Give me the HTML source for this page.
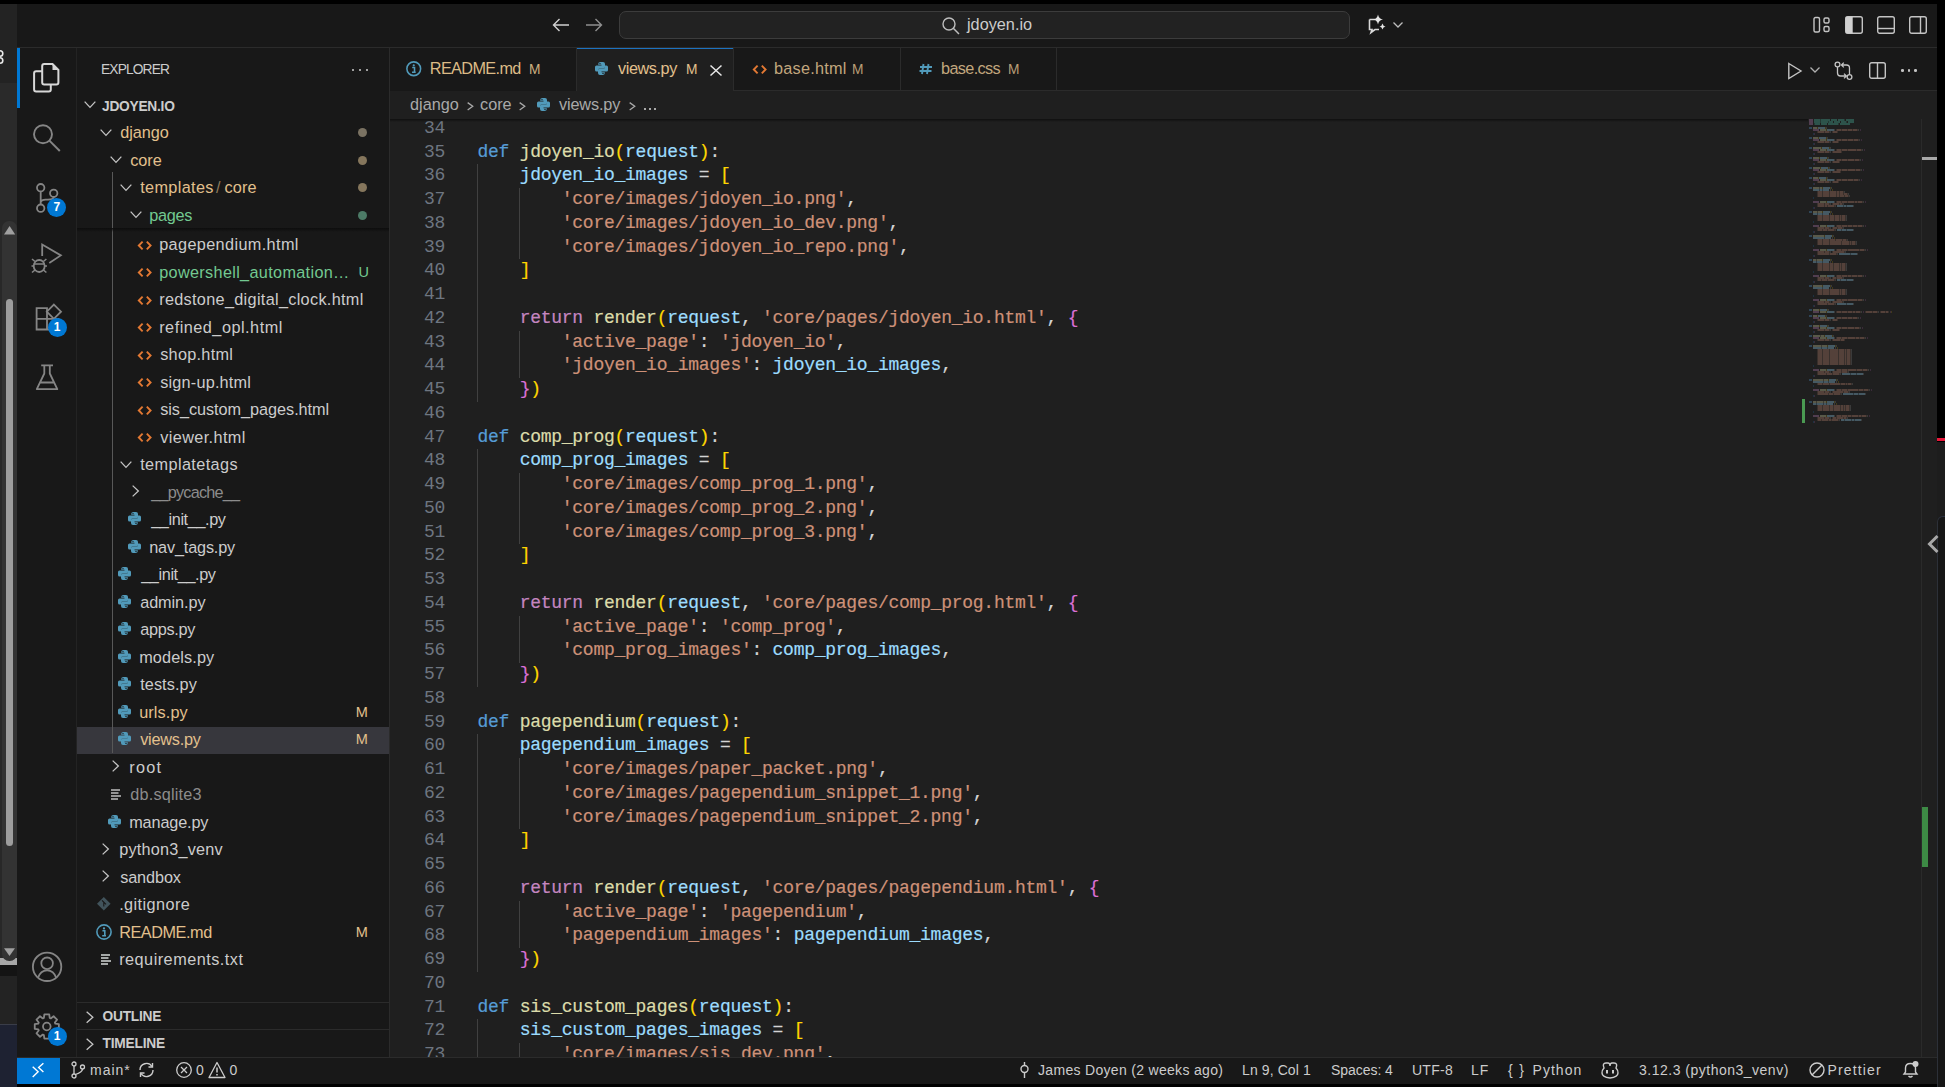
<!DOCTYPE html><html><head><meta charset="utf-8"><style>html,body{margin:0;padding:0;width:1945px;height:1087px;overflow:hidden;background:#000}</style></head><body><div style="position:relative;width:1945px;height:1087px;overflow:hidden"><div style="position:absolute;left:0px;top:0px;width:1945px;height:1087px;background:#000;"></div>
<div style="position:absolute;left:0px;top:4px;width:17px;height:79px;background:#232323;"></div>
<div style="position:absolute;left:0px;top:83px;width:17px;height:137px;background:#2a2a2a;"></div>
<div style="position:absolute;left:0px;top:220px;width:17px;height:745px;background:#282828;"></div>
<div style="position:absolute;left:0px;top:958px;width:17px;height:6.7px;background:#a8a8a8;"></div>
<div style="position:absolute;left:2.2px;top:220.7px;width:14.4px;height:740.7px;background:#333333;border-radius:7.2px"></div>
<div style="position:absolute;left:6px;top:299.4px;width:7.2px;height:547px;background:#9d9d9d;border-radius:3.6px"></div>
<svg style="position:absolute;left:3px;top:225px;" width="13" height="11" viewBox="0 0 13 11"><path d="M6.6 1 L12.2 9.5 L1 9.5 Z" fill="#a0a0a0"/></svg>
<svg style="position:absolute;left:3px;top:947px;" width="13" height="10" viewBox="0 0 13 10"><path d="M1 1.2 L12 1.2 L6.5 9 Z" fill="#a0a0a0"/></svg>
<div style="position:absolute;left:0px;top:964.7px;width:17px;height:11px;background:#141414;"></div>
<div style="position:absolute;left:0px;top:975.8px;width:17px;height:48px;background:#232323;"></div>
<div style="position:absolute;left:0px;top:1023.8px;width:17px;height:1px;background:#3a3d48;"></div>
<div style="position:absolute;left:0px;top:1024.8px;width:17px;height:62.2px;background:#1e2232;"></div>
<svg style="position:absolute;left:-4px;top:47px;" width="10" height="22" viewBox="0 0 10 22"><circle cx="4" cy="6.5" r="2.8" fill="none" stroke="#e8e8e8" stroke-width="1.6"/><circle cx="4" cy="13.5" r="2.8" fill="none" stroke="#e8e8e8" stroke-width="1.6"/></svg>
<div style="position:absolute;left:1937px;top:0px;width:8px;height:1087px;background:#000;"></div>
<div style="position:absolute;left:1937.4px;top:438.4px;width:7.6px;height:3.1px;background:#e8173a;"></div>
<div style="position:absolute;left:1937.4px;top:441.5px;width:7.6px;height:80px;background:#1d1d1d;"></div>
<div style="position:absolute;left:1937.4px;top:516px;width:10px;height:571px;background:#161616;border-left:1px solid #2c3038;border-top:1px solid #2a3040;border-top-left-radius:6px;box-sizing:border-box"></div>
<div style="position:absolute;left:17px;top:4px;width:1920px;height:43px;background:#181818;"></div>
<div style="position:absolute;left:17px;top:47px;width:1920px;height:1px;background:#2b2b2b;"></div>
<div style="position:absolute;left:17px;top:48px;width:60px;height:1009px;background:#181818;"></div>
<div style="position:absolute;left:76px;top:48px;width:1px;height:1009px;background:#232323;"></div>
<div style="position:absolute;left:77px;top:48px;width:312px;height:1009px;background:#181818;"></div>
<div style="position:absolute;left:389px;top:48px;width:1px;height:1009px;background:#2b2b2b;"></div>
<div style="position:absolute;left:390px;top:48px;width:1547px;height:43px;background:#181818;"></div>
<div style="position:absolute;left:390px;top:90px;width:1547px;height:1px;background:#2b2b2b;"></div>
<div style="position:absolute;left:390px;top:91px;width:1547px;height:966px;background:#1f1f1f;"></div>
<div style="position:absolute;left:17px;top:1057px;width:1920px;height:27px;background:#181818;"></div>
<div style="position:absolute;left:17px;top:1057px;width:1920px;height:1px;background:#2b2b2b;"></div>
<!--CONTENT-->
<svg style="position:absolute;left:551px;top:17px;" width="20" height="16" viewBox="0 0 20 16"><path d="M2.5 8 H18 M8.5 2 L2.5 8 L8.5 14" fill="none" stroke="#d0d0d0" stroke-width="1.4"/></svg>
<svg style="position:absolute;left:584px;top:17px;" width="20" height="16" viewBox="0 0 20 16"><path d="M2 8 H17.5 M11.5 2 L17.5 8 L11.5 14" fill="none" stroke="#8f8f8f" stroke-width="1.4"/></svg>
<div style="position:absolute;left:619px;top:11px;width:731px;height:28px;background:#222222;border:1px solid #3c3c3c;border-radius:7px;box-sizing:border-box"></div>
<svg style="position:absolute;left:941px;top:16px;" width="20" height="19" viewBox="0 0 20 19"><circle cx="8" cy="8" r="6" fill="none" stroke="#bdbdbd" stroke-width="1.4"/><path d="M12.3 12.3 L18 18" stroke="#bdbdbd" stroke-width="1.5"/></svg>
<div style="position:absolute;left:967.00px;top:13.8px;white-space:pre;font-family:'Liberation Sans', sans-serif;font-size:16.25px;line-height:20px;color:#cccccc;font-weight:400;letter-spacing:0.000px;">jdoyen.io</div>
<svg style="position:absolute;left:1366px;top:13px;" width="24" height="22" viewBox="0 0 24 22"><path d="M3.5 6.5 H9 M3.5 6.5 V16.5 H6 L5 19.5 L9 16.5 H13" fill="none" stroke="#d8d8d8" stroke-width="1.6"/><path d="M12 1.5 Q12.8 5.8 17 6.5 Q12.8 7.2 12 11.5 Q11.2 7.2 7 6.5 Q11.2 5.8 12 1.5Z" fill="#e6e6e6"/><path d="M16.5 10.5 Q17 13 19.5 13.5 Q17 14 16.5 16.5 Q16 14 13.5 13.5 Q16 13 16.5 10.5Z" fill="#e6e6e6"/></svg>
<svg style="position:absolute;left:1392px;top:21px;" width="12" height="8" viewBox="0 0 12 8"><path d="M1.5 1.5 L6 6 L10.5 1.5" fill="none" stroke="#bdbdbd" stroke-width="1.3"/></svg>
<svg style="position:absolute;left:1812px;top:16px;" width="20" height="18" viewBox="0 0 20 18"><rect x="2" y="1.5" width="5.5" height="14.5" rx="1.5" fill="none" stroke="#c4c4c4" stroke-width="1.4"/><rect x="12" y="2" width="5" height="5" rx="1.5" fill="none" stroke="#c4c4c4" stroke-width="1.4"/><rect x="12" y="10.5" width="5" height="5" rx="1.5" fill="none" stroke="#c4c4c4" stroke-width="1.4"/></svg>
<svg style="position:absolute;left:1844px;top:15px;" width="20" height="20" viewBox="0 0 20 20"><rect x="1.7" y="1.7" width="16.6" height="16.6" rx="2" fill="none" stroke="#c4c4c4" stroke-width="1.4"/><rect x="1.7" y="1.7" width="7" height="16.6" fill="#d0d0d0"/></svg>
<svg style="position:absolute;left:1876px;top:15px;" width="20" height="20" viewBox="0 0 20 20"><rect x="1.7" y="1.7" width="16.6" height="16.6" rx="2" fill="none" stroke="#c4c4c4" stroke-width="1.4"/><path d="M1.7 13.5 H18.3" stroke="#c4c4c4" stroke-width="1.4"/></svg>
<svg style="position:absolute;left:1908px;top:15px;" width="20" height="20" viewBox="0 0 20 20"><rect x="1.7" y="1.7" width="16.6" height="16.6" rx="2" fill="none" stroke="#c4c4c4" stroke-width="1.4"/><path d="M12.5 1.7 V18.3" stroke="#c4c4c4" stroke-width="1.4"/></svg>
<div style="position:absolute;left:17px;top:48px;width:2.5px;height:60px;background:#0078d4;"></div>
<svg style="position:absolute;left:17px;top:48px" width="60" height="1009" viewBox="17 48 60 1009"><path d="M44.2 64.1 H52.5 L58.4 70 V82.4 Q58.4 84.4 56.4 84.4 H44.2 Q42.2 84.4 42.2 82.4 V66.1 Q42.2 64.1 44.2 64.1 Z" fill="none" stroke="#d7d7d7" stroke-width="2"/><path d="M52.5 64.1 V70 H58.4 Z" fill="#d7d7d7"/><path d="M42.2 71.2 H36.1 Q34.1 71.2 34.1 73.2 V89.5 Q34.1 91.5 36.1 91.5 H48.8 Q50.8 91.5 50.8 89.5 V84.4" fill="none" stroke="#d7d7d7" stroke-width="2"/><circle cx="43" cy="134.2" r="9" fill="none" stroke="#858585" stroke-width="1.9"/><path d="M49.4 140.6 L59.8 151" stroke="#858585" stroke-width="2"/><circle cx="40.7" cy="187.7" r="3.7" fill="none" stroke="#858585" stroke-width="1.8"/><circle cx="53.7" cy="193.3" r="3.7" fill="none" stroke="#858585" stroke-width="1.8"/><circle cx="40.7" cy="208.2" r="3.7" fill="none" stroke="#858585" stroke-width="1.8"/><path d="M40.7 191.4 V204.5 M40.7 202 Q41.5 199.6 45.5 199.6 H48 Q53.7 199.6 53.7 197" fill="none" stroke="#858585" stroke-width="1.8"/><path d="M42.2 256 V244.5 L60.8 255.4 L49.3 263" fill="none" stroke="#858585" stroke-width="1.8" stroke-linejoin="miter"/><ellipse cx="39.2" cy="266" rx="5.5" ry="6" fill="none" stroke="#858585" stroke-width="1.8"/><path d="M33.7 264 H44.7 M32 259 L35 261.5 M46.4 259 L43.4 261.5 M31.5 266 H33.7 M44.7 266 H47 M32 272.5 L35 270 M46.4 272.5 L43.4 270" fill="none" stroke="#858585" stroke-width="1.6"/><path d="M36.6 308.1 H47 V318.8 H58.5 V329.5 H36.6 Z M47 318.8 V329.5 M36.6 318.8 H47" fill="none" stroke="#858585" stroke-width="1.8"/><path d="M53.9 304.6 L61 311.7 L53.9 318.8 L46.8 311.7 Z" fill="none" stroke="#858585" stroke-width="1.8"/><path d="M41.2 365.3 H53 M44.3 365.3 V373.5 L36.8 389.2 H57.3 L49.8 373.5 V365.3 M39.5 382.5 H54.6" fill="none" stroke="#858585" stroke-width="1.8" stroke-linejoin="round"/><circle cx="47.1" cy="966.8" r="14.2" fill="none" stroke="#858585" stroke-width="1.8"/><circle cx="47.1" cy="963.3" r="5.8" fill="none" stroke="#858585" stroke-width="1.8"/><path d="M38 977.8 Q40.5 970.3 47.1 970.3 Q53.7 970.3 56.2 977.8" fill="none" stroke="#858585" stroke-width="1.8"/><polygon points="55.31,1023.58 58.85,1024.06 58.85,1028.94 55.31,1029.42 54.88,1030.46 57.05,1033.30 53.60,1036.75 50.76,1034.58 49.72,1035.01 49.24,1038.55 44.36,1038.55 43.88,1035.01 42.84,1034.58 40.00,1036.75 36.55,1033.30 38.72,1030.46 38.29,1029.42 34.75,1028.94 34.75,1024.06 38.29,1023.58 38.72,1022.54 36.55,1019.70 40.00,1016.25 42.84,1018.42 43.88,1017.99 44.36,1014.45 49.24,1014.45 49.72,1017.99 50.76,1018.42 53.60,1016.25 57.05,1019.70 54.88,1022.54" fill="none" stroke="#858585" stroke-width="1.8" stroke-linejoin="round"/><circle cx="46.8" cy="1026.5" r="3.8" fill="none" stroke="#858585" stroke-width="1.8"/></svg>
<div style="position:absolute;left:47.3px;top:198.3px;width:19.2px;height:19.2px;border-radius:9.6px;background:#0078d4;color:#fff;font-family:'Liberation Sans', sans-serif;font-size:12px;font-weight:700;line-height:19.2px;text-align:center">7</div>
<div style="position:absolute;left:47.6px;top:318.29999999999995px;width:19.2px;height:19.2px;border-radius:9.6px;background:#0078d4;color:#fff;font-family:'Liberation Sans', sans-serif;font-size:12px;font-weight:700;line-height:19.2px;text-align:center">1</div>
<div style="position:absolute;left:47.6px;top:1027.0px;width:19.2px;height:19.2px;border-radius:9.6px;background:#0078d4;color:#fff;font-family:'Liberation Sans', sans-serif;font-size:12px;font-weight:700;line-height:19.2px;text-align:center">1</div>
<div style="position:absolute;left:101.00px;top:61px;white-space:pre;font-family:'Liberation Sans', sans-serif;font-size:13.75px;line-height:18px;color:#cccccc;font-weight:400;letter-spacing:-0.857px;">EXPLORER</div>
<div style="position:absolute;left:351.8px;top:68.5px;width:2.6px;height:2.6px;background:#cccccc;border-radius:1.3px"></div>
<div style="position:absolute;left:358.8px;top:68.5px;width:2.6px;height:2.6px;background:#cccccc;border-radius:1.3px"></div>
<div style="position:absolute;left:365.8px;top:68.5px;width:2.6px;height:2.6px;background:#cccccc;border-radius:1.3px"></div>
<svg style="position:absolute;left:82.5px;top:100px;" width="14" height="9" viewBox="0 0 14 9"><path d="M1.65 1.65 L7.0 7.35 L12.35 1.65" fill="none" stroke="#c5c5c5" stroke-width="1.3"/></svg>
<div style="position:absolute;left:102.00px;top:98px;white-space:pre;font-family:'Liberation Sans', sans-serif;font-size:13.75px;line-height:18px;color:#cccccc;font-weight:700;letter-spacing:-0.250px;">JDOYEN.IO</div>
<div style="position:absolute;left:77px;top:727.2px;width:312px;height:26.5px;background:#37373d;"></div>
<div style="position:absolute;left:112.4px;top:172px;width:1px;height:581.0px;background:#585858;"></div>
<svg style="position:absolute;left:137px;top:239.8px;" width="16" height="12" viewBox="0 0 16 12"><path d="M5.6 1.6 L1.8 5.5 L5.6 9.4 M9.8 1.6 L13.6 5.5 L9.8 9.4" fill="none" stroke="#e37933" stroke-width="1.9"/></svg>
<div style="position:absolute;left:159.20px;top:234.0px;white-space:pre;font-family:'Liberation Sans', sans-serif;font-size:16.25px;line-height:20px;color:#cccccc;font-weight:400;letter-spacing:0.367px;">pagependium.html</div>
<svg style="position:absolute;left:137px;top:267.3px;" width="16" height="12" viewBox="0 0 16 12"><path d="M5.6 1.6 L1.8 5.5 L5.6 9.4 M9.8 1.6 L13.6 5.5 L9.8 9.4" fill="none" stroke="#e37933" stroke-width="1.9"/></svg>
<div style="position:absolute;left:159.20px;top:261.5px;white-space:pre;font-family:'Liberation Sans', sans-serif;font-size:16.25px;line-height:20px;color:#73c991;font-weight:400;letter-spacing:0.324px;">powershell_automation…</div>
<div style="position:absolute;left:358.60px;top:261.5px;white-space:pre;font-family:'Liberation Sans', sans-serif;font-size:14.5px;line-height:20px;color:#73c991;font-weight:400;letter-spacing:0.000px;">U</div>
<svg style="position:absolute;left:137px;top:294.8px;" width="16" height="12" viewBox="0 0 16 12"><path d="M5.6 1.6 L1.8 5.5 L5.6 9.4 M9.8 1.6 L13.6 5.5 L9.8 9.4" fill="none" stroke="#e37933" stroke-width="1.9"/></svg>
<div style="position:absolute;left:159.20px;top:289.0px;white-space:pre;font-family:'Liberation Sans', sans-serif;font-size:16.25px;line-height:20px;color:#cccccc;font-weight:400;letter-spacing:0.312px;">redstone_digital_clock.html</div>
<svg style="position:absolute;left:137px;top:322.3px;" width="16" height="12" viewBox="0 0 16 12"><path d="M5.6 1.6 L1.8 5.5 L5.6 9.4 M9.8 1.6 L13.6 5.5 L9.8 9.4" fill="none" stroke="#e37933" stroke-width="1.9"/></svg>
<div style="position:absolute;left:159.20px;top:316.5px;white-space:pre;font-family:'Liberation Sans', sans-serif;font-size:16.25px;line-height:20px;color:#cccccc;font-weight:400;letter-spacing:0.500px;">refined_opl.html</div>
<svg style="position:absolute;left:137px;top:349.8px;" width="16" height="12" viewBox="0 0 16 12"><path d="M5.6 1.6 L1.8 5.5 L5.6 9.4 M9.8 1.6 L13.6 5.5 L9.8 9.4" fill="none" stroke="#e37933" stroke-width="1.9"/></svg>
<div style="position:absolute;left:160.20px;top:344.0px;white-space:pre;font-family:'Liberation Sans', sans-serif;font-size:16.25px;line-height:20px;color:#cccccc;font-weight:400;letter-spacing:0.287px;">shop.html</div>
<svg style="position:absolute;left:137px;top:377.3px;" width="16" height="12" viewBox="0 0 16 12"><path d="M5.6 1.6 L1.8 5.5 L5.6 9.4 M9.8 1.6 L13.6 5.5 L9.8 9.4" fill="none" stroke="#e37933" stroke-width="1.9"/></svg>
<div style="position:absolute;left:160.20px;top:371.5px;white-space:pre;font-family:'Liberation Sans', sans-serif;font-size:16.25px;line-height:20px;color:#cccccc;font-weight:400;letter-spacing:0.200px;">sign-up.html</div>
<svg style="position:absolute;left:137px;top:404.8px;" width="16" height="12" viewBox="0 0 16 12"><path d="M5.6 1.6 L1.8 5.5 L5.6 9.4 M9.8 1.6 L13.6 5.5 L9.8 9.4" fill="none" stroke="#e37933" stroke-width="1.9"/></svg>
<div style="position:absolute;left:160.20px;top:399.0px;white-space:pre;font-family:'Liberation Sans', sans-serif;font-size:16.25px;line-height:20px;color:#cccccc;font-weight:400;letter-spacing:-0.040px;">sis_custom_pages.html</div>
<svg style="position:absolute;left:137px;top:432.3px;" width="16" height="12" viewBox="0 0 16 12"><path d="M5.6 1.6 L1.8 5.5 L5.6 9.4 M9.8 1.6 L13.6 5.5 L9.8 9.4" fill="none" stroke="#e37933" stroke-width="1.9"/></svg>
<div style="position:absolute;left:160.20px;top:426.5px;white-space:pre;font-family:'Liberation Sans', sans-serif;font-size:16.25px;line-height:20px;color:#cccccc;font-weight:400;letter-spacing:0.390px;">viewer.html</div>
<svg style="position:absolute;left:118.5px;top:459.5px;" width="14" height="9" viewBox="0 0 14 9"><path d="M1.65 1.65 L7.0 7.35 L12.35 1.65" fill="none" stroke="#c5c5c5" stroke-width="1.3"/></svg>
<div style="position:absolute;left:140.20px;top:454.0px;white-space:pre;font-family:'Liberation Sans', sans-serif;font-size:16.25px;line-height:20px;color:#cccccc;font-weight:400;letter-spacing:0.391px;">templatetags</div>
<svg style="position:absolute;left:131.2px;top:484.0px;" width="9" height="14" viewBox="0 0 9 14"><path d="M1.65 1.65 L7.35 7.0 L1.65 12.35" fill="none" stroke="#c5c5c5" stroke-width="1.3"/></svg>
<div style="position:absolute;left:151.20px;top:481.5px;white-space:pre;font-family:'Liberation Sans', sans-serif;font-size:16.25px;line-height:20px;color:#8c8c8c;font-weight:400;letter-spacing:-0.780px;">__pycache__</div>
<svg style="position:absolute;left:126.5px;top:511.0px;" width="16" height="16" viewBox="0 0 16 16"><path d="M6.5 1 H9 Q11 1 11 3 V6 Q11 7.5 9.5 7.5 H5.5 Q4 7.5 4 9 V10.5 H2.5 Q1 10.5 1 9 V6 Q1 4.5 2.5 4.5 H7.5 V3.7 H4.2 V3 Q4.2 1 6.5 1 Z" fill="#519aba"/><path d="M8.5 14 H6 Q4 14 4 12 V9 Q4 7.5 5.5 7.5 H9.5 Q11 7.5 11 6 V4.5 H12.5 Q14 4.5 14 6 V9 Q14 10.5 12.5 10.5 H7.5 V11.3 H10.8 V12 Q10.8 14 8.5 14 Z" fill="#519aba"/><circle cx="6" cy="2.6" r="0.7" fill="#181818"/><circle cx="9" cy="12.4" r="0.7" fill="#181818"/></svg>
<div style="position:absolute;left:151.20px;top:509.0px;white-space:pre;font-family:'Liberation Sans', sans-serif;font-size:16.25px;line-height:20px;color:#cccccc;font-weight:400;letter-spacing:-0.380px;">__init__.py</div>
<svg style="position:absolute;left:126.5px;top:538.5px;" width="16" height="16" viewBox="0 0 16 16"><path d="M6.5 1 H9 Q11 1 11 3 V6 Q11 7.5 9.5 7.5 H5.5 Q4 7.5 4 9 V10.5 H2.5 Q1 10.5 1 9 V6 Q1 4.5 2.5 4.5 H7.5 V3.7 H4.2 V3 Q4.2 1 6.5 1 Z" fill="#519aba"/><path d="M8.5 14 H6 Q4 14 4 12 V9 Q4 7.5 5.5 7.5 H9.5 Q11 7.5 11 6 V4.5 H12.5 Q14 4.5 14 6 V9 Q14 10.5 12.5 10.5 H7.5 V11.3 H10.8 V12 Q10.8 14 8.5 14 Z" fill="#519aba"/><circle cx="6" cy="2.6" r="0.7" fill="#181818"/><circle cx="9" cy="12.4" r="0.7" fill="#181818"/></svg>
<div style="position:absolute;left:149.20px;top:536.5px;white-space:pre;font-family:'Liberation Sans', sans-serif;font-size:16.25px;line-height:20px;color:#cccccc;font-weight:400;letter-spacing:-0.160px;">nav_tags.py</div>
<svg style="position:absolute;left:116.5px;top:566.0px;" width="16" height="16" viewBox="0 0 16 16"><path d="M6.5 1 H9 Q11 1 11 3 V6 Q11 7.5 9.5 7.5 H5.5 Q4 7.5 4 9 V10.5 H2.5 Q1 10.5 1 9 V6 Q1 4.5 2.5 4.5 H7.5 V3.7 H4.2 V3 Q4.2 1 6.5 1 Z" fill="#519aba"/><path d="M8.5 14 H6 Q4 14 4 12 V9 Q4 7.5 5.5 7.5 H9.5 Q11 7.5 11 6 V4.5 H12.5 Q14 4.5 14 6 V9 Q14 10.5 12.5 10.5 H7.5 V11.3 H10.8 V12 Q10.8 14 8.5 14 Z" fill="#519aba"/><circle cx="6" cy="2.6" r="0.7" fill="#181818"/><circle cx="9" cy="12.4" r="0.7" fill="#181818"/></svg>
<div style="position:absolute;left:141.20px;top:564.0px;white-space:pre;font-family:'Liberation Sans', sans-serif;font-size:16.25px;line-height:20px;color:#cccccc;font-weight:400;letter-spacing:-0.380px;">__init__.py</div>
<svg style="position:absolute;left:116.5px;top:593.5px;" width="16" height="16" viewBox="0 0 16 16"><path d="M6.5 1 H9 Q11 1 11 3 V6 Q11 7.5 9.5 7.5 H5.5 Q4 7.5 4 9 V10.5 H2.5 Q1 10.5 1 9 V6 Q1 4.5 2.5 4.5 H7.5 V3.7 H4.2 V3 Q4.2 1 6.5 1 Z" fill="#519aba"/><path d="M8.5 14 H6 Q4 14 4 12 V9 Q4 7.5 5.5 7.5 H9.5 Q11 7.5 11 6 V4.5 H12.5 Q14 4.5 14 6 V9 Q14 10.5 12.5 10.5 H7.5 V11.3 H10.8 V12 Q10.8 14 8.5 14 Z" fill="#519aba"/><circle cx="6" cy="2.6" r="0.7" fill="#181818"/><circle cx="9" cy="12.4" r="0.7" fill="#181818"/></svg>
<div style="position:absolute;left:140.20px;top:591.5px;white-space:pre;font-family:'Liberation Sans', sans-serif;font-size:16.25px;line-height:20px;color:#cccccc;font-weight:400;letter-spacing:-0.086px;">admin.py</div>
<svg style="position:absolute;left:116.5px;top:621.0px;" width="16" height="16" viewBox="0 0 16 16"><path d="M6.5 1 H9 Q11 1 11 3 V6 Q11 7.5 9.5 7.5 H5.5 Q4 7.5 4 9 V10.5 H2.5 Q1 10.5 1 9 V6 Q1 4.5 2.5 4.5 H7.5 V3.7 H4.2 V3 Q4.2 1 6.5 1 Z" fill="#519aba"/><path d="M8.5 14 H6 Q4 14 4 12 V9 Q4 7.5 5.5 7.5 H9.5 Q11 7.5 11 6 V4.5 H12.5 Q14 4.5 14 6 V9 Q14 10.5 12.5 10.5 H7.5 V11.3 H10.8 V12 Q10.8 14 8.5 14 Z" fill="#519aba"/><circle cx="6" cy="2.6" r="0.7" fill="#181818"/><circle cx="9" cy="12.4" r="0.7" fill="#181818"/></svg>
<div style="position:absolute;left:140.20px;top:619.0px;white-space:pre;font-family:'Liberation Sans', sans-serif;font-size:16.25px;line-height:20px;color:#cccccc;font-weight:400;letter-spacing:-0.283px;">apps.py</div>
<svg style="position:absolute;left:116.5px;top:648.5px;" width="16" height="16" viewBox="0 0 16 16"><path d="M6.5 1 H9 Q11 1 11 3 V6 Q11 7.5 9.5 7.5 H5.5 Q4 7.5 4 9 V10.5 H2.5 Q1 10.5 1 9 V6 Q1 4.5 2.5 4.5 H7.5 V3.7 H4.2 V3 Q4.2 1 6.5 1 Z" fill="#519aba"/><path d="M8.5 14 H6 Q4 14 4 12 V9 Q4 7.5 5.5 7.5 H9.5 Q11 7.5 11 6 V4.5 H12.5 Q14 4.5 14 6 V9 Q14 10.5 12.5 10.5 H7.5 V11.3 H10.8 V12 Q10.8 14 8.5 14 Z" fill="#519aba"/><circle cx="6" cy="2.6" r="0.7" fill="#181818"/><circle cx="9" cy="12.4" r="0.7" fill="#181818"/></svg>
<div style="position:absolute;left:139.20px;top:646.5px;white-space:pre;font-family:'Liberation Sans', sans-serif;font-size:16.25px;line-height:20px;color:#cccccc;font-weight:400;letter-spacing:0.125px;">models.py</div>
<svg style="position:absolute;left:116.5px;top:676.0px;" width="16" height="16" viewBox="0 0 16 16"><path d="M6.5 1 H9 Q11 1 11 3 V6 Q11 7.5 9.5 7.5 H5.5 Q4 7.5 4 9 V10.5 H2.5 Q1 10.5 1 9 V6 Q1 4.5 2.5 4.5 H7.5 V3.7 H4.2 V3 Q4.2 1 6.5 1 Z" fill="#519aba"/><path d="M8.5 14 H6 Q4 14 4 12 V9 Q4 7.5 5.5 7.5 H9.5 Q11 7.5 11 6 V4.5 H12.5 Q14 4.5 14 6 V9 Q14 10.5 12.5 10.5 H7.5 V11.3 H10.8 V12 Q10.8 14 8.5 14 Z" fill="#519aba"/><circle cx="6" cy="2.6" r="0.7" fill="#181818"/><circle cx="9" cy="12.4" r="0.7" fill="#181818"/></svg>
<div style="position:absolute;left:140.20px;top:674.0px;white-space:pre;font-family:'Liberation Sans', sans-serif;font-size:16.25px;line-height:20px;color:#cccccc;font-weight:400;letter-spacing:0.086px;">tests.py</div>
<svg style="position:absolute;left:116.5px;top:703.5px;" width="16" height="16" viewBox="0 0 16 16"><path d="M6.5 1 H9 Q11 1 11 3 V6 Q11 7.5 9.5 7.5 H5.5 Q4 7.5 4 9 V10.5 H2.5 Q1 10.5 1 9 V6 Q1 4.5 2.5 4.5 H7.5 V3.7 H4.2 V3 Q4.2 1 6.5 1 Z" fill="#519aba"/><path d="M8.5 14 H6 Q4 14 4 12 V9 Q4 7.5 5.5 7.5 H9.5 Q11 7.5 11 6 V4.5 H12.5 Q14 4.5 14 6 V9 Q14 10.5 12.5 10.5 H7.5 V11.3 H10.8 V12 Q10.8 14 8.5 14 Z" fill="#519aba"/><circle cx="6" cy="2.6" r="0.7" fill="#181818"/><circle cx="9" cy="12.4" r="0.7" fill="#181818"/></svg>
<div style="position:absolute;left:139.20px;top:701.5px;white-space:pre;font-family:'Liberation Sans', sans-serif;font-size:16.25px;line-height:20px;color:#e2c08d;font-weight:400;letter-spacing:0.100px;">urls.py</div>
<div style="position:absolute;left:355.70px;top:701.5px;white-space:pre;font-family:'Liberation Sans', sans-serif;font-size:14.5px;line-height:20px;color:#e2c08d;font-weight:400;letter-spacing:0.000px;">M</div>
<svg style="position:absolute;left:116.5px;top:731.0px;" width="16" height="16" viewBox="0 0 16 16"><path d="M6.5 1 H9 Q11 1 11 3 V6 Q11 7.5 9.5 7.5 H5.5 Q4 7.5 4 9 V10.5 H2.5 Q1 10.5 1 9 V6 Q1 4.5 2.5 4.5 H7.5 V3.7 H4.2 V3 Q4.2 1 6.5 1 Z" fill="#519aba"/><path d="M8.5 14 H6 Q4 14 4 12 V9 Q4 7.5 5.5 7.5 H9.5 Q11 7.5 11 6 V4.5 H12.5 Q14 4.5 14 6 V9 Q14 10.5 12.5 10.5 H7.5 V11.3 H10.8 V12 Q10.8 14 8.5 14 Z" fill="#519aba"/><circle cx="6" cy="2.6" r="0.7" fill="#181818"/><circle cx="9" cy="12.4" r="0.7" fill="#181818"/></svg>
<div style="position:absolute;left:140.20px;top:729.0px;white-space:pre;font-family:'Liberation Sans', sans-serif;font-size:16.25px;line-height:20px;color:#e2c08d;font-weight:400;letter-spacing:-0.229px;">views.py</div>
<div style="position:absolute;left:355.70px;top:729.0px;white-space:pre;font-family:'Liberation Sans', sans-serif;font-size:14.5px;line-height:20px;color:#e2c08d;font-weight:400;letter-spacing:0.000px;">M</div>
<svg style="position:absolute;left:111.2px;top:759.0px;" width="9" height="14" viewBox="0 0 9 14"><path d="M1.65 1.65 L7.35 7.0 L1.65 12.35" fill="none" stroke="#c5c5c5" stroke-width="1.3"/></svg>
<div style="position:absolute;left:129.20px;top:756.5px;white-space:pre;font-family:'Liberation Sans', sans-serif;font-size:16.25px;line-height:20px;color:#cccccc;font-weight:400;letter-spacing:1.300px;">root</div>
<svg style="position:absolute;left:110px;top:787.5px;" width="14" height="14" viewBox="0 0 14 14"><path d="M1 2 H10 M1 5 H8.5 M1 8 H11 M1 11 H8" stroke="#bdbdbd" stroke-width="1.7"/></svg>
<div style="position:absolute;left:130.20px;top:784.0px;white-space:pre;font-family:'Liberation Sans', sans-serif;font-size:16.25px;line-height:20px;color:#8c8c8c;font-weight:400;letter-spacing:0.200px;">db.sqlite3</div>
<svg style="position:absolute;left:106.5px;top:813.5px;" width="16" height="16" viewBox="0 0 16 16"><path d="M6.5 1 H9 Q11 1 11 3 V6 Q11 7.5 9.5 7.5 H5.5 Q4 7.5 4 9 V10.5 H2.5 Q1 10.5 1 9 V6 Q1 4.5 2.5 4.5 H7.5 V3.7 H4.2 V3 Q4.2 1 6.5 1 Z" fill="#519aba"/><path d="M8.5 14 H6 Q4 14 4 12 V9 Q4 7.5 5.5 7.5 H9.5 Q11 7.5 11 6 V4.5 H12.5 Q14 4.5 14 6 V9 Q14 10.5 12.5 10.5 H7.5 V11.3 H10.8 V12 Q10.8 14 8.5 14 Z" fill="#519aba"/><circle cx="6" cy="2.6" r="0.7" fill="#181818"/><circle cx="9" cy="12.4" r="0.7" fill="#181818"/></svg>
<div style="position:absolute;left:129.20px;top:811.5px;white-space:pre;font-family:'Liberation Sans', sans-serif;font-size:16.25px;line-height:20px;color:#cccccc;font-weight:400;letter-spacing:-0.137px;">manage.py</div>
<svg style="position:absolute;left:101.2px;top:841.5px;" width="9" height="14" viewBox="0 0 9 14"><path d="M1.65 1.65 L7.35 7.0 L1.65 12.35" fill="none" stroke="#c5c5c5" stroke-width="1.3"/></svg>
<div style="position:absolute;left:119.20px;top:839.0px;white-space:pre;font-family:'Liberation Sans', sans-serif;font-size:16.25px;line-height:20px;color:#cccccc;font-weight:400;letter-spacing:0.200px;">python3_venv</div>
<svg style="position:absolute;left:101.2px;top:869.0px;" width="9" height="14" viewBox="0 0 9 14"><path d="M1.65 1.65 L7.35 7.0 L1.65 12.35" fill="none" stroke="#c5c5c5" stroke-width="1.3"/></svg>
<div style="position:absolute;left:120.20px;top:866.5px;white-space:pre;font-family:'Liberation Sans', sans-serif;font-size:16.25px;line-height:20px;color:#cccccc;font-weight:400;letter-spacing:-0.117px;">sandbox</div>
<svg style="position:absolute;left:96.4px;top:896.0px;" width="16" height="16" viewBox="0 0 16 16"><path d="M7.8 1 L14.6 7.8 L7.8 14.6 L1 7.8 Z" fill="#41535b"/><path d="M6 4.4 L10 8.4 M7.8 6.2 V10.6" stroke="#181818" stroke-width="1.1"/></svg>
<div style="position:absolute;left:119.20px;top:894.0px;white-space:pre;font-family:'Liberation Sans', sans-serif;font-size:16.25px;line-height:20px;color:#cccccc;font-weight:400;letter-spacing:0.422px;">.gitignore</div>
<svg style="position:absolute;left:95.3px;top:923.0px;" width="18" height="18" viewBox="0 0 18 18"><g transform="translate(1,1) scale(1.0)"><circle cx="8" cy="8" r="7.1" fill="none" stroke="#519aba" stroke-width="1.6"/><circle cx="8" cy="4.4" r="1.15" fill="#519aba"/><path d="M6.4 6.7 H8.8 V11.7 H10 M6.2 11.7 H10" fill="none" stroke="#519aba" stroke-width="1.6"/></g></svg>
<div style="position:absolute;left:119.20px;top:921.5px;white-space:pre;font-family:'Liberation Sans', sans-serif;font-size:16.25px;line-height:20px;color:#e2c08d;font-weight:400;letter-spacing:-0.450px;">README.md</div>
<div style="position:absolute;left:355.70px;top:921.5px;white-space:pre;font-family:'Liberation Sans', sans-serif;font-size:14.5px;line-height:20px;color:#e2c08d;font-weight:400;letter-spacing:0.000px;">M</div>
<svg style="position:absolute;left:100px;top:952.5px;" width="14" height="14" viewBox="0 0 14 14"><path d="M1 2 H10 M1 5 H8.5 M1 8 H11 M1 11 H8" stroke="#d4d7d6" stroke-width="1.7"/></svg>
<div style="position:absolute;left:119.20px;top:949.0px;white-space:pre;font-family:'Liberation Sans', sans-serif;font-size:16.25px;line-height:20px;color:#cccccc;font-weight:400;letter-spacing:0.480px;">requirements.txt</div>
<div style="position:absolute;left:77px;top:118px;width:312px;height:110px;background:#181818;"></div>
<div style="position:absolute;left:77px;top:228px;width:312px;height:4px;background:linear-gradient(#0d0d0d,rgba(24,24,24,0));"></div>
<div style="position:absolute;left:112.4px;top:172px;width:1px;height:56px;background:#585858;"></div>
<svg style="position:absolute;left:98.5px;top:127.5px;" width="14" height="9" viewBox="0 0 14 9"><path d="M1.65 1.65 L7.0 7.35 L12.35 1.65" fill="none" stroke="#c5c5c5" stroke-width="1.3"/></svg>
<div style="position:absolute;left:120.20px;top:122.0px;white-space:pre;font-family:'Liberation Sans', sans-serif;font-size:16.25px;line-height:20px;color:#e2c08d;font-weight:400;letter-spacing:-0.020px;">django</div>
<div style="position:absolute;left:357.5px;top:128.0px;width:9px;height:9px;border-radius:4.5px;background:#7a7262"></div>
<svg style="position:absolute;left:108.5px;top:155.0px;" width="14" height="9" viewBox="0 0 14 9"><path d="M1.65 1.65 L7.0 7.35 L12.35 1.65" fill="none" stroke="#c5c5c5" stroke-width="1.3"/></svg>
<div style="position:absolute;left:130.20px;top:149.5px;white-space:pre;font-family:'Liberation Sans', sans-serif;font-size:16.25px;line-height:20px;color:#e2c08d;font-weight:400;letter-spacing:0.000px;">core</div>
<div style="position:absolute;left:357.5px;top:155.5px;width:9px;height:9px;border-radius:4.5px;background:#85765c"></div>
<svg style="position:absolute;left:118.5px;top:182.5px;" width="14" height="9" viewBox="0 0 14 9"><path d="M1.65 1.65 L7.0 7.35 L12.35 1.65" fill="none" stroke="#c5c5c5" stroke-width="1.3"/></svg>
<div style="position:absolute;left:140.20px;top:177.0px;white-space:pre;font-family:'Liberation Sans', sans-serif;font-size:16.25px;line-height:20px;color:#e2c08d;font-weight:400;letter-spacing:0.350px;">templates</div>
<div style="position:absolute;left:216.00px;top:177.0px;white-space:pre;font-family:'Liberation Sans', sans-serif;font-size:16.25px;line-height:20px;color:#8c7a5c;font-weight:400;letter-spacing:0.000px;">/</div>
<div style="position:absolute;left:224.50px;top:177.0px;white-space:pre;font-family:'Liberation Sans', sans-serif;font-size:16.25px;line-height:20px;color:#e2c08d;font-weight:400;letter-spacing:0.167px;">core</div>
<div style="position:absolute;left:357.5px;top:183.0px;width:9px;height:9px;border-radius:4.5px;background:#85765c"></div>
<svg style="position:absolute;left:128.5px;top:210.0px;" width="14" height="9" viewBox="0 0 14 9"><path d="M1.65 1.65 L7.0 7.35 L12.35 1.65" fill="none" stroke="#c5c5c5" stroke-width="1.3"/></svg>
<div style="position:absolute;left:149.20px;top:204.5px;white-space:pre;font-family:'Liberation Sans', sans-serif;font-size:16.25px;line-height:20px;color:#73c991;font-weight:400;letter-spacing:-0.275px;">pages</div>
<div style="position:absolute;left:357.5px;top:210.5px;width:9px;height:9px;border-radius:4.5px;background:#4c7a66"></div>
<div style="position:absolute;left:77px;top:1002px;width:312px;height:1px;background:#2b2b2b;"></div>
<div style="position:absolute;left:77px;top:1029px;width:312px;height:1px;background:#2b2b2b;"></div>
<svg style="position:absolute;left:85px;top:1009.5px;" width="9.5" height="14.5" viewBox="0 0 9.5 14.5"><path d="M1.65 1.65 L7.85 7.25 L1.65 12.85" fill="none" stroke="#c5c5c5" stroke-width="1.3"/></svg>
<div style="position:absolute;left:102.50px;top:1007.5px;white-space:pre;font-family:'Liberation Sans', sans-serif;font-size:13.75px;line-height:18px;color:#cccccc;font-weight:700;letter-spacing:-0.250px;">OUTLINE</div>
<svg style="position:absolute;left:85px;top:1037px;" width="9.5" height="14.5" viewBox="0 0 9.5 14.5"><path d="M1.65 1.65 L7.85 7.25 L1.65 12.85" fill="none" stroke="#c5c5c5" stroke-width="1.3"/></svg>
<div style="position:absolute;left:102.50px;top:1035.3px;white-space:pre;font-family:'Liberation Sans', sans-serif;font-size:13.75px;line-height:18px;color:#cccccc;font-weight:700;letter-spacing:-0.214px;">TIMELINE</div>
<div style="position:absolute;left:390px;top:48px;width:187px;height:43px;background:#181818;"></div>
<div style="position:absolute;left:576px;top:48px;width:1px;height:43px;background:#2b2b2b;"></div>
<div style="position:absolute;left:577px;top:48px;width:157px;height:44px;background:#1f1f1f;"></div>
<div style="position:absolute;left:577px;top:47.7px;width:157px;height:1.7px;background:#1c72c0;"></div>
<div style="position:absolute;left:733px;top:48px;width:1px;height:43px;background:#2b2b2b;"></div>
<div style="position:absolute;left:900px;top:48px;width:1px;height:43px;background:#2b2b2b;"></div>
<div style="position:absolute;left:1056px;top:48px;width:1px;height:43px;background:#2b2b2b;"></div>
<svg style="position:absolute;left:405px;top:60px;" width="17.5" height="17.5" viewBox="0 0 17.5 17.5"><g transform="translate(1,1) scale(0.96875)"><circle cx="8" cy="8" r="7.1" fill="none" stroke="#519aba" stroke-width="1.6"/><circle cx="8" cy="4.4" r="1.15" fill="#519aba"/><path d="M6.4 6.7 H8.8 V11.7 H10 M6.2 11.7 H10" fill="none" stroke="#519aba" stroke-width="1.6"/></g></svg>
<div style="position:absolute;left:429.80px;top:58.1px;white-space:pre;font-family:'Liberation Sans', sans-serif;font-size:16.25px;line-height:20px;color:#dcbb86;font-weight:400;letter-spacing:-0.637px;">README.md</div>
<div style="position:absolute;left:529.00px;top:59.5px;white-space:pre;font-family:'Liberation Sans', sans-serif;font-size:13.75px;line-height:20px;color:#cdb07f;font-weight:400;letter-spacing:0.000px;">M</div>
<svg style="position:absolute;left:594px;top:61px;" width="16" height="16" viewBox="0 0 16 16"><path d="M6.5 1 H9 Q11 1 11 3 V6 Q11 7.5 9.5 7.5 H5.5 Q4 7.5 4 9 V10.5 H2.5 Q1 10.5 1 9 V6 Q1 4.5 2.5 4.5 H7.5 V3.7 H4.2 V3 Q4.2 1 6.5 1 Z" fill="#519aba"/><path d="M8.5 14 H6 Q4 14 4 12 V9 Q4 7.5 5.5 7.5 H9.5 Q11 7.5 11 6 V4.5 H12.5 Q14 4.5 14 6 V9 Q14 10.5 12.5 10.5 H7.5 V11.3 H10.8 V12 Q10.8 14 8.5 14 Z" fill="#519aba"/><circle cx="6" cy="2.6" r="0.7" fill="#181818"/><circle cx="9" cy="12.4" r="0.7" fill="#181818"/></svg>
<div style="position:absolute;left:618.00px;top:58.1px;white-space:pre;font-family:'Liberation Sans', sans-serif;font-size:16.25px;line-height:20px;color:#e2c08d;font-weight:400;letter-spacing:-0.429px;">views.py</div>
<div style="position:absolute;left:686.00px;top:59.5px;white-space:pre;font-family:'Liberation Sans', sans-serif;font-size:13.75px;line-height:20px;color:#e2c08d;font-weight:400;letter-spacing:0.000px;">M</div>
<svg style="position:absolute;left:709px;top:64px;" width="14" height="13" viewBox="0 0 14 13"><path d="M1.5 1.5 L12.5 11.5 M12.5 1.5 L1.5 11.5" stroke="#e8e8e8" stroke-width="1.5"/></svg>
<svg style="position:absolute;left:751.7px;top:63.5px;" width="16" height="12" viewBox="0 0 16 12"><path d="M5.6 1.6 L1.8 5.5 L5.6 9.4 M9.8 1.6 L13.6 5.5 L9.8 9.4" fill="none" stroke="#e37933" stroke-width="1.9"/></svg>
<div style="position:absolute;left:774.00px;top:58.1px;white-space:pre;font-family:'Liberation Sans', sans-serif;font-size:16.25px;line-height:20px;color:#c2a77e;font-weight:400;letter-spacing:0.250px;">base.html</div>
<div style="position:absolute;left:852.00px;top:59.5px;white-space:pre;font-family:'Liberation Sans', sans-serif;font-size:13.75px;line-height:20px;color:#b89e76;font-weight:400;letter-spacing:0.000px;">M</div>
<svg style="position:absolute;left:919px;top:63px;" width="14" height="12" viewBox="0 0 14 12"><path d="M4.5 1 L3 11 M9.5 1 L8 11 M1 4 H13 M0.5 8 H12.5" stroke="#519aba" stroke-width="1.9"/></svg>
<div style="position:absolute;left:941.00px;top:58.1px;white-space:pre;font-family:'Liberation Sans', sans-serif;font-size:16.25px;line-height:20px;color:#c2a77e;font-weight:400;letter-spacing:-0.629px;">base.css</div>
<div style="position:absolute;left:1008.00px;top:59.5px;white-space:pre;font-family:'Liberation Sans', sans-serif;font-size:13.75px;line-height:20px;color:#b89e76;font-weight:400;letter-spacing:0.000px;">M</div>
<svg style="position:absolute;left:1787px;top:61.5px;" width="16" height="18" viewBox="0 0 16 18"><path d="M1.8 1.5 L14 9 L1.8 16.5 Z" fill="none" stroke="#c4c4c4" stroke-width="1.4" stroke-linejoin="miter"/></svg>
<svg style="position:absolute;left:1809px;top:65.5px;" width="12" height="8" viewBox="0 0 12 8"><path d="M1.5 1.5 L6 6 L10.5 1.5" fill="none" stroke="#b0b0b0" stroke-width="1.3"/></svg>
<svg style="position:absolute;left:1833px;top:60px;" width="22" height="22" viewBox="0 0 22 22"><circle cx="4.5" cy="4.5" r="2.4" fill="none" stroke="#c4c4c4" stroke-width="1.3"/><circle cx="16.5" cy="17" r="2.4" fill="none" stroke="#c4c4c4" stroke-width="1.3"/><path d="M4.5 7 V13 Q4.5 16 7.5 16 H13 M11 13.6 L13.4 16 L11 18.4" fill="none" stroke="#c4c4c4" stroke-width="1.3"/><path d="M16.5 14.5 V8 Q16.5 5 13.5 5 H8.5 M10.8 2.6 L8.4 5 L10.8 7.4" fill="none" stroke="#c4c4c4" stroke-width="1.3"/></svg>
<svg style="position:absolute;left:1867.5px;top:61px;" width="19" height="19" viewBox="0 0 19 19"><rect x="1.7" y="1.7" width="15.6" height="15.6" rx="2" fill="none" stroke="#c4c4c4" stroke-width="1.4"/><path d="M9.5 1.7 V17.3" stroke="#c4c4c4" stroke-width="1.4"/></svg>
<div style="position:absolute;left:1901.2px;top:69px;width:2.6px;height:2.6px;background:#c4c4c4;border-radius:1.3px"></div>
<div style="position:absolute;left:1907.7px;top:69px;width:2.6px;height:2.6px;background:#c4c4c4;border-radius:1.3px"></div>
<div style="position:absolute;left:1914.2px;top:69px;width:2.6px;height:2.6px;background:#c4c4c4;border-radius:1.3px"></div>
<div style="position:absolute;left:410.00px;top:93.6px;white-space:pre;font-family:'Liberation Sans', sans-serif;font-size:16.25px;line-height:20px;color:#a9a9a9;font-weight:400;letter-spacing:0.000px;">django</div>
<svg style="position:absolute;left:466px;top:100.7px;" width="8.4" height="10.6" viewBox="0 0 8.4 10.6"><path d="M1.65 1.65 L6.75 5.3 L1.65 8.95" fill="none" stroke="#a9a9a9" stroke-width="1.3"/></svg>
<div style="position:absolute;left:480.00px;top:93.6px;white-space:pre;font-family:'Liberation Sans', sans-serif;font-size:16.25px;line-height:20px;color:#a9a9a9;font-weight:400;letter-spacing:0.000px;">core</div>
<svg style="position:absolute;left:518px;top:100.7px;" width="8.4" height="10.6" viewBox="0 0 8.4 10.6"><path d="M1.65 1.65 L6.75 5.3 L1.65 8.95" fill="none" stroke="#a9a9a9" stroke-width="1.3"/></svg>
<svg style="position:absolute;left:536px;top:96.5px;" width="16" height="16" viewBox="0 0 16 16"><path d="M6.5 1 H9 Q11 1 11 3 V6 Q11 7.5 9.5 7.5 H5.5 Q4 7.5 4 9 V10.5 H2.5 Q1 10.5 1 9 V6 Q1 4.5 2.5 4.5 H7.5 V3.7 H4.2 V3 Q4.2 1 6.5 1 Z" fill="#519aba"/><path d="M8.5 14 H6 Q4 14 4 12 V9 Q4 7.5 5.5 7.5 H9.5 Q11 7.5 11 6 V4.5 H12.5 Q14 4.5 14 6 V9 Q14 10.5 12.5 10.5 H7.5 V11.3 H10.8 V12 Q10.8 14 8.5 14 Z" fill="#519aba"/><circle cx="6" cy="2.6" r="0.7" fill="#181818"/><circle cx="9" cy="12.4" r="0.7" fill="#181818"/></svg>
<div style="position:absolute;left:559.00px;top:93.6px;white-space:pre;font-family:'Liberation Sans', sans-serif;font-size:16.25px;line-height:20px;color:#a9a9a9;font-weight:400;letter-spacing:-0.143px;">views.py</div>
<svg style="position:absolute;left:627.5px;top:100.7px;" width="8.4" height="10.6" viewBox="0 0 8.4 10.6"><path d="M1.65 1.65 L6.75 5.3 L1.65 8.95" fill="none" stroke="#a9a9a9" stroke-width="1.3"/></svg>
<div style="position:absolute;left:643.5px;top:107.8px;width:2.2px;height:2.2px;background:#a9a9a9;"></div>
<div style="position:absolute;left:648.8px;top:107.8px;width:2.2px;height:2.2px;background:#a9a9a9;"></div>
<div style="position:absolute;left:654.1px;top:107.8px;width:2.2px;height:2.2px;background:#a9a9a9;"></div>
<div style="position:absolute;left:390px;top:119px;width:1418px;height:938px;overflow:hidden">
<div style="position:absolute;left:86.90px;top:45.25px;width:1px;height:237.50px;background:#404040"></div>
<div style="position:absolute;left:86.90px;top:330.25px;width:1px;height:237.50px;background:#404040"></div>
<div style="position:absolute;left:86.90px;top:615.25px;width:1px;height:237.50px;background:#404040"></div>
<div style="position:absolute;left:86.90px;top:900.25px;width:1px;height:213.75px;background:#404040"></div>
<div style="position:absolute;left:128.90px;top:69.00px;width:1px;height:71.25px;background:#404040"></div>
<div style="position:absolute;left:128.90px;top:211.50px;width:1px;height:47.50px;background:#404040"></div>
<div style="position:absolute;left:128.90px;top:354.00px;width:1px;height:71.25px;background:#404040"></div>
<div style="position:absolute;left:128.90px;top:496.50px;width:1px;height:47.50px;background:#404040"></div>
<div style="position:absolute;left:128.90px;top:639.00px;width:1px;height:71.25px;background:#404040"></div>
<div style="position:absolute;left:128.90px;top:781.50px;width:1px;height:47.50px;background:#404040"></div>
<div style="position:absolute;left:128.90px;top:924.00px;width:1px;height:190.00px;background:#404040"></div>
<div style="position:absolute;left:0px;top:-2.25px;width:55px;height:23.75px;text-align:right;font-family:'Liberation Mono', monospace;font-size:18px;letter-spacing:-0.3px;line-height:23.75px;color:#6e7681">34</div>
<div style="position:absolute;left:87.50px;top:-2.25px;white-space:pre;font-family:'Liberation Mono', monospace;font-size:18px;letter-spacing:-0.265px;line-height:23.75px;-webkit-text-stroke:0.2px currentColor;color:#d4d4d4"></div>
<div style="position:absolute;left:0px;top:21.50px;width:55px;height:23.75px;text-align:right;font-family:'Liberation Mono', monospace;font-size:18px;letter-spacing:-0.3px;line-height:23.75px;color:#6e7681">35</div>
<div style="position:absolute;left:87.50px;top:21.50px;white-space:pre;font-family:'Liberation Mono', monospace;font-size:18px;letter-spacing:-0.265px;line-height:23.75px;-webkit-text-stroke:0.2px currentColor;color:#d4d4d4"><span style="color:#569cd6">def</span> <span style="color:#dcdcaa">jdoyen_io</span><span style="color:#ffd700">(</span><span style="color:#9cdcfe">request</span><span style="color:#ffd700">)</span><span style="color:#d4d4d4">:</span></div>
<div style="position:absolute;left:0px;top:45.25px;width:55px;height:23.75px;text-align:right;font-family:'Liberation Mono', monospace;font-size:18px;letter-spacing:-0.3px;line-height:23.75px;color:#6e7681">36</div>
<div style="position:absolute;left:87.50px;top:45.25px;white-space:pre;font-family:'Liberation Mono', monospace;font-size:18px;letter-spacing:-0.265px;line-height:23.75px;-webkit-text-stroke:0.2px currentColor;color:#d4d4d4">    <span style="color:#9cdcfe">jdoyen_io_images</span> <span style="color:#d4d4d4">=</span> <span style="color:#ffd700">[</span></div>
<div style="position:absolute;left:0px;top:69.00px;width:55px;height:23.75px;text-align:right;font-family:'Liberation Mono', monospace;font-size:18px;letter-spacing:-0.3px;line-height:23.75px;color:#6e7681">37</div>
<div style="position:absolute;left:87.50px;top:69.00px;white-space:pre;font-family:'Liberation Mono', monospace;font-size:18px;letter-spacing:-0.265px;line-height:23.75px;-webkit-text-stroke:0.2px currentColor;color:#d4d4d4">        <span style="color:#ce9178">&#x27;core/images/jdoyen_io.png&#x27;</span><span style="color:#d4d4d4">,</span></div>
<div style="position:absolute;left:0px;top:92.75px;width:55px;height:23.75px;text-align:right;font-family:'Liberation Mono', monospace;font-size:18px;letter-spacing:-0.3px;line-height:23.75px;color:#6e7681">38</div>
<div style="position:absolute;left:87.50px;top:92.75px;white-space:pre;font-family:'Liberation Mono', monospace;font-size:18px;letter-spacing:-0.265px;line-height:23.75px;-webkit-text-stroke:0.2px currentColor;color:#d4d4d4">        <span style="color:#ce9178">&#x27;core/images/jdoyen_io_dev.png&#x27;</span><span style="color:#d4d4d4">,</span></div>
<div style="position:absolute;left:0px;top:116.50px;width:55px;height:23.75px;text-align:right;font-family:'Liberation Mono', monospace;font-size:18px;letter-spacing:-0.3px;line-height:23.75px;color:#6e7681">39</div>
<div style="position:absolute;left:87.50px;top:116.50px;white-space:pre;font-family:'Liberation Mono', monospace;font-size:18px;letter-spacing:-0.265px;line-height:23.75px;-webkit-text-stroke:0.2px currentColor;color:#d4d4d4">        <span style="color:#ce9178">&#x27;core/images/jdoyen_io_repo.png&#x27;</span><span style="color:#d4d4d4">,</span></div>
<div style="position:absolute;left:0px;top:140.25px;width:55px;height:23.75px;text-align:right;font-family:'Liberation Mono', monospace;font-size:18px;letter-spacing:-0.3px;line-height:23.75px;color:#6e7681">40</div>
<div style="position:absolute;left:87.50px;top:140.25px;white-space:pre;font-family:'Liberation Mono', monospace;font-size:18px;letter-spacing:-0.265px;line-height:23.75px;-webkit-text-stroke:0.2px currentColor;color:#d4d4d4">    <span style="color:#ffd700">]</span></div>
<div style="position:absolute;left:0px;top:164.00px;width:55px;height:23.75px;text-align:right;font-family:'Liberation Mono', monospace;font-size:18px;letter-spacing:-0.3px;line-height:23.75px;color:#6e7681">41</div>
<div style="position:absolute;left:87.50px;top:164.00px;white-space:pre;font-family:'Liberation Mono', monospace;font-size:18px;letter-spacing:-0.265px;line-height:23.75px;-webkit-text-stroke:0.2px currentColor;color:#d4d4d4"></div>
<div style="position:absolute;left:0px;top:187.75px;width:55px;height:23.75px;text-align:right;font-family:'Liberation Mono', monospace;font-size:18px;letter-spacing:-0.3px;line-height:23.75px;color:#6e7681">42</div>
<div style="position:absolute;left:87.50px;top:187.75px;white-space:pre;font-family:'Liberation Mono', monospace;font-size:18px;letter-spacing:-0.265px;line-height:23.75px;-webkit-text-stroke:0.2px currentColor;color:#d4d4d4">    <span style="color:#c586c0">return</span> <span style="color:#dcdcaa">render</span><span style="color:#ffd700">(</span><span style="color:#9cdcfe">request</span><span style="color:#d4d4d4">,</span> <span style="color:#ce9178">&#x27;core/pages/jdoyen_io.html&#x27;</span><span style="color:#d4d4d4">,</span> <span style="color:#da70d6">{</span></div>
<div style="position:absolute;left:0px;top:211.50px;width:55px;height:23.75px;text-align:right;font-family:'Liberation Mono', monospace;font-size:18px;letter-spacing:-0.3px;line-height:23.75px;color:#6e7681">43</div>
<div style="position:absolute;left:87.50px;top:211.50px;white-space:pre;font-family:'Liberation Mono', monospace;font-size:18px;letter-spacing:-0.265px;line-height:23.75px;-webkit-text-stroke:0.2px currentColor;color:#d4d4d4">        <span style="color:#ce9178">&#x27;active_page&#x27;</span><span style="color:#d4d4d4">:</span> <span style="color:#ce9178">&#x27;jdoyen_io&#x27;</span><span style="color:#d4d4d4">,</span></div>
<div style="position:absolute;left:0px;top:235.25px;width:55px;height:23.75px;text-align:right;font-family:'Liberation Mono', monospace;font-size:18px;letter-spacing:-0.3px;line-height:23.75px;color:#6e7681">44</div>
<div style="position:absolute;left:87.50px;top:235.25px;white-space:pre;font-family:'Liberation Mono', monospace;font-size:18px;letter-spacing:-0.265px;line-height:23.75px;-webkit-text-stroke:0.2px currentColor;color:#d4d4d4">        <span style="color:#ce9178">&#x27;jdoyen_io_images&#x27;</span><span style="color:#d4d4d4">:</span> <span style="color:#9cdcfe">jdoyen_io_images</span><span style="color:#d4d4d4">,</span></div>
<div style="position:absolute;left:0px;top:259.00px;width:55px;height:23.75px;text-align:right;font-family:'Liberation Mono', monospace;font-size:18px;letter-spacing:-0.3px;line-height:23.75px;color:#6e7681">45</div>
<div style="position:absolute;left:87.50px;top:259.00px;white-space:pre;font-family:'Liberation Mono', monospace;font-size:18px;letter-spacing:-0.265px;line-height:23.75px;-webkit-text-stroke:0.2px currentColor;color:#d4d4d4">    <span style="color:#da70d6">}</span><span style="color:#ffd700">)</span></div>
<div style="position:absolute;left:0px;top:282.75px;width:55px;height:23.75px;text-align:right;font-family:'Liberation Mono', monospace;font-size:18px;letter-spacing:-0.3px;line-height:23.75px;color:#6e7681">46</div>
<div style="position:absolute;left:87.50px;top:282.75px;white-space:pre;font-family:'Liberation Mono', monospace;font-size:18px;letter-spacing:-0.265px;line-height:23.75px;-webkit-text-stroke:0.2px currentColor;color:#d4d4d4"></div>
<div style="position:absolute;left:0px;top:306.50px;width:55px;height:23.75px;text-align:right;font-family:'Liberation Mono', monospace;font-size:18px;letter-spacing:-0.3px;line-height:23.75px;color:#6e7681">47</div>
<div style="position:absolute;left:87.50px;top:306.50px;white-space:pre;font-family:'Liberation Mono', monospace;font-size:18px;letter-spacing:-0.265px;line-height:23.75px;-webkit-text-stroke:0.2px currentColor;color:#d4d4d4"><span style="color:#569cd6">def</span> <span style="color:#dcdcaa">comp_prog</span><span style="color:#ffd700">(</span><span style="color:#9cdcfe">request</span><span style="color:#ffd700">)</span><span style="color:#d4d4d4">:</span></div>
<div style="position:absolute;left:0px;top:330.25px;width:55px;height:23.75px;text-align:right;font-family:'Liberation Mono', monospace;font-size:18px;letter-spacing:-0.3px;line-height:23.75px;color:#6e7681">48</div>
<div style="position:absolute;left:87.50px;top:330.25px;white-space:pre;font-family:'Liberation Mono', monospace;font-size:18px;letter-spacing:-0.265px;line-height:23.75px;-webkit-text-stroke:0.2px currentColor;color:#d4d4d4">    <span style="color:#9cdcfe">comp_prog_images</span> <span style="color:#d4d4d4">=</span> <span style="color:#ffd700">[</span></div>
<div style="position:absolute;left:0px;top:354.00px;width:55px;height:23.75px;text-align:right;font-family:'Liberation Mono', monospace;font-size:18px;letter-spacing:-0.3px;line-height:23.75px;color:#6e7681">49</div>
<div style="position:absolute;left:87.50px;top:354.00px;white-space:pre;font-family:'Liberation Mono', monospace;font-size:18px;letter-spacing:-0.265px;line-height:23.75px;-webkit-text-stroke:0.2px currentColor;color:#d4d4d4">        <span style="color:#ce9178">&#x27;core/images/comp_prog_1.png&#x27;</span><span style="color:#d4d4d4">,</span></div>
<div style="position:absolute;left:0px;top:377.75px;width:55px;height:23.75px;text-align:right;font-family:'Liberation Mono', monospace;font-size:18px;letter-spacing:-0.3px;line-height:23.75px;color:#6e7681">50</div>
<div style="position:absolute;left:87.50px;top:377.75px;white-space:pre;font-family:'Liberation Mono', monospace;font-size:18px;letter-spacing:-0.265px;line-height:23.75px;-webkit-text-stroke:0.2px currentColor;color:#d4d4d4">        <span style="color:#ce9178">&#x27;core/images/comp_prog_2.png&#x27;</span><span style="color:#d4d4d4">,</span></div>
<div style="position:absolute;left:0px;top:401.50px;width:55px;height:23.75px;text-align:right;font-family:'Liberation Mono', monospace;font-size:18px;letter-spacing:-0.3px;line-height:23.75px;color:#6e7681">51</div>
<div style="position:absolute;left:87.50px;top:401.50px;white-space:pre;font-family:'Liberation Mono', monospace;font-size:18px;letter-spacing:-0.265px;line-height:23.75px;-webkit-text-stroke:0.2px currentColor;color:#d4d4d4">        <span style="color:#ce9178">&#x27;core/images/comp_prog_3.png&#x27;</span><span style="color:#d4d4d4">,</span></div>
<div style="position:absolute;left:0px;top:425.25px;width:55px;height:23.75px;text-align:right;font-family:'Liberation Mono', monospace;font-size:18px;letter-spacing:-0.3px;line-height:23.75px;color:#6e7681">52</div>
<div style="position:absolute;left:87.50px;top:425.25px;white-space:pre;font-family:'Liberation Mono', monospace;font-size:18px;letter-spacing:-0.265px;line-height:23.75px;-webkit-text-stroke:0.2px currentColor;color:#d4d4d4">    <span style="color:#ffd700">]</span></div>
<div style="position:absolute;left:0px;top:449.00px;width:55px;height:23.75px;text-align:right;font-family:'Liberation Mono', monospace;font-size:18px;letter-spacing:-0.3px;line-height:23.75px;color:#6e7681">53</div>
<div style="position:absolute;left:87.50px;top:449.00px;white-space:pre;font-family:'Liberation Mono', monospace;font-size:18px;letter-spacing:-0.265px;line-height:23.75px;-webkit-text-stroke:0.2px currentColor;color:#d4d4d4"></div>
<div style="position:absolute;left:0px;top:472.75px;width:55px;height:23.75px;text-align:right;font-family:'Liberation Mono', monospace;font-size:18px;letter-spacing:-0.3px;line-height:23.75px;color:#6e7681">54</div>
<div style="position:absolute;left:87.50px;top:472.75px;white-space:pre;font-family:'Liberation Mono', monospace;font-size:18px;letter-spacing:-0.265px;line-height:23.75px;-webkit-text-stroke:0.2px currentColor;color:#d4d4d4">    <span style="color:#c586c0">return</span> <span style="color:#dcdcaa">render</span><span style="color:#ffd700">(</span><span style="color:#9cdcfe">request</span><span style="color:#d4d4d4">,</span> <span style="color:#ce9178">&#x27;core/pages/comp_prog.html&#x27;</span><span style="color:#d4d4d4">,</span> <span style="color:#da70d6">{</span></div>
<div style="position:absolute;left:0px;top:496.50px;width:55px;height:23.75px;text-align:right;font-family:'Liberation Mono', monospace;font-size:18px;letter-spacing:-0.3px;line-height:23.75px;color:#6e7681">55</div>
<div style="position:absolute;left:87.50px;top:496.50px;white-space:pre;font-family:'Liberation Mono', monospace;font-size:18px;letter-spacing:-0.265px;line-height:23.75px;-webkit-text-stroke:0.2px currentColor;color:#d4d4d4">        <span style="color:#ce9178">&#x27;active_page&#x27;</span><span style="color:#d4d4d4">:</span> <span style="color:#ce9178">&#x27;comp_prog&#x27;</span><span style="color:#d4d4d4">,</span></div>
<div style="position:absolute;left:0px;top:520.25px;width:55px;height:23.75px;text-align:right;font-family:'Liberation Mono', monospace;font-size:18px;letter-spacing:-0.3px;line-height:23.75px;color:#6e7681">56</div>
<div style="position:absolute;left:87.50px;top:520.25px;white-space:pre;font-family:'Liberation Mono', monospace;font-size:18px;letter-spacing:-0.265px;line-height:23.75px;-webkit-text-stroke:0.2px currentColor;color:#d4d4d4">        <span style="color:#ce9178">&#x27;comp_prog_images&#x27;</span><span style="color:#d4d4d4">:</span> <span style="color:#9cdcfe">comp_prog_images</span><span style="color:#d4d4d4">,</span></div>
<div style="position:absolute;left:0px;top:544.00px;width:55px;height:23.75px;text-align:right;font-family:'Liberation Mono', monospace;font-size:18px;letter-spacing:-0.3px;line-height:23.75px;color:#6e7681">57</div>
<div style="position:absolute;left:87.50px;top:544.00px;white-space:pre;font-family:'Liberation Mono', monospace;font-size:18px;letter-spacing:-0.265px;line-height:23.75px;-webkit-text-stroke:0.2px currentColor;color:#d4d4d4">    <span style="color:#da70d6">}</span><span style="color:#ffd700">)</span></div>
<div style="position:absolute;left:0px;top:567.75px;width:55px;height:23.75px;text-align:right;font-family:'Liberation Mono', monospace;font-size:18px;letter-spacing:-0.3px;line-height:23.75px;color:#6e7681">58</div>
<div style="position:absolute;left:87.50px;top:567.75px;white-space:pre;font-family:'Liberation Mono', monospace;font-size:18px;letter-spacing:-0.265px;line-height:23.75px;-webkit-text-stroke:0.2px currentColor;color:#d4d4d4"></div>
<div style="position:absolute;left:0px;top:591.50px;width:55px;height:23.75px;text-align:right;font-family:'Liberation Mono', monospace;font-size:18px;letter-spacing:-0.3px;line-height:23.75px;color:#6e7681">59</div>
<div style="position:absolute;left:87.50px;top:591.50px;white-space:pre;font-family:'Liberation Mono', monospace;font-size:18px;letter-spacing:-0.265px;line-height:23.75px;-webkit-text-stroke:0.2px currentColor;color:#d4d4d4"><span style="color:#569cd6">def</span> <span style="color:#dcdcaa">pagependium</span><span style="color:#ffd700">(</span><span style="color:#9cdcfe">request</span><span style="color:#ffd700">)</span><span style="color:#d4d4d4">:</span></div>
<div style="position:absolute;left:0px;top:615.25px;width:55px;height:23.75px;text-align:right;font-family:'Liberation Mono', monospace;font-size:18px;letter-spacing:-0.3px;line-height:23.75px;color:#6e7681">60</div>
<div style="position:absolute;left:87.50px;top:615.25px;white-space:pre;font-family:'Liberation Mono', monospace;font-size:18px;letter-spacing:-0.265px;line-height:23.75px;-webkit-text-stroke:0.2px currentColor;color:#d4d4d4">    <span style="color:#9cdcfe">pagependium_images</span> <span style="color:#d4d4d4">=</span> <span style="color:#ffd700">[</span></div>
<div style="position:absolute;left:0px;top:639.00px;width:55px;height:23.75px;text-align:right;font-family:'Liberation Mono', monospace;font-size:18px;letter-spacing:-0.3px;line-height:23.75px;color:#6e7681">61</div>
<div style="position:absolute;left:87.50px;top:639.00px;white-space:pre;font-family:'Liberation Mono', monospace;font-size:18px;letter-spacing:-0.265px;line-height:23.75px;-webkit-text-stroke:0.2px currentColor;color:#d4d4d4">        <span style="color:#ce9178">&#x27;core/images/paper_packet.png&#x27;</span><span style="color:#d4d4d4">,</span></div>
<div style="position:absolute;left:0px;top:662.75px;width:55px;height:23.75px;text-align:right;font-family:'Liberation Mono', monospace;font-size:18px;letter-spacing:-0.3px;line-height:23.75px;color:#6e7681">62</div>
<div style="position:absolute;left:87.50px;top:662.75px;white-space:pre;font-family:'Liberation Mono', monospace;font-size:18px;letter-spacing:-0.265px;line-height:23.75px;-webkit-text-stroke:0.2px currentColor;color:#d4d4d4">        <span style="color:#ce9178">&#x27;core/images/pagependium_snippet_1.png&#x27;</span><span style="color:#d4d4d4">,</span></div>
<div style="position:absolute;left:0px;top:686.50px;width:55px;height:23.75px;text-align:right;font-family:'Liberation Mono', monospace;font-size:18px;letter-spacing:-0.3px;line-height:23.75px;color:#6e7681">63</div>
<div style="position:absolute;left:87.50px;top:686.50px;white-space:pre;font-family:'Liberation Mono', monospace;font-size:18px;letter-spacing:-0.265px;line-height:23.75px;-webkit-text-stroke:0.2px currentColor;color:#d4d4d4">        <span style="color:#ce9178">&#x27;core/images/pagependium_snippet_2.png&#x27;</span><span style="color:#d4d4d4">,</span></div>
<div style="position:absolute;left:0px;top:710.25px;width:55px;height:23.75px;text-align:right;font-family:'Liberation Mono', monospace;font-size:18px;letter-spacing:-0.3px;line-height:23.75px;color:#6e7681">64</div>
<div style="position:absolute;left:87.50px;top:710.25px;white-space:pre;font-family:'Liberation Mono', monospace;font-size:18px;letter-spacing:-0.265px;line-height:23.75px;-webkit-text-stroke:0.2px currentColor;color:#d4d4d4">    <span style="color:#ffd700">]</span></div>
<div style="position:absolute;left:0px;top:734.00px;width:55px;height:23.75px;text-align:right;font-family:'Liberation Mono', monospace;font-size:18px;letter-spacing:-0.3px;line-height:23.75px;color:#6e7681">65</div>
<div style="position:absolute;left:87.50px;top:734.00px;white-space:pre;font-family:'Liberation Mono', monospace;font-size:18px;letter-spacing:-0.265px;line-height:23.75px;-webkit-text-stroke:0.2px currentColor;color:#d4d4d4"></div>
<div style="position:absolute;left:0px;top:757.75px;width:55px;height:23.75px;text-align:right;font-family:'Liberation Mono', monospace;font-size:18px;letter-spacing:-0.3px;line-height:23.75px;color:#6e7681">66</div>
<div style="position:absolute;left:87.50px;top:757.75px;white-space:pre;font-family:'Liberation Mono', monospace;font-size:18px;letter-spacing:-0.265px;line-height:23.75px;-webkit-text-stroke:0.2px currentColor;color:#d4d4d4">    <span style="color:#c586c0">return</span> <span style="color:#dcdcaa">render</span><span style="color:#ffd700">(</span><span style="color:#9cdcfe">request</span><span style="color:#d4d4d4">,</span> <span style="color:#ce9178">&#x27;core/pages/pagependium.html&#x27;</span><span style="color:#d4d4d4">,</span> <span style="color:#da70d6">{</span></div>
<div style="position:absolute;left:0px;top:781.50px;width:55px;height:23.75px;text-align:right;font-family:'Liberation Mono', monospace;font-size:18px;letter-spacing:-0.3px;line-height:23.75px;color:#6e7681">67</div>
<div style="position:absolute;left:87.50px;top:781.50px;white-space:pre;font-family:'Liberation Mono', monospace;font-size:18px;letter-spacing:-0.265px;line-height:23.75px;-webkit-text-stroke:0.2px currentColor;color:#d4d4d4">        <span style="color:#ce9178">&#x27;active_page&#x27;</span><span style="color:#d4d4d4">:</span> <span style="color:#ce9178">&#x27;pagependium&#x27;</span><span style="color:#d4d4d4">,</span></div>
<div style="position:absolute;left:0px;top:805.25px;width:55px;height:23.75px;text-align:right;font-family:'Liberation Mono', monospace;font-size:18px;letter-spacing:-0.3px;line-height:23.75px;color:#6e7681">68</div>
<div style="position:absolute;left:87.50px;top:805.25px;white-space:pre;font-family:'Liberation Mono', monospace;font-size:18px;letter-spacing:-0.265px;line-height:23.75px;-webkit-text-stroke:0.2px currentColor;color:#d4d4d4">        <span style="color:#ce9178">&#x27;pagependium_images&#x27;</span><span style="color:#d4d4d4">:</span> <span style="color:#9cdcfe">pagependium_images</span><span style="color:#d4d4d4">,</span></div>
<div style="position:absolute;left:0px;top:829.00px;width:55px;height:23.75px;text-align:right;font-family:'Liberation Mono', monospace;font-size:18px;letter-spacing:-0.3px;line-height:23.75px;color:#6e7681">69</div>
<div style="position:absolute;left:87.50px;top:829.00px;white-space:pre;font-family:'Liberation Mono', monospace;font-size:18px;letter-spacing:-0.265px;line-height:23.75px;-webkit-text-stroke:0.2px currentColor;color:#d4d4d4">    <span style="color:#da70d6">}</span><span style="color:#ffd700">)</span></div>
<div style="position:absolute;left:0px;top:852.75px;width:55px;height:23.75px;text-align:right;font-family:'Liberation Mono', monospace;font-size:18px;letter-spacing:-0.3px;line-height:23.75px;color:#6e7681">70</div>
<div style="position:absolute;left:87.50px;top:852.75px;white-space:pre;font-family:'Liberation Mono', monospace;font-size:18px;letter-spacing:-0.265px;line-height:23.75px;-webkit-text-stroke:0.2px currentColor;color:#d4d4d4"></div>
<div style="position:absolute;left:0px;top:876.50px;width:55px;height:23.75px;text-align:right;font-family:'Liberation Mono', monospace;font-size:18px;letter-spacing:-0.3px;line-height:23.75px;color:#6e7681">71</div>
<div style="position:absolute;left:87.50px;top:876.50px;white-space:pre;font-family:'Liberation Mono', monospace;font-size:18px;letter-spacing:-0.265px;line-height:23.75px;-webkit-text-stroke:0.2px currentColor;color:#d4d4d4"><span style="color:#569cd6">def</span> <span style="color:#dcdcaa">sis_custom_pages</span><span style="color:#ffd700">(</span><span style="color:#9cdcfe">request</span><span style="color:#ffd700">)</span><span style="color:#d4d4d4">:</span></div>
<div style="position:absolute;left:0px;top:900.25px;width:55px;height:23.75px;text-align:right;font-family:'Liberation Mono', monospace;font-size:18px;letter-spacing:-0.3px;line-height:23.75px;color:#6e7681">72</div>
<div style="position:absolute;left:87.50px;top:900.25px;white-space:pre;font-family:'Liberation Mono', monospace;font-size:18px;letter-spacing:-0.265px;line-height:23.75px;-webkit-text-stroke:0.2px currentColor;color:#d4d4d4">    <span style="color:#9cdcfe">sis_custom_pages_images</span> <span style="color:#d4d4d4">=</span> <span style="color:#ffd700">[</span></div>
<div style="position:absolute;left:0px;top:924.00px;width:55px;height:23.75px;text-align:right;font-family:'Liberation Mono', monospace;font-size:18px;letter-spacing:-0.3px;line-height:23.75px;color:#6e7681">73</div>
<div style="position:absolute;left:87.50px;top:924.00px;white-space:pre;font-family:'Liberation Mono', monospace;font-size:18px;letter-spacing:-0.265px;line-height:23.75px;-webkit-text-stroke:0.2px currentColor;color:#d4d4d4">        <span style="color:#ce9178">&#x27;core/images/sis_dev.png&#x27;</span><span style="color:#d4d4d4">,</span></div>
</div>
<div style="position:absolute;left:390px;top:119px;width:1418px;height:3px;background:linear-gradient(#0f0f0f,rgba(31,31,31,0));"></div>
<svg style="position:absolute;left:1808.5px;top:119px;" width="110" height="306" viewBox="0 0 110 306"><g opacity="0.38"><rect x="0" y="0.2" width="4" height="1.6" fill="#c586c0" fill-opacity="1.0"/><rect x="5" y="0.2" width="6" height="1.6" fill="#4ec9b0" fill-opacity="1.0"/><rect x="11" y="0.2" width="1" height="1.6" fill="#4ec9b0" fill-opacity="0.5"/><rect x="12" y="0.2" width="9" height="1.6" fill="#4ec9b0" fill-opacity="1.0"/><rect x="22" y="0.2" width="6" height="1.6" fill="#4ec9b0" fill-opacity="1.0"/><rect x="29" y="0.2" width="6" height="1.6" fill="#4ec9b0" fill-opacity="1.0"/><rect x="35" y="0.2" width="1" height="1.6" fill="#4ec9b0" fill-opacity="0.5"/><rect x="37" y="0.2" width="8" height="1.6" fill="#4ec9b0" fill-opacity="1.0"/><rect x="0" y="2.2" width="4" height="1.6" fill="#c586c0" fill-opacity="1.0"/><rect x="5" y="2.2" width="6" height="1.6" fill="#4ec9b0" fill-opacity="1.0"/><rect x="11" y="2.2" width="1" height="1.6" fill="#4ec9b0" fill-opacity="0.5"/><rect x="12" y="2.2" width="7" height="1.6" fill="#4ec9b0" fill-opacity="1.0"/><rect x="19" y="2.2" width="1" height="1.6" fill="#4ec9b0" fill-opacity="0.5"/><rect x="20" y="2.2" width="4" height="1.6" fill="#4ec9b0" fill-opacity="1.0"/><rect x="25" y="2.2" width="6" height="1.6" fill="#4ec9b0" fill-opacity="1.0"/><rect x="32" y="2.2" width="5" height="1.6" fill="#4ec9b0" fill-opacity="1.0"/><rect x="37" y="2.2" width="1" height="1.6" fill="#4ec9b0" fill-opacity="0.5"/><rect x="39" y="2.2" width="6" height="1.6" fill="#4ec9b0" fill-opacity="1.0"/><rect x="0" y="4.2" width="4" height="1.6" fill="#c586c0" fill-opacity="1.0"/><rect x="5" y="4.2" width="1" height="1.6" fill="#4ec9b0" fill-opacity="0.5"/><rect x="6" y="4.2" width="5" height="1.6" fill="#4ec9b0" fill-opacity="1.0"/><rect x="12" y="4.2" width="6" height="1.6" fill="#4ec9b0" fill-opacity="1.0"/><rect x="19" y="4.2" width="10" height="1.6" fill="#4ec9b0" fill-opacity="1.0"/><rect x="29" y="4.2" width="1" height="1.6" fill="#4ec9b0" fill-opacity="0.5"/><rect x="31" y="4.2" width="10" height="1.6" fill="#4ec9b0" fill-opacity="1.0"/><rect x="0" y="8.2" width="3" height="1.6" fill="#569cd6" fill-opacity="1.0"/><rect x="4" y="8.2" width="4" height="1.6" fill="#dcdcaa" fill-opacity="1.0"/><rect x="8" y="8.2" width="1" height="1.6" fill="#ffd700" fill-opacity="0.5"/><rect x="9" y="8.2" width="7" height="1.6" fill="#9cdcfe" fill-opacity="1.0"/><rect x="16" y="8.2" width="1" height="1.6" fill="#ffd700" fill-opacity="0.5"/><rect x="17" y="8.2" width="1" height="1.6" fill="#d4d4d4" fill-opacity="0.5"/><rect x="4" y="10.2" width="6" height="1.6" fill="#c586c0" fill-opacity="1.0"/><rect x="11" y="10.2" width="6" height="1.6" fill="#dcdcaa" fill-opacity="1.0"/><rect x="17" y="10.2" width="1" height="1.6" fill="#ffd700" fill-opacity="0.5"/><rect x="18" y="10.2" width="7" height="1.6" fill="#9cdcfe" fill-opacity="1.0"/><rect x="25" y="10.2" width="1" height="1.6" fill="#d4d4d4" fill-opacity="0.5"/><rect x="27" y="10.2" width="1" height="1.6" fill="#ce9178" fill-opacity="0.5"/><rect x="28" y="10.2" width="4" height="1.6" fill="#ce9178" fill-opacity="1.0"/><rect x="32" y="10.2" width="1" height="1.6" fill="#ce9178" fill-opacity="0.5"/><rect x="33" y="10.2" width="5" height="1.6" fill="#ce9178" fill-opacity="1.0"/><rect x="38" y="10.2" width="1" height="1.6" fill="#ce9178" fill-opacity="0.5"/><rect x="39" y="10.2" width="4" height="1.6" fill="#ce9178" fill-opacity="1.0"/><rect x="43" y="10.2" width="1" height="1.6" fill="#ce9178" fill-opacity="0.5"/><rect x="44" y="10.2" width="4" height="1.6" fill="#ce9178" fill-opacity="1.0"/><rect x="48" y="10.2" width="1" height="1.6" fill="#ce9178" fill-opacity="0.5"/><rect x="49" y="10.2" width="1" height="1.6" fill="#d4d4d4" fill-opacity="0.5"/><rect x="51" y="10.2" width="1" height="1.6" fill="#da70d6" fill-opacity="0.5"/><rect x="8" y="12.2" width="1" height="1.6" fill="#ce9178" fill-opacity="0.5"/><rect x="9" y="12.2" width="6" height="1.6" fill="#ce9178" fill-opacity="1.0"/><rect x="15" y="12.2" width="1" height="1.6" fill="#ce9178" fill-opacity="0.5"/><rect x="16" y="12.2" width="4" height="1.6" fill="#ce9178" fill-opacity="1.0"/><rect x="20" y="12.2" width="1" height="1.6" fill="#ce9178" fill-opacity="0.5"/><rect x="21" y="12.2" width="1" height="1.6" fill="#d4d4d4" fill-opacity="0.5"/><rect x="23" y="12.2" width="1" height="1.6" fill="#ce9178" fill-opacity="0.5"/><rect x="24" y="12.2" width="4" height="1.6" fill="#ce9178" fill-opacity="1.0"/><rect x="28" y="12.2" width="1" height="1.6" fill="#ce9178" fill-opacity="0.5"/><rect x="4" y="14.2" width="1" height="1.6" fill="#179fff" fill-opacity="0.5"/><rect x="5" y="14.2" width="1" height="1.6" fill="#da70d6" fill-opacity="0.5"/><rect x="0" y="18.2" width="3" height="1.6" fill="#569cd6" fill-opacity="1.0"/><rect x="4" y="18.2" width="5" height="1.6" fill="#dcdcaa" fill-opacity="1.0"/><rect x="9" y="18.2" width="1" height="1.6" fill="#ffd700" fill-opacity="0.5"/><rect x="10" y="18.2" width="7" height="1.6" fill="#9cdcfe" fill-opacity="1.0"/><rect x="17" y="18.2" width="1" height="1.6" fill="#ffd700" fill-opacity="0.5"/><rect x="18" y="18.2" width="1" height="1.6" fill="#d4d4d4" fill-opacity="0.5"/><rect x="4" y="20.2" width="6" height="1.6" fill="#c586c0" fill-opacity="1.0"/><rect x="11" y="20.2" width="6" height="1.6" fill="#dcdcaa" fill-opacity="1.0"/><rect x="17" y="20.2" width="1" height="1.6" fill="#ffd700" fill-opacity="0.5"/><rect x="18" y="20.2" width="7" height="1.6" fill="#9cdcfe" fill-opacity="1.0"/><rect x="25" y="20.2" width="1" height="1.6" fill="#d4d4d4" fill-opacity="0.5"/><rect x="27" y="20.2" width="1" height="1.6" fill="#ce9178" fill-opacity="0.5"/><rect x="28" y="20.2" width="4" height="1.6" fill="#ce9178" fill-opacity="1.0"/><rect x="32" y="20.2" width="1" height="1.6" fill="#ce9178" fill-opacity="0.5"/><rect x="33" y="20.2" width="5" height="1.6" fill="#ce9178" fill-opacity="1.0"/><rect x="38" y="20.2" width="1" height="1.6" fill="#ce9178" fill-opacity="0.5"/><rect x="39" y="20.2" width="5" height="1.6" fill="#ce9178" fill-opacity="1.0"/><rect x="44" y="20.2" width="1" height="1.6" fill="#ce9178" fill-opacity="0.5"/><rect x="45" y="20.2" width="4" height="1.6" fill="#ce9178" fill-opacity="1.0"/><rect x="49" y="20.2" width="1" height="1.6" fill="#ce9178" fill-opacity="0.5"/><rect x="50" y="20.2" width="1" height="1.6" fill="#d4d4d4" fill-opacity="0.5"/><rect x="52" y="20.2" width="1" height="1.6" fill="#da70d6" fill-opacity="0.5"/><rect x="8" y="22.2" width="1" height="1.6" fill="#ce9178" fill-opacity="0.5"/><rect x="9" y="22.2" width="6" height="1.6" fill="#ce9178" fill-opacity="1.0"/><rect x="15" y="22.2" width="1" height="1.6" fill="#ce9178" fill-opacity="0.5"/><rect x="16" y="22.2" width="4" height="1.6" fill="#ce9178" fill-opacity="1.0"/><rect x="20" y="22.2" width="1" height="1.6" fill="#ce9178" fill-opacity="0.5"/><rect x="21" y="22.2" width="1" height="1.6" fill="#d4d4d4" fill-opacity="0.5"/><rect x="23" y="22.2" width="1" height="1.6" fill="#ce9178" fill-opacity="0.5"/><rect x="24" y="22.2" width="5" height="1.6" fill="#ce9178" fill-opacity="1.0"/><rect x="29" y="22.2" width="1" height="1.6" fill="#ce9178" fill-opacity="0.5"/><rect x="4" y="24.2" width="1" height="1.6" fill="#179fff" fill-opacity="0.5"/><rect x="5" y="24.2" width="1" height="1.6" fill="#da70d6" fill-opacity="0.5"/><rect x="0" y="28.2" width="3" height="1.6" fill="#569cd6" fill-opacity="1.0"/><rect x="4" y="28.2" width="8" height="1.6" fill="#dcdcaa" fill-opacity="1.0"/><rect x="12" y="28.2" width="1" height="1.6" fill="#ffd700" fill-opacity="0.5"/><rect x="13" y="28.2" width="7" height="1.6" fill="#9cdcfe" fill-opacity="1.0"/><rect x="20" y="28.2" width="1" height="1.6" fill="#ffd700" fill-opacity="0.5"/><rect x="21" y="28.2" width="1" height="1.6" fill="#d4d4d4" fill-opacity="0.5"/><rect x="4" y="30.2" width="6" height="1.6" fill="#c586c0" fill-opacity="1.0"/><rect x="11" y="30.2" width="6" height="1.6" fill="#dcdcaa" fill-opacity="1.0"/><rect x="17" y="30.2" width="1" height="1.6" fill="#ffd700" fill-opacity="0.5"/><rect x="18" y="30.2" width="7" height="1.6" fill="#9cdcfe" fill-opacity="1.0"/><rect x="25" y="30.2" width="1" height="1.6" fill="#d4d4d4" fill-opacity="0.5"/><rect x="27" y="30.2" width="1" height="1.6" fill="#ce9178" fill-opacity="0.5"/><rect x="28" y="30.2" width="4" height="1.6" fill="#ce9178" fill-opacity="1.0"/><rect x="32" y="30.2" width="1" height="1.6" fill="#ce9178" fill-opacity="0.5"/><rect x="33" y="30.2" width="5" height="1.6" fill="#ce9178" fill-opacity="1.0"/><rect x="38" y="30.2" width="1" height="1.6" fill="#ce9178" fill-opacity="0.5"/><rect x="39" y="30.2" width="8" height="1.6" fill="#ce9178" fill-opacity="1.0"/><rect x="47" y="30.2" width="1" height="1.6" fill="#ce9178" fill-opacity="0.5"/><rect x="48" y="30.2" width="4" height="1.6" fill="#ce9178" fill-opacity="1.0"/><rect x="52" y="30.2" width="1" height="1.6" fill="#ce9178" fill-opacity="0.5"/><rect x="53" y="30.2" width="1" height="1.6" fill="#d4d4d4" fill-opacity="0.5"/><rect x="55" y="30.2" width="1" height="1.6" fill="#da70d6" fill-opacity="0.5"/><rect x="8" y="32.2" width="1" height="1.6" fill="#ce9178" fill-opacity="0.5"/><rect x="9" y="32.2" width="6" height="1.6" fill="#ce9178" fill-opacity="1.0"/><rect x="15" y="32.2" width="1" height="1.6" fill="#ce9178" fill-opacity="0.5"/><rect x="16" y="32.2" width="4" height="1.6" fill="#ce9178" fill-opacity="1.0"/><rect x="20" y="32.2" width="1" height="1.6" fill="#ce9178" fill-opacity="0.5"/><rect x="21" y="32.2" width="1" height="1.6" fill="#d4d4d4" fill-opacity="0.5"/><rect x="23" y="32.2" width="1" height="1.6" fill="#ce9178" fill-opacity="0.5"/><rect x="24" y="32.2" width="8" height="1.6" fill="#ce9178" fill-opacity="1.0"/><rect x="32" y="32.2" width="1" height="1.6" fill="#ce9178" fill-opacity="0.5"/><rect x="4" y="34.2" width="1" height="1.6" fill="#179fff" fill-opacity="0.5"/><rect x="5" y="34.2" width="1" height="1.6" fill="#da70d6" fill-opacity="0.5"/><rect x="0" y="38.2" width="3" height="1.6" fill="#569cd6" fill-opacity="1.0"/><rect x="4" y="38.2" width="6" height="1.6" fill="#dcdcaa" fill-opacity="1.0"/><rect x="10" y="38.2" width="1" height="1.6" fill="#ffd700" fill-opacity="0.5"/><rect x="11" y="38.2" width="7" height="1.6" fill="#9cdcfe" fill-opacity="1.0"/><rect x="18" y="38.2" width="1" height="1.6" fill="#ffd700" fill-opacity="0.5"/><rect x="19" y="38.2" width="1" height="1.6" fill="#d4d4d4" fill-opacity="0.5"/><rect x="4" y="40.2" width="6" height="1.6" fill="#c586c0" fill-opacity="1.0"/><rect x="11" y="40.2" width="6" height="1.6" fill="#dcdcaa" fill-opacity="1.0"/><rect x="17" y="40.2" width="1" height="1.6" fill="#ffd700" fill-opacity="0.5"/><rect x="18" y="40.2" width="7" height="1.6" fill="#9cdcfe" fill-opacity="1.0"/><rect x="25" y="40.2" width="1" height="1.6" fill="#d4d4d4" fill-opacity="0.5"/><rect x="27" y="40.2" width="1" height="1.6" fill="#ce9178" fill-opacity="0.5"/><rect x="28" y="40.2" width="4" height="1.6" fill="#ce9178" fill-opacity="1.0"/><rect x="32" y="40.2" width="1" height="1.6" fill="#ce9178" fill-opacity="0.5"/><rect x="33" y="40.2" width="5" height="1.6" fill="#ce9178" fill-opacity="1.0"/><rect x="38" y="40.2" width="1" height="1.6" fill="#ce9178" fill-opacity="0.5"/><rect x="39" y="40.2" width="6" height="1.6" fill="#ce9178" fill-opacity="1.0"/><rect x="45" y="40.2" width="1" height="1.6" fill="#ce9178" fill-opacity="0.5"/><rect x="46" y="40.2" width="4" height="1.6" fill="#ce9178" fill-opacity="1.0"/><rect x="50" y="40.2" width="1" height="1.6" fill="#ce9178" fill-opacity="0.5"/><rect x="51" y="40.2" width="1" height="1.6" fill="#d4d4d4" fill-opacity="0.5"/><rect x="53" y="40.2" width="1" height="1.6" fill="#da70d6" fill-opacity="0.5"/><rect x="8" y="42.2" width="1" height="1.6" fill="#ce9178" fill-opacity="0.5"/><rect x="9" y="42.2" width="6" height="1.6" fill="#ce9178" fill-opacity="1.0"/><rect x="15" y="42.2" width="1" height="1.6" fill="#ce9178" fill-opacity="0.5"/><rect x="16" y="42.2" width="4" height="1.6" fill="#ce9178" fill-opacity="1.0"/><rect x="20" y="42.2" width="1" height="1.6" fill="#ce9178" fill-opacity="0.5"/><rect x="21" y="42.2" width="1" height="1.6" fill="#d4d4d4" fill-opacity="0.5"/><rect x="23" y="42.2" width="1" height="1.6" fill="#ce9178" fill-opacity="0.5"/><rect x="24" y="42.2" width="6" height="1.6" fill="#ce9178" fill-opacity="1.0"/><rect x="30" y="42.2" width="1" height="1.6" fill="#ce9178" fill-opacity="0.5"/><rect x="4" y="44.2" width="1" height="1.6" fill="#179fff" fill-opacity="0.5"/><rect x="5" y="44.2" width="1" height="1.6" fill="#da70d6" fill-opacity="0.5"/><rect x="0" y="48.2" width="3" height="1.6" fill="#569cd6" fill-opacity="1.0"/><rect x="4" y="48.2" width="7" height="1.6" fill="#dcdcaa" fill-opacity="1.0"/><rect x="11" y="48.2" width="1" height="1.6" fill="#ffd700" fill-opacity="0.5"/><rect x="12" y="48.2" width="7" height="1.6" fill="#9cdcfe" fill-opacity="1.0"/><rect x="19" y="48.2" width="1" height="1.6" fill="#ffd700" fill-opacity="0.5"/><rect x="20" y="48.2" width="1" height="1.6" fill="#d4d4d4" fill-opacity="0.5"/><rect x="4" y="50.2" width="6" height="1.6" fill="#c586c0" fill-opacity="1.0"/><rect x="11" y="50.2" width="6" height="1.6" fill="#dcdcaa" fill-opacity="1.0"/><rect x="17" y="50.2" width="1" height="1.6" fill="#ffd700" fill-opacity="0.5"/><rect x="18" y="50.2" width="7" height="1.6" fill="#9cdcfe" fill-opacity="1.0"/><rect x="25" y="50.2" width="1" height="1.6" fill="#d4d4d4" fill-opacity="0.5"/><rect x="27" y="50.2" width="1" height="1.6" fill="#ce9178" fill-opacity="0.5"/><rect x="28" y="50.2" width="4" height="1.6" fill="#ce9178" fill-opacity="1.0"/><rect x="32" y="50.2" width="1" height="1.6" fill="#ce9178" fill-opacity="0.5"/><rect x="33" y="50.2" width="5" height="1.6" fill="#ce9178" fill-opacity="1.0"/><rect x="38" y="50.2" width="1" height="1.6" fill="#ce9178" fill-opacity="0.5"/><rect x="39" y="50.2" width="7" height="1.6" fill="#ce9178" fill-opacity="1.0"/><rect x="46" y="50.2" width="1" height="1.6" fill="#ce9178" fill-opacity="0.5"/><rect x="47" y="50.2" width="4" height="1.6" fill="#ce9178" fill-opacity="1.0"/><rect x="51" y="50.2" width="1" height="1.6" fill="#ce9178" fill-opacity="0.5"/><rect x="52" y="50.2" width="1" height="1.6" fill="#d4d4d4" fill-opacity="0.5"/><rect x="54" y="50.2" width="1" height="1.6" fill="#da70d6" fill-opacity="0.5"/><rect x="8" y="52.2" width="1" height="1.6" fill="#ce9178" fill-opacity="0.5"/><rect x="9" y="52.2" width="6" height="1.6" fill="#ce9178" fill-opacity="1.0"/><rect x="15" y="52.2" width="1" height="1.6" fill="#ce9178" fill-opacity="0.5"/><rect x="16" y="52.2" width="4" height="1.6" fill="#ce9178" fill-opacity="1.0"/><rect x="20" y="52.2" width="1" height="1.6" fill="#ce9178" fill-opacity="0.5"/><rect x="21" y="52.2" width="1" height="1.6" fill="#d4d4d4" fill-opacity="0.5"/><rect x="23" y="52.2" width="1" height="1.6" fill="#ce9178" fill-opacity="0.5"/><rect x="24" y="52.2" width="7" height="1.6" fill="#ce9178" fill-opacity="1.0"/><rect x="31" y="52.2" width="1" height="1.6" fill="#ce9178" fill-opacity="0.5"/><rect x="4" y="54.2" width="1" height="1.6" fill="#179fff" fill-opacity="0.5"/><rect x="5" y="54.2" width="1" height="1.6" fill="#da70d6" fill-opacity="0.5"/><rect x="0" y="58.2" width="3" height="1.6" fill="#569cd6" fill-opacity="1.0"/><rect x="4" y="58.2" width="5" height="1.6" fill="#dcdcaa" fill-opacity="1.0"/><rect x="9" y="58.2" width="1" height="1.6" fill="#ffd700" fill-opacity="0.5"/><rect x="10" y="58.2" width="7" height="1.6" fill="#9cdcfe" fill-opacity="1.0"/><rect x="17" y="58.2" width="1" height="1.6" fill="#ffd700" fill-opacity="0.5"/><rect x="18" y="58.2" width="1" height="1.6" fill="#d4d4d4" fill-opacity="0.5"/><rect x="4" y="60.2" width="6" height="1.6" fill="#c586c0" fill-opacity="1.0"/><rect x="11" y="60.2" width="6" height="1.6" fill="#dcdcaa" fill-opacity="1.0"/><rect x="17" y="60.2" width="1" height="1.6" fill="#ffd700" fill-opacity="0.5"/><rect x="18" y="60.2" width="7" height="1.6" fill="#9cdcfe" fill-opacity="1.0"/><rect x="25" y="60.2" width="1" height="1.6" fill="#d4d4d4" fill-opacity="0.5"/><rect x="27" y="60.2" width="1" height="1.6" fill="#ce9178" fill-opacity="0.5"/><rect x="28" y="60.2" width="4" height="1.6" fill="#ce9178" fill-opacity="1.0"/><rect x="32" y="60.2" width="1" height="1.6" fill="#ce9178" fill-opacity="0.5"/><rect x="33" y="60.2" width="5" height="1.6" fill="#ce9178" fill-opacity="1.0"/><rect x="38" y="60.2" width="1" height="1.6" fill="#ce9178" fill-opacity="0.5"/><rect x="39" y="60.2" width="5" height="1.6" fill="#ce9178" fill-opacity="1.0"/><rect x="44" y="60.2" width="1" height="1.6" fill="#ce9178" fill-opacity="0.5"/><rect x="45" y="60.2" width="4" height="1.6" fill="#ce9178" fill-opacity="1.0"/><rect x="49" y="60.2" width="1" height="1.6" fill="#ce9178" fill-opacity="0.5"/><rect x="50" y="60.2" width="1" height="1.6" fill="#d4d4d4" fill-opacity="0.5"/><rect x="52" y="60.2" width="1" height="1.6" fill="#da70d6" fill-opacity="0.5"/><rect x="8" y="62.2" width="1" height="1.6" fill="#ce9178" fill-opacity="0.5"/><rect x="9" y="62.2" width="6" height="1.6" fill="#ce9178" fill-opacity="1.0"/><rect x="15" y="62.2" width="1" height="1.6" fill="#ce9178" fill-opacity="0.5"/><rect x="16" y="62.2" width="4" height="1.6" fill="#ce9178" fill-opacity="1.0"/><rect x="20" y="62.2" width="1" height="1.6" fill="#ce9178" fill-opacity="0.5"/><rect x="21" y="62.2" width="1" height="1.6" fill="#d4d4d4" fill-opacity="0.5"/><rect x="23" y="62.2" width="1" height="1.6" fill="#ce9178" fill-opacity="0.5"/><rect x="24" y="62.2" width="5" height="1.6" fill="#ce9178" fill-opacity="1.0"/><rect x="29" y="62.2" width="1" height="1.6" fill="#ce9178" fill-opacity="0.5"/><rect x="4" y="64.2" width="1" height="1.6" fill="#179fff" fill-opacity="0.5"/><rect x="5" y="64.2" width="1" height="1.6" fill="#da70d6" fill-opacity="0.5"/><rect x="0" y="68.2" width="3" height="1.6" fill="#569cd6" fill-opacity="1.0"/><rect x="4" y="68.2" width="6" height="1.6" fill="#dcdcaa" fill-opacity="1.0"/><rect x="10" y="68.2" width="1" height="1.6" fill="#dcdcaa" fill-opacity="0.5"/><rect x="11" y="68.2" width="2" height="1.6" fill="#dcdcaa" fill-opacity="1.0"/><rect x="13" y="68.2" width="1" height="1.6" fill="#ffd700" fill-opacity="0.5"/><rect x="14" y="68.2" width="7" height="1.6" fill="#9cdcfe" fill-opacity="1.0"/><rect x="21" y="68.2" width="1" height="1.6" fill="#ffd700" fill-opacity="0.5"/><rect x="22" y="68.2" width="1" height="1.6" fill="#d4d4d4" fill-opacity="0.5"/><rect x="4" y="70.2" width="6" height="1.6" fill="#9cdcfe" fill-opacity="1.0"/><rect x="10" y="70.2" width="1" height="1.6" fill="#9cdcfe" fill-opacity="0.5"/><rect x="11" y="70.2" width="2" height="1.6" fill="#9cdcfe" fill-opacity="1.0"/><rect x="13" y="70.2" width="1" height="1.6" fill="#9cdcfe" fill-opacity="0.5"/><rect x="14" y="70.2" width="6" height="1.6" fill="#9cdcfe" fill-opacity="1.0"/><rect x="21" y="70.2" width="1" height="1.6" fill="#d4d4d4" fill-opacity="0.5"/><rect x="23" y="70.2" width="1" height="1.6" fill="#ffd700" fill-opacity="0.5"/><rect x="8" y="72.2" width="1" height="1.6" fill="#ce9178" fill-opacity="0.5"/><rect x="9" y="72.2" width="4" height="1.6" fill="#ce9178" fill-opacity="1.0"/><rect x="13" y="72.2" width="1" height="1.6" fill="#ce9178" fill-opacity="0.5"/><rect x="14" y="72.2" width="6" height="1.6" fill="#ce9178" fill-opacity="1.0"/><rect x="20" y="72.2" width="1" height="1.6" fill="#ce9178" fill-opacity="0.5"/><rect x="21" y="72.2" width="6" height="1.6" fill="#ce9178" fill-opacity="1.0"/><rect x="27" y="72.2" width="1" height="1.6" fill="#ce9178" fill-opacity="0.5"/><rect x="28" y="72.2" width="2" height="1.6" fill="#ce9178" fill-opacity="1.0"/><rect x="30" y="72.2" width="1" height="1.6" fill="#ce9178" fill-opacity="0.5"/><rect x="31" y="72.2" width="3" height="1.6" fill="#ce9178" fill-opacity="1.0"/><rect x="34" y="72.2" width="1" height="1.6" fill="#ce9178" fill-opacity="0.5"/><rect x="35" y="72.2" width="1" height="1.6" fill="#d4d4d4" fill-opacity="0.5"/><rect x="8" y="74.2" width="1" height="1.6" fill="#ce9178" fill-opacity="0.5"/><rect x="9" y="74.2" width="4" height="1.6" fill="#ce9178" fill-opacity="1.0"/><rect x="13" y="74.2" width="1" height="1.6" fill="#ce9178" fill-opacity="0.5"/><rect x="14" y="74.2" width="6" height="1.6" fill="#ce9178" fill-opacity="1.0"/><rect x="20" y="74.2" width="1" height="1.6" fill="#ce9178" fill-opacity="0.5"/><rect x="21" y="74.2" width="6" height="1.6" fill="#ce9178" fill-opacity="1.0"/><rect x="27" y="74.2" width="1" height="1.6" fill="#ce9178" fill-opacity="0.5"/><rect x="28" y="74.2" width="2" height="1.6" fill="#ce9178" fill-opacity="1.0"/><rect x="30" y="74.2" width="1" height="1.6" fill="#ce9178" fill-opacity="0.5"/><rect x="31" y="74.2" width="3" height="1.6" fill="#ce9178" fill-opacity="1.0"/><rect x="34" y="74.2" width="1" height="1.6" fill="#ce9178" fill-opacity="0.5"/><rect x="35" y="74.2" width="3" height="1.6" fill="#ce9178" fill-opacity="1.0"/><rect x="38" y="74.2" width="1" height="1.6" fill="#ce9178" fill-opacity="0.5"/><rect x="39" y="74.2" width="1" height="1.6" fill="#d4d4d4" fill-opacity="0.5"/><rect x="8" y="76.2" width="1" height="1.6" fill="#ce9178" fill-opacity="0.5"/><rect x="9" y="76.2" width="4" height="1.6" fill="#ce9178" fill-opacity="1.0"/><rect x="13" y="76.2" width="1" height="1.6" fill="#ce9178" fill-opacity="0.5"/><rect x="14" y="76.2" width="6" height="1.6" fill="#ce9178" fill-opacity="1.0"/><rect x="20" y="76.2" width="1" height="1.6" fill="#ce9178" fill-opacity="0.5"/><rect x="21" y="76.2" width="6" height="1.6" fill="#ce9178" fill-opacity="1.0"/><rect x="27" y="76.2" width="1" height="1.6" fill="#ce9178" fill-opacity="0.5"/><rect x="28" y="76.2" width="2" height="1.6" fill="#ce9178" fill-opacity="1.0"/><rect x="30" y="76.2" width="1" height="1.6" fill="#ce9178" fill-opacity="0.5"/><rect x="31" y="76.2" width="4" height="1.6" fill="#ce9178" fill-opacity="1.0"/><rect x="35" y="76.2" width="1" height="1.6" fill="#ce9178" fill-opacity="0.5"/><rect x="36" y="76.2" width="3" height="1.6" fill="#ce9178" fill-opacity="1.0"/><rect x="39" y="76.2" width="1" height="1.6" fill="#ce9178" fill-opacity="0.5"/><rect x="40" y="76.2" width="1" height="1.6" fill="#d4d4d4" fill-opacity="0.5"/><rect x="4" y="78.2" width="1" height="1.6" fill="#179fff" fill-opacity="0.5"/><rect x="4" y="82.2" width="6" height="1.6" fill="#c586c0" fill-opacity="1.0"/><rect x="11" y="82.2" width="6" height="1.6" fill="#dcdcaa" fill-opacity="1.0"/><rect x="17" y="82.2" width="1" height="1.6" fill="#ffd700" fill-opacity="0.5"/><rect x="18" y="82.2" width="7" height="1.6" fill="#9cdcfe" fill-opacity="1.0"/><rect x="25" y="82.2" width="1" height="1.6" fill="#d4d4d4" fill-opacity="0.5"/><rect x="27" y="82.2" width="1" height="1.6" fill="#ce9178" fill-opacity="0.5"/><rect x="28" y="82.2" width="4" height="1.6" fill="#ce9178" fill-opacity="1.0"/><rect x="32" y="82.2" width="1" height="1.6" fill="#ce9178" fill-opacity="0.5"/><rect x="33" y="82.2" width="5" height="1.6" fill="#ce9178" fill-opacity="1.0"/><rect x="38" y="82.2" width="1" height="1.6" fill="#ce9178" fill-opacity="0.5"/><rect x="39" y="82.2" width="6" height="1.6" fill="#ce9178" fill-opacity="1.0"/><rect x="45" y="82.2" width="1" height="1.6" fill="#ce9178" fill-opacity="0.5"/><rect x="46" y="82.2" width="2" height="1.6" fill="#ce9178" fill-opacity="1.0"/><rect x="48" y="82.2" width="1" height="1.6" fill="#ce9178" fill-opacity="0.5"/><rect x="49" y="82.2" width="4" height="1.6" fill="#ce9178" fill-opacity="1.0"/><rect x="53" y="82.2" width="1" height="1.6" fill="#ce9178" fill-opacity="0.5"/><rect x="54" y="82.2" width="1" height="1.6" fill="#d4d4d4" fill-opacity="0.5"/><rect x="56" y="82.2" width="1" height="1.6" fill="#da70d6" fill-opacity="0.5"/><rect x="8" y="84.2" width="1" height="1.6" fill="#ce9178" fill-opacity="0.5"/><rect x="9" y="84.2" width="6" height="1.6" fill="#ce9178" fill-opacity="1.0"/><rect x="15" y="84.2" width="1" height="1.6" fill="#ce9178" fill-opacity="0.5"/><rect x="16" y="84.2" width="4" height="1.6" fill="#ce9178" fill-opacity="1.0"/><rect x="20" y="84.2" width="1" height="1.6" fill="#ce9178" fill-opacity="0.5"/><rect x="21" y="84.2" width="1" height="1.6" fill="#d4d4d4" fill-opacity="0.5"/><rect x="23" y="84.2" width="1" height="1.6" fill="#ce9178" fill-opacity="0.5"/><rect x="24" y="84.2" width="6" height="1.6" fill="#ce9178" fill-opacity="1.0"/><rect x="30" y="84.2" width="1" height="1.6" fill="#ce9178" fill-opacity="0.5"/><rect x="31" y="84.2" width="2" height="1.6" fill="#ce9178" fill-opacity="1.0"/><rect x="33" y="84.2" width="1" height="1.6" fill="#ce9178" fill-opacity="0.5"/><rect x="34" y="84.2" width="1" height="1.6" fill="#d4d4d4" fill-opacity="0.5"/><rect x="8" y="86.2" width="1" height="1.6" fill="#ce9178" fill-opacity="0.5"/><rect x="9" y="86.2" width="6" height="1.6" fill="#ce9178" fill-opacity="1.0"/><rect x="15" y="86.2" width="1" height="1.6" fill="#ce9178" fill-opacity="0.5"/><rect x="16" y="86.2" width="2" height="1.6" fill="#ce9178" fill-opacity="1.0"/><rect x="18" y="86.2" width="1" height="1.6" fill="#ce9178" fill-opacity="0.5"/><rect x="19" y="86.2" width="6" height="1.6" fill="#ce9178" fill-opacity="1.0"/><rect x="25" y="86.2" width="1" height="1.6" fill="#ce9178" fill-opacity="0.5"/><rect x="26" y="86.2" width="1" height="1.6" fill="#d4d4d4" fill-opacity="0.5"/><rect x="28" y="86.2" width="6" height="1.6" fill="#9cdcfe" fill-opacity="1.0"/><rect x="34" y="86.2" width="1" height="1.6" fill="#9cdcfe" fill-opacity="0.5"/><rect x="35" y="86.2" width="2" height="1.6" fill="#9cdcfe" fill-opacity="1.0"/><rect x="37" y="86.2" width="1" height="1.6" fill="#9cdcfe" fill-opacity="0.5"/><rect x="38" y="86.2" width="6" height="1.6" fill="#9cdcfe" fill-opacity="1.0"/><rect x="44" y="86.2" width="1" height="1.6" fill="#d4d4d4" fill-opacity="0.5"/><rect x="4" y="88.2" width="1" height="1.6" fill="#179fff" fill-opacity="0.5"/><rect x="5" y="88.2" width="1" height="1.6" fill="#da70d6" fill-opacity="0.5"/><rect x="0" y="92.2" width="3" height="1.6" fill="#569cd6" fill-opacity="1.0"/><rect x="4" y="92.2" width="4" height="1.6" fill="#dcdcaa" fill-opacity="1.0"/><rect x="8" y="92.2" width="1" height="1.6" fill="#dcdcaa" fill-opacity="0.5"/><rect x="9" y="92.2" width="4" height="1.6" fill="#dcdcaa" fill-opacity="1.0"/><rect x="13" y="92.2" width="1" height="1.6" fill="#ffd700" fill-opacity="0.5"/><rect x="14" y="92.2" width="7" height="1.6" fill="#9cdcfe" fill-opacity="1.0"/><rect x="21" y="92.2" width="1" height="1.6" fill="#ffd700" fill-opacity="0.5"/><rect x="22" y="92.2" width="1" height="1.6" fill="#d4d4d4" fill-opacity="0.5"/><rect x="4" y="94.2" width="4" height="1.6" fill="#9cdcfe" fill-opacity="1.0"/><rect x="8" y="94.2" width="1" height="1.6" fill="#9cdcfe" fill-opacity="0.5"/><rect x="9" y="94.2" width="4" height="1.6" fill="#9cdcfe" fill-opacity="1.0"/><rect x="13" y="94.2" width="1" height="1.6" fill="#9cdcfe" fill-opacity="0.5"/><rect x="14" y="94.2" width="6" height="1.6" fill="#9cdcfe" fill-opacity="1.0"/><rect x="21" y="94.2" width="1" height="1.6" fill="#d4d4d4" fill-opacity="0.5"/><rect x="23" y="94.2" width="1" height="1.6" fill="#ffd700" fill-opacity="0.5"/><rect x="8" y="96.2" width="1" height="1.6" fill="#ce9178" fill-opacity="0.5"/><rect x="9" y="96.2" width="4" height="1.6" fill="#ce9178" fill-opacity="1.0"/><rect x="13" y="96.2" width="1" height="1.6" fill="#ce9178" fill-opacity="0.5"/><rect x="14" y="96.2" width="6" height="1.6" fill="#ce9178" fill-opacity="1.0"/><rect x="20" y="96.2" width="1" height="1.6" fill="#ce9178" fill-opacity="0.5"/><rect x="21" y="96.2" width="4" height="1.6" fill="#ce9178" fill-opacity="1.0"/><rect x="25" y="96.2" width="1" height="1.6" fill="#ce9178" fill-opacity="0.5"/><rect x="26" y="96.2" width="4" height="1.6" fill="#ce9178" fill-opacity="1.0"/><rect x="30" y="96.2" width="1" height="1.6" fill="#ce9178" fill-opacity="0.5"/><rect x="31" y="96.2" width="1" height="1.6" fill="#ce9178" fill-opacity="1.0"/><rect x="32" y="96.2" width="1" height="1.6" fill="#ce9178" fill-opacity="0.5"/><rect x="33" y="96.2" width="3" height="1.6" fill="#ce9178" fill-opacity="1.0"/><rect x="36" y="96.2" width="1" height="1.6" fill="#ce9178" fill-opacity="0.5"/><rect x="37" y="96.2" width="1" height="1.6" fill="#d4d4d4" fill-opacity="0.5"/><rect x="8" y="98.2" width="1" height="1.6" fill="#ce9178" fill-opacity="0.5"/><rect x="9" y="98.2" width="4" height="1.6" fill="#ce9178" fill-opacity="1.0"/><rect x="13" y="98.2" width="1" height="1.6" fill="#ce9178" fill-opacity="0.5"/><rect x="14" y="98.2" width="6" height="1.6" fill="#ce9178" fill-opacity="1.0"/><rect x="20" y="98.2" width="1" height="1.6" fill="#ce9178" fill-opacity="0.5"/><rect x="21" y="98.2" width="4" height="1.6" fill="#ce9178" fill-opacity="1.0"/><rect x="25" y="98.2" width="1" height="1.6" fill="#ce9178" fill-opacity="0.5"/><rect x="26" y="98.2" width="4" height="1.6" fill="#ce9178" fill-opacity="1.0"/><rect x="30" y="98.2" width="1" height="1.6" fill="#ce9178" fill-opacity="0.5"/><rect x="31" y="98.2" width="1" height="1.6" fill="#ce9178" fill-opacity="1.0"/><rect x="32" y="98.2" width="1" height="1.6" fill="#ce9178" fill-opacity="0.5"/><rect x="33" y="98.2" width="3" height="1.6" fill="#ce9178" fill-opacity="1.0"/><rect x="36" y="98.2" width="1" height="1.6" fill="#ce9178" fill-opacity="0.5"/><rect x="37" y="98.2" width="1" height="1.6" fill="#d4d4d4" fill-opacity="0.5"/><rect x="8" y="100.2" width="1" height="1.6" fill="#ce9178" fill-opacity="0.5"/><rect x="9" y="100.2" width="4" height="1.6" fill="#ce9178" fill-opacity="1.0"/><rect x="13" y="100.2" width="1" height="1.6" fill="#ce9178" fill-opacity="0.5"/><rect x="14" y="100.2" width="6" height="1.6" fill="#ce9178" fill-opacity="1.0"/><rect x="20" y="100.2" width="1" height="1.6" fill="#ce9178" fill-opacity="0.5"/><rect x="21" y="100.2" width="4" height="1.6" fill="#ce9178" fill-opacity="1.0"/><rect x="25" y="100.2" width="1" height="1.6" fill="#ce9178" fill-opacity="0.5"/><rect x="26" y="100.2" width="4" height="1.6" fill="#ce9178" fill-opacity="1.0"/><rect x="30" y="100.2" width="1" height="1.6" fill="#ce9178" fill-opacity="0.5"/><rect x="31" y="100.2" width="1" height="1.6" fill="#ce9178" fill-opacity="1.0"/><rect x="32" y="100.2" width="1" height="1.6" fill="#ce9178" fill-opacity="0.5"/><rect x="33" y="100.2" width="3" height="1.6" fill="#ce9178" fill-opacity="1.0"/><rect x="36" y="100.2" width="1" height="1.6" fill="#ce9178" fill-opacity="0.5"/><rect x="37" y="100.2" width="1" height="1.6" fill="#d4d4d4" fill-opacity="0.5"/><rect x="4" y="102.2" width="1" height="1.6" fill="#179fff" fill-opacity="0.5"/><rect x="4" y="106.2" width="6" height="1.6" fill="#c586c0" fill-opacity="1.0"/><rect x="11" y="106.2" width="6" height="1.6" fill="#dcdcaa" fill-opacity="1.0"/><rect x="17" y="106.2" width="1" height="1.6" fill="#ffd700" fill-opacity="0.5"/><rect x="18" y="106.2" width="7" height="1.6" fill="#9cdcfe" fill-opacity="1.0"/><rect x="25" y="106.2" width="1" height="1.6" fill="#d4d4d4" fill-opacity="0.5"/><rect x="27" y="106.2" width="1" height="1.6" fill="#ce9178" fill-opacity="0.5"/><rect x="28" y="106.2" width="4" height="1.6" fill="#ce9178" fill-opacity="1.0"/><rect x="32" y="106.2" width="1" height="1.6" fill="#ce9178" fill-opacity="0.5"/><rect x="33" y="106.2" width="5" height="1.6" fill="#ce9178" fill-opacity="1.0"/><rect x="38" y="106.2" width="1" height="1.6" fill="#ce9178" fill-opacity="0.5"/><rect x="39" y="106.2" width="4" height="1.6" fill="#ce9178" fill-opacity="1.0"/><rect x="43" y="106.2" width="1" height="1.6" fill="#ce9178" fill-opacity="0.5"/><rect x="44" y="106.2" width="4" height="1.6" fill="#ce9178" fill-opacity="1.0"/><rect x="48" y="106.2" width="1" height="1.6" fill="#ce9178" fill-opacity="0.5"/><rect x="49" y="106.2" width="4" height="1.6" fill="#ce9178" fill-opacity="1.0"/><rect x="53" y="106.2" width="1" height="1.6" fill="#ce9178" fill-opacity="0.5"/><rect x="54" y="106.2" width="1" height="1.6" fill="#d4d4d4" fill-opacity="0.5"/><rect x="56" y="106.2" width="1" height="1.6" fill="#da70d6" fill-opacity="0.5"/><rect x="8" y="108.2" width="1" height="1.6" fill="#ce9178" fill-opacity="0.5"/><rect x="9" y="108.2" width="6" height="1.6" fill="#ce9178" fill-opacity="1.0"/><rect x="15" y="108.2" width="1" height="1.6" fill="#ce9178" fill-opacity="0.5"/><rect x="16" y="108.2" width="4" height="1.6" fill="#ce9178" fill-opacity="1.0"/><rect x="20" y="108.2" width="1" height="1.6" fill="#ce9178" fill-opacity="0.5"/><rect x="21" y="108.2" width="1" height="1.6" fill="#d4d4d4" fill-opacity="0.5"/><rect x="23" y="108.2" width="1" height="1.6" fill="#ce9178" fill-opacity="0.5"/><rect x="24" y="108.2" width="4" height="1.6" fill="#ce9178" fill-opacity="1.0"/><rect x="28" y="108.2" width="1" height="1.6" fill="#ce9178" fill-opacity="0.5"/><rect x="29" y="108.2" width="4" height="1.6" fill="#ce9178" fill-opacity="1.0"/><rect x="33" y="108.2" width="1" height="1.6" fill="#ce9178" fill-opacity="0.5"/><rect x="34" y="108.2" width="1" height="1.6" fill="#d4d4d4" fill-opacity="0.5"/><rect x="8" y="110.2" width="1" height="1.6" fill="#ce9178" fill-opacity="0.5"/><rect x="9" y="110.2" width="4" height="1.6" fill="#ce9178" fill-opacity="1.0"/><rect x="13" y="110.2" width="1" height="1.6" fill="#ce9178" fill-opacity="0.5"/><rect x="14" y="110.2" width="4" height="1.6" fill="#ce9178" fill-opacity="1.0"/><rect x="18" y="110.2" width="1" height="1.6" fill="#ce9178" fill-opacity="0.5"/><rect x="19" y="110.2" width="6" height="1.6" fill="#ce9178" fill-opacity="1.0"/><rect x="25" y="110.2" width="1" height="1.6" fill="#ce9178" fill-opacity="0.5"/><rect x="26" y="110.2" width="1" height="1.6" fill="#d4d4d4" fill-opacity="0.5"/><rect x="28" y="110.2" width="4" height="1.6" fill="#9cdcfe" fill-opacity="1.0"/><rect x="32" y="110.2" width="1" height="1.6" fill="#9cdcfe" fill-opacity="0.5"/><rect x="33" y="110.2" width="4" height="1.6" fill="#9cdcfe" fill-opacity="1.0"/><rect x="37" y="110.2" width="1" height="1.6" fill="#9cdcfe" fill-opacity="0.5"/><rect x="38" y="110.2" width="6" height="1.6" fill="#9cdcfe" fill-opacity="1.0"/><rect x="44" y="110.2" width="1" height="1.6" fill="#d4d4d4" fill-opacity="0.5"/><rect x="4" y="112.2" width="1" height="1.6" fill="#179fff" fill-opacity="0.5"/><rect x="5" y="112.2" width="1" height="1.6" fill="#da70d6" fill-opacity="0.5"/><rect x="0" y="116.2" width="3" height="1.6" fill="#569cd6" fill-opacity="1.0"/><rect x="4" y="116.2" width="11" height="1.6" fill="#dcdcaa" fill-opacity="1.0"/><rect x="15" y="116.2" width="1" height="1.6" fill="#ffd700" fill-opacity="0.5"/><rect x="16" y="116.2" width="7" height="1.6" fill="#9cdcfe" fill-opacity="1.0"/><rect x="23" y="116.2" width="1" height="1.6" fill="#ffd700" fill-opacity="0.5"/><rect x="24" y="116.2" width="1" height="1.6" fill="#d4d4d4" fill-opacity="0.5"/><rect x="4" y="118.2" width="11" height="1.6" fill="#9cdcfe" fill-opacity="1.0"/><rect x="15" y="118.2" width="1" height="1.6" fill="#9cdcfe" fill-opacity="0.5"/><rect x="16" y="118.2" width="6" height="1.6" fill="#9cdcfe" fill-opacity="1.0"/><rect x="23" y="118.2" width="1" height="1.6" fill="#d4d4d4" fill-opacity="0.5"/><rect x="25" y="118.2" width="1" height="1.6" fill="#ffd700" fill-opacity="0.5"/><rect x="8" y="120.2" width="1" height="1.6" fill="#ce9178" fill-opacity="0.5"/><rect x="9" y="120.2" width="4" height="1.6" fill="#ce9178" fill-opacity="1.0"/><rect x="13" y="120.2" width="1" height="1.6" fill="#ce9178" fill-opacity="0.5"/><rect x="14" y="120.2" width="6" height="1.6" fill="#ce9178" fill-opacity="1.0"/><rect x="20" y="120.2" width="1" height="1.6" fill="#ce9178" fill-opacity="0.5"/><rect x="21" y="120.2" width="5" height="1.6" fill="#ce9178" fill-opacity="1.0"/><rect x="26" y="120.2" width="1" height="1.6" fill="#ce9178" fill-opacity="0.5"/><rect x="27" y="120.2" width="6" height="1.6" fill="#ce9178" fill-opacity="1.0"/><rect x="33" y="120.2" width="1" height="1.6" fill="#ce9178" fill-opacity="0.5"/><rect x="34" y="120.2" width="3" height="1.6" fill="#ce9178" fill-opacity="1.0"/><rect x="37" y="120.2" width="1" height="1.6" fill="#ce9178" fill-opacity="0.5"/><rect x="38" y="120.2" width="1" height="1.6" fill="#d4d4d4" fill-opacity="0.5"/><rect x="8" y="122.2" width="1" height="1.6" fill="#ce9178" fill-opacity="0.5"/><rect x="9" y="122.2" width="4" height="1.6" fill="#ce9178" fill-opacity="1.0"/><rect x="13" y="122.2" width="1" height="1.6" fill="#ce9178" fill-opacity="0.5"/><rect x="14" y="122.2" width="6" height="1.6" fill="#ce9178" fill-opacity="1.0"/><rect x="20" y="122.2" width="1" height="1.6" fill="#ce9178" fill-opacity="0.5"/><rect x="21" y="122.2" width="11" height="1.6" fill="#ce9178" fill-opacity="1.0"/><rect x="32" y="122.2" width="1" height="1.6" fill="#ce9178" fill-opacity="0.5"/><rect x="33" y="122.2" width="7" height="1.6" fill="#ce9178" fill-opacity="1.0"/><rect x="40" y="122.2" width="1" height="1.6" fill="#ce9178" fill-opacity="0.5"/><rect x="41" y="122.2" width="1" height="1.6" fill="#ce9178" fill-opacity="1.0"/><rect x="42" y="122.2" width="1" height="1.6" fill="#ce9178" fill-opacity="0.5"/><rect x="43" y="122.2" width="3" height="1.6" fill="#ce9178" fill-opacity="1.0"/><rect x="46" y="122.2" width="1" height="1.6" fill="#ce9178" fill-opacity="0.5"/><rect x="47" y="122.2" width="1" height="1.6" fill="#d4d4d4" fill-opacity="0.5"/><rect x="8" y="124.2" width="1" height="1.6" fill="#ce9178" fill-opacity="0.5"/><rect x="9" y="124.2" width="4" height="1.6" fill="#ce9178" fill-opacity="1.0"/><rect x="13" y="124.2" width="1" height="1.6" fill="#ce9178" fill-opacity="0.5"/><rect x="14" y="124.2" width="6" height="1.6" fill="#ce9178" fill-opacity="1.0"/><rect x="20" y="124.2" width="1" height="1.6" fill="#ce9178" fill-opacity="0.5"/><rect x="21" y="124.2" width="11" height="1.6" fill="#ce9178" fill-opacity="1.0"/><rect x="32" y="124.2" width="1" height="1.6" fill="#ce9178" fill-opacity="0.5"/><rect x="33" y="124.2" width="7" height="1.6" fill="#ce9178" fill-opacity="1.0"/><rect x="40" y="124.2" width="1" height="1.6" fill="#ce9178" fill-opacity="0.5"/><rect x="41" y="124.2" width="1" height="1.6" fill="#ce9178" fill-opacity="1.0"/><rect x="42" y="124.2" width="1" height="1.6" fill="#ce9178" fill-opacity="0.5"/><rect x="43" y="124.2" width="3" height="1.6" fill="#ce9178" fill-opacity="1.0"/><rect x="46" y="124.2" width="1" height="1.6" fill="#ce9178" fill-opacity="0.5"/><rect x="47" y="124.2" width="1" height="1.6" fill="#d4d4d4" fill-opacity="0.5"/><rect x="4" y="126.2" width="1" height="1.6" fill="#179fff" fill-opacity="0.5"/><rect x="4" y="130.2" width="6" height="1.6" fill="#c586c0" fill-opacity="1.0"/><rect x="11" y="130.2" width="6" height="1.6" fill="#dcdcaa" fill-opacity="1.0"/><rect x="17" y="130.2" width="1" height="1.6" fill="#ffd700" fill-opacity="0.5"/><rect x="18" y="130.2" width="7" height="1.6" fill="#9cdcfe" fill-opacity="1.0"/><rect x="25" y="130.2" width="1" height="1.6" fill="#d4d4d4" fill-opacity="0.5"/><rect x="27" y="130.2" width="1" height="1.6" fill="#ce9178" fill-opacity="0.5"/><rect x="28" y="130.2" width="4" height="1.6" fill="#ce9178" fill-opacity="1.0"/><rect x="32" y="130.2" width="1" height="1.6" fill="#ce9178" fill-opacity="0.5"/><rect x="33" y="130.2" width="5" height="1.6" fill="#ce9178" fill-opacity="1.0"/><rect x="38" y="130.2" width="1" height="1.6" fill="#ce9178" fill-opacity="0.5"/><rect x="39" y="130.2" width="11" height="1.6" fill="#ce9178" fill-opacity="1.0"/><rect x="50" y="130.2" width="1" height="1.6" fill="#ce9178" fill-opacity="0.5"/><rect x="51" y="130.2" width="4" height="1.6" fill="#ce9178" fill-opacity="1.0"/><rect x="55" y="130.2" width="1" height="1.6" fill="#ce9178" fill-opacity="0.5"/><rect x="56" y="130.2" width="1" height="1.6" fill="#d4d4d4" fill-opacity="0.5"/><rect x="58" y="130.2" width="1" height="1.6" fill="#da70d6" fill-opacity="0.5"/><rect x="8" y="132.2" width="1" height="1.6" fill="#ce9178" fill-opacity="0.5"/><rect x="9" y="132.2" width="6" height="1.6" fill="#ce9178" fill-opacity="1.0"/><rect x="15" y="132.2" width="1" height="1.6" fill="#ce9178" fill-opacity="0.5"/><rect x="16" y="132.2" width="4" height="1.6" fill="#ce9178" fill-opacity="1.0"/><rect x="20" y="132.2" width="1" height="1.6" fill="#ce9178" fill-opacity="0.5"/><rect x="21" y="132.2" width="1" height="1.6" fill="#d4d4d4" fill-opacity="0.5"/><rect x="23" y="132.2" width="1" height="1.6" fill="#ce9178" fill-opacity="0.5"/><rect x="24" y="132.2" width="11" height="1.6" fill="#ce9178" fill-opacity="1.0"/><rect x="35" y="132.2" width="1" height="1.6" fill="#ce9178" fill-opacity="0.5"/><rect x="36" y="132.2" width="1" height="1.6" fill="#d4d4d4" fill-opacity="0.5"/><rect x="8" y="134.2" width="1" height="1.6" fill="#ce9178" fill-opacity="0.5"/><rect x="9" y="134.2" width="11" height="1.6" fill="#ce9178" fill-opacity="1.0"/><rect x="20" y="134.2" width="1" height="1.6" fill="#ce9178" fill-opacity="0.5"/><rect x="21" y="134.2" width="6" height="1.6" fill="#ce9178" fill-opacity="1.0"/><rect x="27" y="134.2" width="1" height="1.6" fill="#ce9178" fill-opacity="0.5"/><rect x="28" y="134.2" width="1" height="1.6" fill="#d4d4d4" fill-opacity="0.5"/><rect x="30" y="134.2" width="11" height="1.6" fill="#9cdcfe" fill-opacity="1.0"/><rect x="41" y="134.2" width="1" height="1.6" fill="#9cdcfe" fill-opacity="0.5"/><rect x="42" y="134.2" width="6" height="1.6" fill="#9cdcfe" fill-opacity="1.0"/><rect x="48" y="134.2" width="1" height="1.6" fill="#d4d4d4" fill-opacity="0.5"/><rect x="4" y="136.2" width="1" height="1.6" fill="#179fff" fill-opacity="0.5"/><rect x="5" y="136.2" width="1" height="1.6" fill="#da70d6" fill-opacity="0.5"/><rect x="0" y="140.2" width="3" height="1.6" fill="#569cd6" fill-opacity="1.0"/><rect x="4" y="140.2" width="3" height="1.6" fill="#dcdcaa" fill-opacity="1.0"/><rect x="7" y="140.2" width="1" height="1.6" fill="#dcdcaa" fill-opacity="0.5"/><rect x="8" y="140.2" width="5" height="1.6" fill="#dcdcaa" fill-opacity="1.0"/><rect x="13" y="140.2" width="1" height="1.6" fill="#ffd700" fill-opacity="0.5"/><rect x="14" y="140.2" width="7" height="1.6" fill="#9cdcfe" fill-opacity="1.0"/><rect x="21" y="140.2" width="1" height="1.6" fill="#ffd700" fill-opacity="0.5"/><rect x="22" y="140.2" width="1" height="1.6" fill="#d4d4d4" fill-opacity="0.5"/><rect x="4" y="142.2" width="3" height="1.6" fill="#9cdcfe" fill-opacity="1.0"/><rect x="7" y="142.2" width="1" height="1.6" fill="#9cdcfe" fill-opacity="0.5"/><rect x="8" y="142.2" width="5" height="1.6" fill="#9cdcfe" fill-opacity="1.0"/><rect x="13" y="142.2" width="1" height="1.6" fill="#9cdcfe" fill-opacity="0.5"/><rect x="14" y="142.2" width="6" height="1.6" fill="#9cdcfe" fill-opacity="1.0"/><rect x="21" y="142.2" width="1" height="1.6" fill="#d4d4d4" fill-opacity="0.5"/><rect x="23" y="142.2" width="1" height="1.6" fill="#ffd700" fill-opacity="0.5"/><rect x="8" y="144.2" width="1" height="1.6" fill="#ce9178" fill-opacity="0.5"/><rect x="9" y="144.2" width="4" height="1.6" fill="#ce9178" fill-opacity="1.0"/><rect x="13" y="144.2" width="1" height="1.6" fill="#ce9178" fill-opacity="0.5"/><rect x="14" y="144.2" width="6" height="1.6" fill="#ce9178" fill-opacity="1.0"/><rect x="20" y="144.2" width="1" height="1.6" fill="#ce9178" fill-opacity="0.5"/><rect x="21" y="144.2" width="3" height="1.6" fill="#ce9178" fill-opacity="1.0"/><rect x="24" y="144.2" width="1" height="1.6" fill="#ce9178" fill-opacity="0.5"/><rect x="25" y="144.2" width="5" height="1.6" fill="#ce9178" fill-opacity="1.0"/><rect x="30" y="144.2" width="1" height="1.6" fill="#ce9178" fill-opacity="0.5"/><rect x="31" y="144.2" width="1" height="1.6" fill="#ce9178" fill-opacity="1.0"/><rect x="32" y="144.2" width="1" height="1.6" fill="#ce9178" fill-opacity="0.5"/><rect x="33" y="144.2" width="3" height="1.6" fill="#ce9178" fill-opacity="1.0"/><rect x="36" y="144.2" width="1" height="1.6" fill="#ce9178" fill-opacity="0.5"/><rect x="37" y="144.2" width="1" height="1.6" fill="#d4d4d4" fill-opacity="0.5"/><rect x="8" y="146.2" width="1" height="1.6" fill="#ce9178" fill-opacity="0.5"/><rect x="9" y="146.2" width="4" height="1.6" fill="#ce9178" fill-opacity="1.0"/><rect x="13" y="146.2" width="1" height="1.6" fill="#ce9178" fill-opacity="0.5"/><rect x="14" y="146.2" width="6" height="1.6" fill="#ce9178" fill-opacity="1.0"/><rect x="20" y="146.2" width="1" height="1.6" fill="#ce9178" fill-opacity="0.5"/><rect x="21" y="146.2" width="3" height="1.6" fill="#ce9178" fill-opacity="1.0"/><rect x="24" y="146.2" width="1" height="1.6" fill="#ce9178" fill-opacity="0.5"/><rect x="25" y="146.2" width="5" height="1.6" fill="#ce9178" fill-opacity="1.0"/><rect x="30" y="146.2" width="1" height="1.6" fill="#ce9178" fill-opacity="0.5"/><rect x="31" y="146.2" width="1" height="1.6" fill="#ce9178" fill-opacity="1.0"/><rect x="32" y="146.2" width="1" height="1.6" fill="#ce9178" fill-opacity="0.5"/><rect x="33" y="146.2" width="3" height="1.6" fill="#ce9178" fill-opacity="1.0"/><rect x="36" y="146.2" width="1" height="1.6" fill="#ce9178" fill-opacity="0.5"/><rect x="37" y="146.2" width="1" height="1.6" fill="#d4d4d4" fill-opacity="0.5"/><rect x="8" y="148.2" width="1" height="1.6" fill="#ce9178" fill-opacity="0.5"/><rect x="9" y="148.2" width="4" height="1.6" fill="#ce9178" fill-opacity="1.0"/><rect x="13" y="148.2" width="1" height="1.6" fill="#ce9178" fill-opacity="0.5"/><rect x="14" y="148.2" width="6" height="1.6" fill="#ce9178" fill-opacity="1.0"/><rect x="20" y="148.2" width="1" height="1.6" fill="#ce9178" fill-opacity="0.5"/><rect x="21" y="148.2" width="3" height="1.6" fill="#ce9178" fill-opacity="1.0"/><rect x="24" y="148.2" width="1" height="1.6" fill="#ce9178" fill-opacity="0.5"/><rect x="25" y="148.2" width="5" height="1.6" fill="#ce9178" fill-opacity="1.0"/><rect x="30" y="148.2" width="1" height="1.6" fill="#ce9178" fill-opacity="0.5"/><rect x="31" y="148.2" width="1" height="1.6" fill="#ce9178" fill-opacity="1.0"/><rect x="32" y="148.2" width="1" height="1.6" fill="#ce9178" fill-opacity="0.5"/><rect x="33" y="148.2" width="3" height="1.6" fill="#ce9178" fill-opacity="1.0"/><rect x="36" y="148.2" width="1" height="1.6" fill="#ce9178" fill-opacity="0.5"/><rect x="37" y="148.2" width="1" height="1.6" fill="#d4d4d4" fill-opacity="0.5"/><rect x="8" y="150.2" width="1" height="1.6" fill="#ce9178" fill-opacity="0.5"/><rect x="9" y="150.2" width="4" height="1.6" fill="#ce9178" fill-opacity="1.0"/><rect x="13" y="150.2" width="1" height="1.6" fill="#ce9178" fill-opacity="0.5"/><rect x="14" y="150.2" width="6" height="1.6" fill="#ce9178" fill-opacity="1.0"/><rect x="20" y="150.2" width="1" height="1.6" fill="#ce9178" fill-opacity="0.5"/><rect x="21" y="150.2" width="3" height="1.6" fill="#ce9178" fill-opacity="1.0"/><rect x="24" y="150.2" width="1" height="1.6" fill="#ce9178" fill-opacity="0.5"/><rect x="25" y="150.2" width="5" height="1.6" fill="#ce9178" fill-opacity="1.0"/><rect x="30" y="150.2" width="1" height="1.6" fill="#ce9178" fill-opacity="0.5"/><rect x="31" y="150.2" width="1" height="1.6" fill="#ce9178" fill-opacity="1.0"/><rect x="32" y="150.2" width="1" height="1.6" fill="#ce9178" fill-opacity="0.5"/><rect x="33" y="150.2" width="3" height="1.6" fill="#ce9178" fill-opacity="1.0"/><rect x="36" y="150.2" width="1" height="1.6" fill="#ce9178" fill-opacity="0.5"/><rect x="37" y="150.2" width="1" height="1.6" fill="#d4d4d4" fill-opacity="0.5"/><rect x="4" y="152.2" width="1" height="1.6" fill="#179fff" fill-opacity="0.5"/><rect x="4" y="156.2" width="6" height="1.6" fill="#c586c0" fill-opacity="1.0"/><rect x="11" y="156.2" width="6" height="1.6" fill="#dcdcaa" fill-opacity="1.0"/><rect x="17" y="156.2" width="1" height="1.6" fill="#ffd700" fill-opacity="0.5"/><rect x="18" y="156.2" width="7" height="1.6" fill="#9cdcfe" fill-opacity="1.0"/><rect x="25" y="156.2" width="1" height="1.6" fill="#d4d4d4" fill-opacity="0.5"/><rect x="27" y="156.2" width="1" height="1.6" fill="#ce9178" fill-opacity="0.5"/><rect x="28" y="156.2" width="4" height="1.6" fill="#ce9178" fill-opacity="1.0"/><rect x="32" y="156.2" width="1" height="1.6" fill="#ce9178" fill-opacity="0.5"/><rect x="33" y="156.2" width="5" height="1.6" fill="#ce9178" fill-opacity="1.0"/><rect x="38" y="156.2" width="1" height="1.6" fill="#ce9178" fill-opacity="0.5"/><rect x="39" y="156.2" width="3" height="1.6" fill="#ce9178" fill-opacity="1.0"/><rect x="42" y="156.2" width="1" height="1.6" fill="#ce9178" fill-opacity="0.5"/><rect x="43" y="156.2" width="5" height="1.6" fill="#ce9178" fill-opacity="1.0"/><rect x="48" y="156.2" width="1" height="1.6" fill="#ce9178" fill-opacity="0.5"/><rect x="49" y="156.2" width="4" height="1.6" fill="#ce9178" fill-opacity="1.0"/><rect x="53" y="156.2" width="1" height="1.6" fill="#ce9178" fill-opacity="0.5"/><rect x="54" y="156.2" width="1" height="1.6" fill="#d4d4d4" fill-opacity="0.5"/><rect x="56" y="156.2" width="1" height="1.6" fill="#da70d6" fill-opacity="0.5"/><rect x="8" y="158.2" width="1" height="1.6" fill="#ce9178" fill-opacity="0.5"/><rect x="9" y="158.2" width="6" height="1.6" fill="#ce9178" fill-opacity="1.0"/><rect x="15" y="158.2" width="1" height="1.6" fill="#ce9178" fill-opacity="0.5"/><rect x="16" y="158.2" width="4" height="1.6" fill="#ce9178" fill-opacity="1.0"/><rect x="20" y="158.2" width="1" height="1.6" fill="#ce9178" fill-opacity="0.5"/><rect x="21" y="158.2" width="1" height="1.6" fill="#d4d4d4" fill-opacity="0.5"/><rect x="23" y="158.2" width="1" height="1.6" fill="#ce9178" fill-opacity="0.5"/><rect x="24" y="158.2" width="3" height="1.6" fill="#ce9178" fill-opacity="1.0"/><rect x="27" y="158.2" width="1" height="1.6" fill="#ce9178" fill-opacity="0.5"/><rect x="28" y="158.2" width="5" height="1.6" fill="#ce9178" fill-opacity="1.0"/><rect x="33" y="158.2" width="1" height="1.6" fill="#ce9178" fill-opacity="0.5"/><rect x="34" y="158.2" width="1" height="1.6" fill="#d4d4d4" fill-opacity="0.5"/><rect x="8" y="160.2" width="1" height="1.6" fill="#ce9178" fill-opacity="0.5"/><rect x="9" y="160.2" width="3" height="1.6" fill="#ce9178" fill-opacity="1.0"/><rect x="12" y="160.2" width="1" height="1.6" fill="#ce9178" fill-opacity="0.5"/><rect x="13" y="160.2" width="5" height="1.6" fill="#ce9178" fill-opacity="1.0"/><rect x="18" y="160.2" width="1" height="1.6" fill="#ce9178" fill-opacity="0.5"/><rect x="19" y="160.2" width="6" height="1.6" fill="#ce9178" fill-opacity="1.0"/><rect x="25" y="160.2" width="1" height="1.6" fill="#ce9178" fill-opacity="0.5"/><rect x="26" y="160.2" width="1" height="1.6" fill="#d4d4d4" fill-opacity="0.5"/><rect x="28" y="160.2" width="3" height="1.6" fill="#9cdcfe" fill-opacity="1.0"/><rect x="31" y="160.2" width="1" height="1.6" fill="#9cdcfe" fill-opacity="0.5"/><rect x="32" y="160.2" width="5" height="1.6" fill="#9cdcfe" fill-opacity="1.0"/><rect x="37" y="160.2" width="1" height="1.6" fill="#9cdcfe" fill-opacity="0.5"/><rect x="38" y="160.2" width="6" height="1.6" fill="#9cdcfe" fill-opacity="1.0"/><rect x="44" y="160.2" width="1" height="1.6" fill="#d4d4d4" fill-opacity="0.5"/><rect x="4" y="162.2" width="1" height="1.6" fill="#179fff" fill-opacity="0.5"/><rect x="5" y="162.2" width="1" height="1.6" fill="#da70d6" fill-opacity="0.5"/><rect x="0" y="166.2" width="3" height="1.6" fill="#569cd6" fill-opacity="1.0"/><rect x="4" y="166.2" width="9" height="1.6" fill="#dcdcaa" fill-opacity="1.0"/><rect x="13" y="166.2" width="1" height="1.6" fill="#ffd700" fill-opacity="0.5"/><rect x="14" y="166.2" width="7" height="1.6" fill="#9cdcfe" fill-opacity="1.0"/><rect x="21" y="166.2" width="1" height="1.6" fill="#ffd700" fill-opacity="0.5"/><rect x="22" y="166.2" width="1" height="1.6" fill="#d4d4d4" fill-opacity="0.5"/><rect x="4" y="168.2" width="9" height="1.6" fill="#9cdcfe" fill-opacity="1.0"/><rect x="13" y="168.2" width="1" height="1.6" fill="#9cdcfe" fill-opacity="0.5"/><rect x="14" y="168.2" width="6" height="1.6" fill="#9cdcfe" fill-opacity="1.0"/><rect x="21" y="168.2" width="1" height="1.6" fill="#d4d4d4" fill-opacity="0.5"/><rect x="23" y="168.2" width="1" height="1.6" fill="#ffd700" fill-opacity="0.5"/><rect x="8" y="170.2" width="1" height="1.6" fill="#ce9178" fill-opacity="0.5"/><rect x="9" y="170.2" width="4" height="1.6" fill="#ce9178" fill-opacity="1.0"/><rect x="13" y="170.2" width="1" height="1.6" fill="#ce9178" fill-opacity="0.5"/><rect x="14" y="170.2" width="6" height="1.6" fill="#ce9178" fill-opacity="1.0"/><rect x="20" y="170.2" width="1" height="1.6" fill="#ce9178" fill-opacity="0.5"/><rect x="21" y="170.2" width="9" height="1.6" fill="#ce9178" fill-opacity="1.0"/><rect x="30" y="170.2" width="1" height="1.6" fill="#ce9178" fill-opacity="0.5"/><rect x="31" y="170.2" width="1" height="1.6" fill="#ce9178" fill-opacity="1.0"/><rect x="32" y="170.2" width="1" height="1.6" fill="#ce9178" fill-opacity="0.5"/><rect x="33" y="170.2" width="3" height="1.6" fill="#ce9178" fill-opacity="1.0"/><rect x="36" y="170.2" width="1" height="1.6" fill="#ce9178" fill-opacity="0.5"/><rect x="37" y="170.2" width="1" height="1.6" fill="#d4d4d4" fill-opacity="0.5"/><rect x="8" y="172.2" width="1" height="1.6" fill="#ce9178" fill-opacity="0.5"/><rect x="9" y="172.2" width="4" height="1.6" fill="#ce9178" fill-opacity="1.0"/><rect x="13" y="172.2" width="1" height="1.6" fill="#ce9178" fill-opacity="0.5"/><rect x="14" y="172.2" width="6" height="1.6" fill="#ce9178" fill-opacity="1.0"/><rect x="20" y="172.2" width="1" height="1.6" fill="#ce9178" fill-opacity="0.5"/><rect x="21" y="172.2" width="9" height="1.6" fill="#ce9178" fill-opacity="1.0"/><rect x="30" y="172.2" width="1" height="1.6" fill="#ce9178" fill-opacity="0.5"/><rect x="31" y="172.2" width="1" height="1.6" fill="#ce9178" fill-opacity="1.0"/><rect x="32" y="172.2" width="1" height="1.6" fill="#ce9178" fill-opacity="0.5"/><rect x="33" y="172.2" width="3" height="1.6" fill="#ce9178" fill-opacity="1.0"/><rect x="36" y="172.2" width="1" height="1.6" fill="#ce9178" fill-opacity="0.5"/><rect x="37" y="172.2" width="1" height="1.6" fill="#d4d4d4" fill-opacity="0.5"/><rect x="8" y="174.2" width="1" height="1.6" fill="#ce9178" fill-opacity="0.5"/><rect x="9" y="174.2" width="4" height="1.6" fill="#ce9178" fill-opacity="1.0"/><rect x="13" y="174.2" width="1" height="1.6" fill="#ce9178" fill-opacity="0.5"/><rect x="14" y="174.2" width="6" height="1.6" fill="#ce9178" fill-opacity="1.0"/><rect x="20" y="174.2" width="1" height="1.6" fill="#ce9178" fill-opacity="0.5"/><rect x="21" y="174.2" width="9" height="1.6" fill="#ce9178" fill-opacity="1.0"/><rect x="30" y="174.2" width="1" height="1.6" fill="#ce9178" fill-opacity="0.5"/><rect x="31" y="174.2" width="1" height="1.6" fill="#ce9178" fill-opacity="1.0"/><rect x="32" y="174.2" width="1" height="1.6" fill="#ce9178" fill-opacity="0.5"/><rect x="33" y="174.2" width="3" height="1.6" fill="#ce9178" fill-opacity="1.0"/><rect x="36" y="174.2" width="1" height="1.6" fill="#ce9178" fill-opacity="0.5"/><rect x="37" y="174.2" width="1" height="1.6" fill="#d4d4d4" fill-opacity="0.5"/><rect x="4" y="176.2" width="1" height="1.6" fill="#179fff" fill-opacity="0.5"/><rect x="4" y="180.2" width="6" height="1.6" fill="#c586c0" fill-opacity="1.0"/><rect x="11" y="180.2" width="6" height="1.6" fill="#dcdcaa" fill-opacity="1.0"/><rect x="17" y="180.2" width="1" height="1.6" fill="#ffd700" fill-opacity="0.5"/><rect x="18" y="180.2" width="7" height="1.6" fill="#9cdcfe" fill-opacity="1.0"/><rect x="25" y="180.2" width="1" height="1.6" fill="#d4d4d4" fill-opacity="0.5"/><rect x="27" y="180.2" width="1" height="1.6" fill="#ce9178" fill-opacity="0.5"/><rect x="28" y="180.2" width="4" height="1.6" fill="#ce9178" fill-opacity="1.0"/><rect x="32" y="180.2" width="1" height="1.6" fill="#ce9178" fill-opacity="0.5"/><rect x="33" y="180.2" width="5" height="1.6" fill="#ce9178" fill-opacity="1.0"/><rect x="38" y="180.2" width="1" height="1.6" fill="#ce9178" fill-opacity="0.5"/><rect x="39" y="180.2" width="9" height="1.6" fill="#ce9178" fill-opacity="1.0"/><rect x="48" y="180.2" width="1" height="1.6" fill="#ce9178" fill-opacity="0.5"/><rect x="49" y="180.2" width="4" height="1.6" fill="#ce9178" fill-opacity="1.0"/><rect x="53" y="180.2" width="1" height="1.6" fill="#ce9178" fill-opacity="0.5"/><rect x="54" y="180.2" width="1" height="1.6" fill="#d4d4d4" fill-opacity="0.5"/><rect x="56" y="180.2" width="1" height="1.6" fill="#da70d6" fill-opacity="0.5"/><rect x="8" y="182.2" width="1" height="1.6" fill="#ce9178" fill-opacity="0.5"/><rect x="9" y="182.2" width="6" height="1.6" fill="#ce9178" fill-opacity="1.0"/><rect x="15" y="182.2" width="1" height="1.6" fill="#ce9178" fill-opacity="0.5"/><rect x="16" y="182.2" width="4" height="1.6" fill="#ce9178" fill-opacity="1.0"/><rect x="20" y="182.2" width="1" height="1.6" fill="#ce9178" fill-opacity="0.5"/><rect x="21" y="182.2" width="1" height="1.6" fill="#d4d4d4" fill-opacity="0.5"/><rect x="23" y="182.2" width="1" height="1.6" fill="#ce9178" fill-opacity="0.5"/><rect x="24" y="182.2" width="9" height="1.6" fill="#ce9178" fill-opacity="1.0"/><rect x="33" y="182.2" width="1" height="1.6" fill="#ce9178" fill-opacity="0.5"/><rect x="34" y="182.2" width="1" height="1.6" fill="#d4d4d4" fill-opacity="0.5"/><rect x="8" y="184.2" width="1" height="1.6" fill="#ce9178" fill-opacity="0.5"/><rect x="9" y="184.2" width="9" height="1.6" fill="#ce9178" fill-opacity="1.0"/><rect x="18" y="184.2" width="1" height="1.6" fill="#ce9178" fill-opacity="0.5"/><rect x="19" y="184.2" width="6" height="1.6" fill="#ce9178" fill-opacity="1.0"/><rect x="25" y="184.2" width="1" height="1.6" fill="#ce9178" fill-opacity="0.5"/><rect x="26" y="184.2" width="1" height="1.6" fill="#d4d4d4" fill-opacity="0.5"/><rect x="28" y="184.2" width="9" height="1.6" fill="#9cdcfe" fill-opacity="1.0"/><rect x="37" y="184.2" width="1" height="1.6" fill="#9cdcfe" fill-opacity="0.5"/><rect x="38" y="184.2" width="6" height="1.6" fill="#9cdcfe" fill-opacity="1.0"/><rect x="44" y="184.2" width="1" height="1.6" fill="#d4d4d4" fill-opacity="0.5"/><rect x="4" y="186.2" width="1" height="1.6" fill="#179fff" fill-opacity="0.5"/><rect x="5" y="186.2" width="1" height="1.6" fill="#da70d6" fill-opacity="0.5"/><rect x="0" y="190.2" width="3" height="1.6" fill="#569cd6" fill-opacity="1.0"/><rect x="4" y="190.2" width="6" height="1.6" fill="#dcdcaa" fill-opacity="1.0"/><rect x="10" y="190.2" width="1" height="1.6" fill="#ffd700" fill-opacity="0.5"/><rect x="11" y="190.2" width="7" height="1.6" fill="#9cdcfe" fill-opacity="1.0"/><rect x="18" y="190.2" width="1" height="1.6" fill="#ffd700" fill-opacity="0.5"/><rect x="19" y="190.2" width="1" height="1.6" fill="#d4d4d4" fill-opacity="0.5"/><rect x="4" y="192.2" width="6" height="1.6" fill="#c586c0" fill-opacity="1.0"/><rect x="11" y="192.2" width="6" height="1.6" fill="#dcdcaa" fill-opacity="1.0"/><rect x="17" y="192.2" width="1" height="1.6" fill="#ffd700" fill-opacity="0.5"/><rect x="18" y="192.2" width="7" height="1.6" fill="#9cdcfe" fill-opacity="1.0"/><rect x="25" y="192.2" width="1" height="1.6" fill="#d4d4d4" fill-opacity="0.5"/><rect x="27" y="192.2" width="1" height="1.6" fill="#ce9178" fill-opacity="0.5"/><rect x="28" y="192.2" width="4" height="1.6" fill="#ce9178" fill-opacity="1.0"/><rect x="32" y="192.2" width="1" height="1.6" fill="#ce9178" fill-opacity="0.5"/><rect x="33" y="192.2" width="5" height="1.6" fill="#ce9178" fill-opacity="1.0"/><rect x="38" y="192.2" width="1" height="1.6" fill="#ce9178" fill-opacity="0.5"/><rect x="39" y="192.2" width="4" height="1.6" fill="#ce9178" fill-opacity="1.0"/><rect x="43" y="192.2" width="1" height="1.6" fill="#ce9178" fill-opacity="0.5"/><rect x="44" y="192.2" width="2" height="1.6" fill="#ce9178" fill-opacity="1.0"/><rect x="46" y="192.2" width="1" height="1.6" fill="#ce9178" fill-opacity="0.5"/><rect x="47" y="192.2" width="4" height="1.6" fill="#ce9178" fill-opacity="1.0"/><rect x="51" y="192.2" width="1" height="1.6" fill="#ce9178" fill-opacity="0.5"/><rect x="52" y="192.2" width="1" height="1.6" fill="#d4d4d4" fill-opacity="0.5"/><rect x="54" y="192.2" width="1" height="1.6" fill="#da70d6" fill-opacity="0.5"/><rect x="56" y="192.2" width="1" height="1.6" fill="#ce9178" fill-opacity="0.5"/><rect x="57" y="192.2" width="6" height="1.6" fill="#ce9178" fill-opacity="1.0"/><rect x="63" y="192.2" width="1" height="1.6" fill="#ce9178" fill-opacity="0.5"/><rect x="64" y="192.2" width="4" height="1.6" fill="#ce9178" fill-opacity="1.0"/><rect x="68" y="192.2" width="1" height="1.6" fill="#ce9178" fill-opacity="0.5"/><rect x="69" y="192.2" width="1" height="1.6" fill="#d4d4d4" fill-opacity="0.5"/><rect x="71" y="192.2" width="1" height="1.6" fill="#ce9178" fill-opacity="0.5"/><rect x="72" y="192.2" width="4" height="1.6" fill="#ce9178" fill-opacity="1.0"/><rect x="76" y="192.2" width="1" height="1.6" fill="#ce9178" fill-opacity="0.5"/><rect x="77" y="192.2" width="2" height="1.6" fill="#ce9178" fill-opacity="1.0"/><rect x="79" y="192.2" width="1" height="1.6" fill="#ce9178" fill-opacity="0.5"/><rect x="81" y="192.2" width="1" height="1.6" fill="#da70d6" fill-opacity="0.5"/><rect x="82" y="192.2" width="1" height="1.6" fill="#ffd700" fill-opacity="0.5"/><rect x="0" y="196.2" width="3" height="1.6" fill="#569cd6" fill-opacity="1.0"/><rect x="4" y="196.2" width="4" height="1.6" fill="#dcdcaa" fill-opacity="1.0"/><rect x="8" y="196.2" width="1" height="1.6" fill="#ffd700" fill-opacity="0.5"/><rect x="9" y="196.2" width="7" height="1.6" fill="#9cdcfe" fill-opacity="1.0"/><rect x="16" y="196.2" width="1" height="1.6" fill="#ffd700" fill-opacity="0.5"/><rect x="17" y="196.2" width="1" height="1.6" fill="#d4d4d4" fill-opacity="0.5"/><rect x="4" y="198.2" width="6" height="1.6" fill="#c586c0" fill-opacity="1.0"/><rect x="11" y="198.2" width="6" height="1.6" fill="#dcdcaa" fill-opacity="1.0"/><rect x="17" y="198.2" width="1" height="1.6" fill="#ffd700" fill-opacity="0.5"/><rect x="18" y="198.2" width="7" height="1.6" fill="#9cdcfe" fill-opacity="1.0"/><rect x="25" y="198.2" width="1" height="1.6" fill="#d4d4d4" fill-opacity="0.5"/><rect x="27" y="198.2" width="1" height="1.6" fill="#ce9178" fill-opacity="0.5"/><rect x="28" y="198.2" width="4" height="1.6" fill="#ce9178" fill-opacity="1.0"/><rect x="32" y="198.2" width="1" height="1.6" fill="#ce9178" fill-opacity="0.5"/><rect x="33" y="198.2" width="5" height="1.6" fill="#ce9178" fill-opacity="1.0"/><rect x="38" y="198.2" width="1" height="1.6" fill="#ce9178" fill-opacity="0.5"/><rect x="39" y="198.2" width="4" height="1.6" fill="#ce9178" fill-opacity="1.0"/><rect x="43" y="198.2" width="1" height="1.6" fill="#ce9178" fill-opacity="0.5"/><rect x="44" y="198.2" width="4" height="1.6" fill="#ce9178" fill-opacity="1.0"/><rect x="48" y="198.2" width="1" height="1.6" fill="#ce9178" fill-opacity="0.5"/><rect x="49" y="198.2" width="1" height="1.6" fill="#d4d4d4" fill-opacity="0.5"/><rect x="51" y="198.2" width="1" height="1.6" fill="#da70d6" fill-opacity="0.5"/><rect x="8" y="200.2" width="1" height="1.6" fill="#ce9178" fill-opacity="0.5"/><rect x="9" y="200.2" width="6" height="1.6" fill="#ce9178" fill-opacity="1.0"/><rect x="15" y="200.2" width="1" height="1.6" fill="#ce9178" fill-opacity="0.5"/><rect x="16" y="200.2" width="4" height="1.6" fill="#ce9178" fill-opacity="1.0"/><rect x="20" y="200.2" width="1" height="1.6" fill="#ce9178" fill-opacity="0.5"/><rect x="21" y="200.2" width="1" height="1.6" fill="#d4d4d4" fill-opacity="0.5"/><rect x="23" y="200.2" width="1" height="1.6" fill="#ce9178" fill-opacity="0.5"/><rect x="24" y="200.2" width="4" height="1.6" fill="#ce9178" fill-opacity="1.0"/><rect x="28" y="200.2" width="1" height="1.6" fill="#ce9178" fill-opacity="0.5"/><rect x="4" y="202.2" width="1" height="1.6" fill="#179fff" fill-opacity="0.5"/><rect x="5" y="202.2" width="1" height="1.6" fill="#da70d6" fill-opacity="0.5"/><rect x="0" y="206.2" width="3" height="1.6" fill="#569cd6" fill-opacity="1.0"/><rect x="4" y="206.2" width="6" height="1.6" fill="#dcdcaa" fill-opacity="1.0"/><rect x="10" y="206.2" width="1" height="1.6" fill="#ffd700" fill-opacity="0.5"/><rect x="11" y="206.2" width="7" height="1.6" fill="#9cdcfe" fill-opacity="1.0"/><rect x="18" y="206.2" width="1" height="1.6" fill="#ffd700" fill-opacity="0.5"/><rect x="19" y="206.2" width="1" height="1.6" fill="#d4d4d4" fill-opacity="0.5"/><rect x="4" y="208.2" width="6" height="1.6" fill="#c586c0" fill-opacity="1.0"/><rect x="11" y="208.2" width="6" height="1.6" fill="#dcdcaa" fill-opacity="1.0"/><rect x="17" y="208.2" width="1" height="1.6" fill="#ffd700" fill-opacity="0.5"/><rect x="18" y="208.2" width="7" height="1.6" fill="#9cdcfe" fill-opacity="1.0"/><rect x="25" y="208.2" width="1" height="1.6" fill="#d4d4d4" fill-opacity="0.5"/><rect x="27" y="208.2" width="1" height="1.6" fill="#ce9178" fill-opacity="0.5"/><rect x="28" y="208.2" width="4" height="1.6" fill="#ce9178" fill-opacity="1.0"/><rect x="32" y="208.2" width="1" height="1.6" fill="#ce9178" fill-opacity="0.5"/><rect x="33" y="208.2" width="5" height="1.6" fill="#ce9178" fill-opacity="1.0"/><rect x="38" y="208.2" width="1" height="1.6" fill="#ce9178" fill-opacity="0.5"/><rect x="39" y="208.2" width="6" height="1.6" fill="#ce9178" fill-opacity="1.0"/><rect x="45" y="208.2" width="1" height="1.6" fill="#ce9178" fill-opacity="0.5"/><rect x="46" y="208.2" width="4" height="1.6" fill="#ce9178" fill-opacity="1.0"/><rect x="50" y="208.2" width="1" height="1.6" fill="#ce9178" fill-opacity="0.5"/><rect x="51" y="208.2" width="1" height="1.6" fill="#d4d4d4" fill-opacity="0.5"/><rect x="53" y="208.2" width="1" height="1.6" fill="#da70d6" fill-opacity="0.5"/><rect x="8" y="210.2" width="1" height="1.6" fill="#ce9178" fill-opacity="0.5"/><rect x="9" y="210.2" width="6" height="1.6" fill="#ce9178" fill-opacity="1.0"/><rect x="15" y="210.2" width="1" height="1.6" fill="#ce9178" fill-opacity="0.5"/><rect x="16" y="210.2" width="4" height="1.6" fill="#ce9178" fill-opacity="1.0"/><rect x="20" y="210.2" width="1" height="1.6" fill="#ce9178" fill-opacity="0.5"/><rect x="21" y="210.2" width="1" height="1.6" fill="#d4d4d4" fill-opacity="0.5"/><rect x="23" y="210.2" width="1" height="1.6" fill="#ce9178" fill-opacity="0.5"/><rect x="24" y="210.2" width="6" height="1.6" fill="#ce9178" fill-opacity="1.0"/><rect x="30" y="210.2" width="1" height="1.6" fill="#ce9178" fill-opacity="0.5"/><rect x="4" y="212.2" width="1" height="1.6" fill="#179fff" fill-opacity="0.5"/><rect x="5" y="212.2" width="1" height="1.6" fill="#da70d6" fill-opacity="0.5"/><rect x="0" y="216.2" width="3" height="1.6" fill="#569cd6" fill-opacity="1.0"/><rect x="4" y="216.2" width="7" height="1.6" fill="#dcdcaa" fill-opacity="1.0"/><rect x="11" y="216.2" width="1" height="1.6" fill="#dcdcaa" fill-opacity="0.5"/><rect x="12" y="216.2" width="3" height="1.6" fill="#dcdcaa" fill-opacity="1.0"/><rect x="15" y="216.2" width="1" height="1.6" fill="#ffd700" fill-opacity="0.5"/><rect x="16" y="216.2" width="7" height="1.6" fill="#9cdcfe" fill-opacity="1.0"/><rect x="23" y="216.2" width="1" height="1.6" fill="#ffd700" fill-opacity="0.5"/><rect x="24" y="216.2" width="1" height="1.6" fill="#d4d4d4" fill-opacity="0.5"/><rect x="4" y="218.2" width="6" height="1.6" fill="#c586c0" fill-opacity="1.0"/><rect x="11" y="218.2" width="6" height="1.6" fill="#dcdcaa" fill-opacity="1.0"/><rect x="17" y="218.2" width="1" height="1.6" fill="#ffd700" fill-opacity="0.5"/><rect x="18" y="218.2" width="7" height="1.6" fill="#9cdcfe" fill-opacity="1.0"/><rect x="25" y="218.2" width="1" height="1.6" fill="#d4d4d4" fill-opacity="0.5"/><rect x="27" y="218.2" width="1" height="1.6" fill="#ce9178" fill-opacity="0.5"/><rect x="28" y="218.2" width="4" height="1.6" fill="#ce9178" fill-opacity="1.0"/><rect x="32" y="218.2" width="1" height="1.6" fill="#ce9178" fill-opacity="0.5"/><rect x="33" y="218.2" width="5" height="1.6" fill="#ce9178" fill-opacity="1.0"/><rect x="38" y="218.2" width="1" height="1.6" fill="#ce9178" fill-opacity="0.5"/><rect x="39" y="218.2" width="7" height="1.6" fill="#ce9178" fill-opacity="1.0"/><rect x="46" y="218.2" width="1" height="1.6" fill="#ce9178" fill-opacity="0.5"/><rect x="47" y="218.2" width="3" height="1.6" fill="#ce9178" fill-opacity="1.0"/><rect x="50" y="218.2" width="1" height="1.6" fill="#ce9178" fill-opacity="0.5"/><rect x="51" y="218.2" width="4" height="1.6" fill="#ce9178" fill-opacity="1.0"/><rect x="55" y="218.2" width="1" height="1.6" fill="#ce9178" fill-opacity="0.5"/><rect x="56" y="218.2" width="1" height="1.6" fill="#d4d4d4" fill-opacity="0.5"/><rect x="58" y="218.2" width="1" height="1.6" fill="#da70d6" fill-opacity="0.5"/><rect x="8" y="220.2" width="1" height="1.6" fill="#ce9178" fill-opacity="0.5"/><rect x="9" y="220.2" width="6" height="1.6" fill="#ce9178" fill-opacity="1.0"/><rect x="15" y="220.2" width="1" height="1.6" fill="#ce9178" fill-opacity="0.5"/><rect x="16" y="220.2" width="4" height="1.6" fill="#ce9178" fill-opacity="1.0"/><rect x="20" y="220.2" width="1" height="1.6" fill="#ce9178" fill-opacity="0.5"/><rect x="21" y="220.2" width="1" height="1.6" fill="#d4d4d4" fill-opacity="0.5"/><rect x="23" y="220.2" width="1" height="1.6" fill="#ce9178" fill-opacity="0.5"/><rect x="24" y="220.2" width="7" height="1.6" fill="#ce9178" fill-opacity="1.0"/><rect x="31" y="220.2" width="1" height="1.6" fill="#ce9178" fill-opacity="0.5"/><rect x="32" y="220.2" width="3" height="1.6" fill="#ce9178" fill-opacity="1.0"/><rect x="35" y="220.2" width="1" height="1.6" fill="#ce9178" fill-opacity="0.5"/><rect x="4" y="222.2" width="1" height="1.6" fill="#179fff" fill-opacity="0.5"/><rect x="5" y="222.2" width="1" height="1.6" fill="#da70d6" fill-opacity="0.5"/><rect x="0" y="226.2" width="3" height="1.6" fill="#569cd6" fill-opacity="1.0"/><rect x="4" y="226.2" width="8" height="1.6" fill="#dcdcaa" fill-opacity="1.0"/><rect x="12" y="226.2" width="1" height="1.6" fill="#dcdcaa" fill-opacity="0.5"/><rect x="13" y="226.2" width="5" height="1.6" fill="#dcdcaa" fill-opacity="1.0"/><rect x="18" y="226.2" width="1" height="1.6" fill="#ffd700" fill-opacity="0.5"/><rect x="19" y="226.2" width="7" height="1.6" fill="#9cdcfe" fill-opacity="1.0"/><rect x="26" y="226.2" width="1" height="1.6" fill="#ffd700" fill-opacity="0.5"/><rect x="27" y="226.2" width="1" height="1.6" fill="#d4d4d4" fill-opacity="0.5"/><rect x="4" y="228.2" width="8" height="1.6" fill="#9cdcfe" fill-opacity="1.0"/><rect x="12" y="228.2" width="1" height="1.6" fill="#9cdcfe" fill-opacity="0.5"/><rect x="13" y="228.2" width="5" height="1.6" fill="#9cdcfe" fill-opacity="1.0"/><rect x="18" y="228.2" width="1" height="1.6" fill="#9cdcfe" fill-opacity="0.5"/><rect x="19" y="228.2" width="6" height="1.6" fill="#9cdcfe" fill-opacity="1.0"/><rect x="26" y="228.2" width="1" height="1.6" fill="#d4d4d4" fill-opacity="0.5"/><rect x="28" y="228.2" width="1" height="1.6" fill="#ffd700" fill-opacity="0.5"/><rect x="8" y="230.2" width="1" height="1.6" fill="#ce9178" fill-opacity="0.5"/><rect x="9" y="230.2" width="4" height="1.6" fill="#ce9178" fill-opacity="1.0"/><rect x="13" y="230.2" width="1" height="1.6" fill="#ce9178" fill-opacity="0.5"/><rect x="14" y="230.2" width="6" height="1.6" fill="#ce9178" fill-opacity="1.0"/><rect x="20" y="230.2" width="1" height="1.6" fill="#ce9178" fill-opacity="0.5"/><rect x="21" y="230.2" width="8" height="1.6" fill="#ce9178" fill-opacity="1.0"/><rect x="29" y="230.2" width="1" height="1.6" fill="#ce9178" fill-opacity="0.5"/><rect x="30" y="230.2" width="5" height="1.6" fill="#ce9178" fill-opacity="1.0"/><rect x="35" y="230.2" width="1" height="1.6" fill="#ce9178" fill-opacity="0.5"/><rect x="36" y="230.2" width="1" height="1.6" fill="#ce9178" fill-opacity="1.0"/><rect x="37" y="230.2" width="1" height="1.6" fill="#ce9178" fill-opacity="0.5"/><rect x="38" y="230.2" width="3" height="1.6" fill="#ce9178" fill-opacity="1.0"/><rect x="41" y="230.2" width="1" height="1.6" fill="#ce9178" fill-opacity="0.5"/><rect x="42" y="230.2" width="1" height="1.6" fill="#d4d4d4" fill-opacity="0.5"/><rect x="8" y="232.2" width="1" height="1.6" fill="#ce9178" fill-opacity="0.5"/><rect x="9" y="232.2" width="4" height="1.6" fill="#ce9178" fill-opacity="1.0"/><rect x="13" y="232.2" width="1" height="1.6" fill="#ce9178" fill-opacity="0.5"/><rect x="14" y="232.2" width="6" height="1.6" fill="#ce9178" fill-opacity="1.0"/><rect x="20" y="232.2" width="1" height="1.6" fill="#ce9178" fill-opacity="0.5"/><rect x="21" y="232.2" width="8" height="1.6" fill="#ce9178" fill-opacity="1.0"/><rect x="29" y="232.2" width="1" height="1.6" fill="#ce9178" fill-opacity="0.5"/><rect x="30" y="232.2" width="5" height="1.6" fill="#ce9178" fill-opacity="1.0"/><rect x="35" y="232.2" width="1" height="1.6" fill="#ce9178" fill-opacity="0.5"/><rect x="36" y="232.2" width="1" height="1.6" fill="#ce9178" fill-opacity="1.0"/><rect x="37" y="232.2" width="1" height="1.6" fill="#ce9178" fill-opacity="0.5"/><rect x="38" y="232.2" width="3" height="1.6" fill="#ce9178" fill-opacity="1.0"/><rect x="41" y="232.2" width="1" height="1.6" fill="#ce9178" fill-opacity="0.5"/><rect x="42" y="232.2" width="1" height="1.6" fill="#d4d4d4" fill-opacity="0.5"/><rect x="8" y="234.2" width="1" height="1.6" fill="#ce9178" fill-opacity="0.5"/><rect x="9" y="234.2" width="4" height="1.6" fill="#ce9178" fill-opacity="1.0"/><rect x="13" y="234.2" width="1" height="1.6" fill="#ce9178" fill-opacity="0.5"/><rect x="14" y="234.2" width="6" height="1.6" fill="#ce9178" fill-opacity="1.0"/><rect x="20" y="234.2" width="1" height="1.6" fill="#ce9178" fill-opacity="0.5"/><rect x="21" y="234.2" width="8" height="1.6" fill="#ce9178" fill-opacity="1.0"/><rect x="29" y="234.2" width="1" height="1.6" fill="#ce9178" fill-opacity="0.5"/><rect x="30" y="234.2" width="5" height="1.6" fill="#ce9178" fill-opacity="1.0"/><rect x="35" y="234.2" width="1" height="1.6" fill="#ce9178" fill-opacity="0.5"/><rect x="36" y="234.2" width="1" height="1.6" fill="#ce9178" fill-opacity="1.0"/><rect x="37" y="234.2" width="1" height="1.6" fill="#ce9178" fill-opacity="0.5"/><rect x="38" y="234.2" width="3" height="1.6" fill="#ce9178" fill-opacity="1.0"/><rect x="41" y="234.2" width="1" height="1.6" fill="#ce9178" fill-opacity="0.5"/><rect x="42" y="234.2" width="1" height="1.6" fill="#d4d4d4" fill-opacity="0.5"/><rect x="8" y="236.2" width="1" height="1.6" fill="#ce9178" fill-opacity="0.5"/><rect x="9" y="236.2" width="4" height="1.6" fill="#ce9178" fill-opacity="1.0"/><rect x="13" y="236.2" width="1" height="1.6" fill="#ce9178" fill-opacity="0.5"/><rect x="14" y="236.2" width="6" height="1.6" fill="#ce9178" fill-opacity="1.0"/><rect x="20" y="236.2" width="1" height="1.6" fill="#ce9178" fill-opacity="0.5"/><rect x="21" y="236.2" width="8" height="1.6" fill="#ce9178" fill-opacity="1.0"/><rect x="29" y="236.2" width="1" height="1.6" fill="#ce9178" fill-opacity="0.5"/><rect x="30" y="236.2" width="5" height="1.6" fill="#ce9178" fill-opacity="1.0"/><rect x="35" y="236.2" width="1" height="1.6" fill="#ce9178" fill-opacity="0.5"/><rect x="36" y="236.2" width="1" height="1.6" fill="#ce9178" fill-opacity="1.0"/><rect x="37" y="236.2" width="1" height="1.6" fill="#ce9178" fill-opacity="0.5"/><rect x="38" y="236.2" width="3" height="1.6" fill="#ce9178" fill-opacity="1.0"/><rect x="41" y="236.2" width="1" height="1.6" fill="#ce9178" fill-opacity="0.5"/><rect x="42" y="236.2" width="1" height="1.6" fill="#d4d4d4" fill-opacity="0.5"/><rect x="8" y="238.2" width="1" height="1.6" fill="#ce9178" fill-opacity="0.5"/><rect x="9" y="238.2" width="4" height="1.6" fill="#ce9178" fill-opacity="1.0"/><rect x="13" y="238.2" width="1" height="1.6" fill="#ce9178" fill-opacity="0.5"/><rect x="14" y="238.2" width="6" height="1.6" fill="#ce9178" fill-opacity="1.0"/><rect x="20" y="238.2" width="1" height="1.6" fill="#ce9178" fill-opacity="0.5"/><rect x="21" y="238.2" width="8" height="1.6" fill="#ce9178" fill-opacity="1.0"/><rect x="29" y="238.2" width="1" height="1.6" fill="#ce9178" fill-opacity="0.5"/><rect x="30" y="238.2" width="5" height="1.6" fill="#ce9178" fill-opacity="1.0"/><rect x="35" y="238.2" width="1" height="1.6" fill="#ce9178" fill-opacity="0.5"/><rect x="36" y="238.2" width="1" height="1.6" fill="#ce9178" fill-opacity="1.0"/><rect x="37" y="238.2" width="1" height="1.6" fill="#ce9178" fill-opacity="0.5"/><rect x="38" y="238.2" width="3" height="1.6" fill="#ce9178" fill-opacity="1.0"/><rect x="41" y="238.2" width="1" height="1.6" fill="#ce9178" fill-opacity="0.5"/><rect x="42" y="238.2" width="1" height="1.6" fill="#d4d4d4" fill-opacity="0.5"/><rect x="8" y="240.2" width="1" height="1.6" fill="#ce9178" fill-opacity="0.5"/><rect x="9" y="240.2" width="4" height="1.6" fill="#ce9178" fill-opacity="1.0"/><rect x="13" y="240.2" width="1" height="1.6" fill="#ce9178" fill-opacity="0.5"/><rect x="14" y="240.2" width="6" height="1.6" fill="#ce9178" fill-opacity="1.0"/><rect x="20" y="240.2" width="1" height="1.6" fill="#ce9178" fill-opacity="0.5"/><rect x="21" y="240.2" width="8" height="1.6" fill="#ce9178" fill-opacity="1.0"/><rect x="29" y="240.2" width="1" height="1.6" fill="#ce9178" fill-opacity="0.5"/><rect x="30" y="240.2" width="5" height="1.6" fill="#ce9178" fill-opacity="1.0"/><rect x="35" y="240.2" width="1" height="1.6" fill="#ce9178" fill-opacity="0.5"/><rect x="36" y="240.2" width="1" height="1.6" fill="#ce9178" fill-opacity="1.0"/><rect x="37" y="240.2" width="1" height="1.6" fill="#ce9178" fill-opacity="0.5"/><rect x="38" y="240.2" width="3" height="1.6" fill="#ce9178" fill-opacity="1.0"/><rect x="41" y="240.2" width="1" height="1.6" fill="#ce9178" fill-opacity="0.5"/><rect x="42" y="240.2" width="1" height="1.6" fill="#d4d4d4" fill-opacity="0.5"/><rect x="8" y="242.2" width="1" height="1.6" fill="#ce9178" fill-opacity="0.5"/><rect x="9" y="242.2" width="4" height="1.6" fill="#ce9178" fill-opacity="1.0"/><rect x="13" y="242.2" width="1" height="1.6" fill="#ce9178" fill-opacity="0.5"/><rect x="14" y="242.2" width="6" height="1.6" fill="#ce9178" fill-opacity="1.0"/><rect x="20" y="242.2" width="1" height="1.6" fill="#ce9178" fill-opacity="0.5"/><rect x="21" y="242.2" width="8" height="1.6" fill="#ce9178" fill-opacity="1.0"/><rect x="29" y="242.2" width="1" height="1.6" fill="#ce9178" fill-opacity="0.5"/><rect x="30" y="242.2" width="5" height="1.6" fill="#ce9178" fill-opacity="1.0"/><rect x="35" y="242.2" width="1" height="1.6" fill="#ce9178" fill-opacity="0.5"/><rect x="36" y="242.2" width="1" height="1.6" fill="#ce9178" fill-opacity="1.0"/><rect x="37" y="242.2" width="1" height="1.6" fill="#ce9178" fill-opacity="0.5"/><rect x="38" y="242.2" width="3" height="1.6" fill="#ce9178" fill-opacity="1.0"/><rect x="41" y="242.2" width="1" height="1.6" fill="#ce9178" fill-opacity="0.5"/><rect x="42" y="242.2" width="1" height="1.6" fill="#d4d4d4" fill-opacity="0.5"/><rect x="8" y="244.2" width="1" height="1.6" fill="#ce9178" fill-opacity="0.5"/><rect x="9" y="244.2" width="4" height="1.6" fill="#ce9178" fill-opacity="1.0"/><rect x="13" y="244.2" width="1" height="1.6" fill="#ce9178" fill-opacity="0.5"/><rect x="14" y="244.2" width="6" height="1.6" fill="#ce9178" fill-opacity="1.0"/><rect x="20" y="244.2" width="1" height="1.6" fill="#ce9178" fill-opacity="0.5"/><rect x="21" y="244.2" width="8" height="1.6" fill="#ce9178" fill-opacity="1.0"/><rect x="29" y="244.2" width="1" height="1.6" fill="#ce9178" fill-opacity="0.5"/><rect x="30" y="244.2" width="5" height="1.6" fill="#ce9178" fill-opacity="1.0"/><rect x="35" y="244.2" width="1" height="1.6" fill="#ce9178" fill-opacity="0.5"/><rect x="36" y="244.2" width="1" height="1.6" fill="#ce9178" fill-opacity="1.0"/><rect x="37" y="244.2" width="1" height="1.6" fill="#ce9178" fill-opacity="0.5"/><rect x="38" y="244.2" width="3" height="1.6" fill="#ce9178" fill-opacity="1.0"/><rect x="41" y="244.2" width="1" height="1.6" fill="#ce9178" fill-opacity="0.5"/><rect x="42" y="244.2" width="1" height="1.6" fill="#d4d4d4" fill-opacity="0.5"/><rect x="4" y="246.2" width="1" height="1.6" fill="#179fff" fill-opacity="0.5"/><rect x="4" y="250.2" width="6" height="1.6" fill="#c586c0" fill-opacity="1.0"/><rect x="11" y="250.2" width="6" height="1.6" fill="#dcdcaa" fill-opacity="1.0"/><rect x="17" y="250.2" width="1" height="1.6" fill="#ffd700" fill-opacity="0.5"/><rect x="18" y="250.2" width="7" height="1.6" fill="#9cdcfe" fill-opacity="1.0"/><rect x="25" y="250.2" width="1" height="1.6" fill="#d4d4d4" fill-opacity="0.5"/><rect x="27" y="250.2" width="1" height="1.6" fill="#ce9178" fill-opacity="0.5"/><rect x="28" y="250.2" width="4" height="1.6" fill="#ce9178" fill-opacity="1.0"/><rect x="32" y="250.2" width="1" height="1.6" fill="#ce9178" fill-opacity="0.5"/><rect x="33" y="250.2" width="5" height="1.6" fill="#ce9178" fill-opacity="1.0"/><rect x="38" y="250.2" width="1" height="1.6" fill="#ce9178" fill-opacity="0.5"/><rect x="39" y="250.2" width="8" height="1.6" fill="#ce9178" fill-opacity="1.0"/><rect x="47" y="250.2" width="1" height="1.6" fill="#ce9178" fill-opacity="0.5"/><rect x="48" y="250.2" width="5" height="1.6" fill="#ce9178" fill-opacity="1.0"/><rect x="53" y="250.2" width="1" height="1.6" fill="#ce9178" fill-opacity="0.5"/><rect x="54" y="250.2" width="4" height="1.6" fill="#ce9178" fill-opacity="1.0"/><rect x="58" y="250.2" width="1" height="1.6" fill="#ce9178" fill-opacity="0.5"/><rect x="59" y="250.2" width="1" height="1.6" fill="#d4d4d4" fill-opacity="0.5"/><rect x="61" y="250.2" width="1" height="1.6" fill="#da70d6" fill-opacity="0.5"/><rect x="8" y="252.2" width="1" height="1.6" fill="#ce9178" fill-opacity="0.5"/><rect x="9" y="252.2" width="6" height="1.6" fill="#ce9178" fill-opacity="1.0"/><rect x="15" y="252.2" width="1" height="1.6" fill="#ce9178" fill-opacity="0.5"/><rect x="16" y="252.2" width="4" height="1.6" fill="#ce9178" fill-opacity="1.0"/><rect x="20" y="252.2" width="1" height="1.6" fill="#ce9178" fill-opacity="0.5"/><rect x="21" y="252.2" width="1" height="1.6" fill="#d4d4d4" fill-opacity="0.5"/><rect x="23" y="252.2" width="1" height="1.6" fill="#ce9178" fill-opacity="0.5"/><rect x="24" y="252.2" width="8" height="1.6" fill="#ce9178" fill-opacity="1.0"/><rect x="32" y="252.2" width="1" height="1.6" fill="#ce9178" fill-opacity="0.5"/><rect x="33" y="252.2" width="5" height="1.6" fill="#ce9178" fill-opacity="1.0"/><rect x="38" y="252.2" width="1" height="1.6" fill="#ce9178" fill-opacity="0.5"/><rect x="39" y="252.2" width="1" height="1.6" fill="#d4d4d4" fill-opacity="0.5"/><rect x="8" y="254.2" width="1" height="1.6" fill="#ce9178" fill-opacity="0.5"/><rect x="9" y="254.2" width="8" height="1.6" fill="#ce9178" fill-opacity="1.0"/><rect x="17" y="254.2" width="1" height="1.6" fill="#ce9178" fill-opacity="0.5"/><rect x="18" y="254.2" width="5" height="1.6" fill="#ce9178" fill-opacity="1.0"/><rect x="23" y="254.2" width="1" height="1.6" fill="#ce9178" fill-opacity="0.5"/><rect x="24" y="254.2" width="6" height="1.6" fill="#ce9178" fill-opacity="1.0"/><rect x="30" y="254.2" width="1" height="1.6" fill="#ce9178" fill-opacity="0.5"/><rect x="31" y="254.2" width="1" height="1.6" fill="#d4d4d4" fill-opacity="0.5"/><rect x="33" y="254.2" width="8" height="1.6" fill="#9cdcfe" fill-opacity="1.0"/><rect x="41" y="254.2" width="1" height="1.6" fill="#9cdcfe" fill-opacity="0.5"/><rect x="42" y="254.2" width="5" height="1.6" fill="#9cdcfe" fill-opacity="1.0"/><rect x="47" y="254.2" width="1" height="1.6" fill="#9cdcfe" fill-opacity="0.5"/><rect x="48" y="254.2" width="6" height="1.6" fill="#9cdcfe" fill-opacity="1.0"/><rect x="54" y="254.2" width="1" height="1.6" fill="#d4d4d4" fill-opacity="0.5"/><rect x="4" y="256.2" width="1" height="1.6" fill="#179fff" fill-opacity="0.5"/><rect x="5" y="256.2" width="1" height="1.6" fill="#da70d6" fill-opacity="0.5"/><rect x="0" y="260.2" width="3" height="1.6" fill="#569cd6" fill-opacity="1.0"/><rect x="4" y="260.2" width="10" height="1.6" fill="#dcdcaa" fill-opacity="1.0"/><rect x="14" y="260.2" width="1" height="1.6" fill="#dcdcaa" fill-opacity="0.5"/><rect x="15" y="260.2" width="4" height="1.6" fill="#dcdcaa" fill-opacity="1.0"/><rect x="19" y="260.2" width="1" height="1.6" fill="#ffd700" fill-opacity="0.5"/><rect x="20" y="260.2" width="7" height="1.6" fill="#9cdcfe" fill-opacity="1.0"/><rect x="27" y="260.2" width="1" height="1.6" fill="#ffd700" fill-opacity="0.5"/><rect x="28" y="260.2" width="1" height="1.6" fill="#d4d4d4" fill-opacity="0.5"/><rect x="4" y="262.2" width="10" height="1.6" fill="#9cdcfe" fill-opacity="1.0"/><rect x="14" y="262.2" width="1" height="1.6" fill="#9cdcfe" fill-opacity="0.5"/><rect x="15" y="262.2" width="4" height="1.6" fill="#9cdcfe" fill-opacity="1.0"/><rect x="19" y="262.2" width="1" height="1.6" fill="#9cdcfe" fill-opacity="0.5"/><rect x="20" y="262.2" width="6" height="1.6" fill="#9cdcfe" fill-opacity="1.0"/><rect x="27" y="262.2" width="1" height="1.6" fill="#d4d4d4" fill-opacity="0.5"/><rect x="29" y="262.2" width="1" height="1.6" fill="#ffd700" fill-opacity="0.5"/><rect x="8" y="264.2" width="1" height="1.6" fill="#ce9178" fill-opacity="0.5"/><rect x="9" y="264.2" width="4" height="1.6" fill="#ce9178" fill-opacity="1.0"/><rect x="13" y="264.2" width="1" height="1.6" fill="#ce9178" fill-opacity="0.5"/><rect x="14" y="264.2" width="6" height="1.6" fill="#ce9178" fill-opacity="1.0"/><rect x="20" y="264.2" width="1" height="1.6" fill="#ce9178" fill-opacity="0.5"/><rect x="21" y="264.2" width="10" height="1.6" fill="#ce9178" fill-opacity="1.0"/><rect x="31" y="264.2" width="1" height="1.6" fill="#ce9178" fill-opacity="0.5"/><rect x="32" y="264.2" width="4" height="1.6" fill="#ce9178" fill-opacity="1.0"/><rect x="36" y="264.2" width="1" height="1.6" fill="#ce9178" fill-opacity="0.5"/><rect x="37" y="264.2" width="1" height="1.6" fill="#ce9178" fill-opacity="1.0"/><rect x="38" y="264.2" width="1" height="1.6" fill="#ce9178" fill-opacity="0.5"/><rect x="39" y="264.2" width="3" height="1.6" fill="#ce9178" fill-opacity="1.0"/><rect x="42" y="264.2" width="1" height="1.6" fill="#ce9178" fill-opacity="0.5"/><rect x="43" y="264.2" width="1" height="1.6" fill="#d4d4d4" fill-opacity="0.5"/><rect x="4" y="266.2" width="1" height="1.6" fill="#179fff" fill-opacity="0.5"/><rect x="4" y="270.2" width="6" height="1.6" fill="#c586c0" fill-opacity="1.0"/><rect x="11" y="270.2" width="6" height="1.6" fill="#dcdcaa" fill-opacity="1.0"/><rect x="17" y="270.2" width="1" height="1.6" fill="#ffd700" fill-opacity="0.5"/><rect x="18" y="270.2" width="7" height="1.6" fill="#9cdcfe" fill-opacity="1.0"/><rect x="25" y="270.2" width="1" height="1.6" fill="#d4d4d4" fill-opacity="0.5"/><rect x="27" y="270.2" width="1" height="1.6" fill="#ce9178" fill-opacity="0.5"/><rect x="28" y="270.2" width="4" height="1.6" fill="#ce9178" fill-opacity="1.0"/><rect x="32" y="270.2" width="1" height="1.6" fill="#ce9178" fill-opacity="0.5"/><rect x="33" y="270.2" width="5" height="1.6" fill="#ce9178" fill-opacity="1.0"/><rect x="38" y="270.2" width="1" height="1.6" fill="#ce9178" fill-opacity="0.5"/><rect x="39" y="270.2" width="10" height="1.6" fill="#ce9178" fill-opacity="1.0"/><rect x="49" y="270.2" width="1" height="1.6" fill="#ce9178" fill-opacity="0.5"/><rect x="50" y="270.2" width="4" height="1.6" fill="#ce9178" fill-opacity="1.0"/><rect x="54" y="270.2" width="1" height="1.6" fill="#ce9178" fill-opacity="0.5"/><rect x="55" y="270.2" width="4" height="1.6" fill="#ce9178" fill-opacity="1.0"/><rect x="59" y="270.2" width="1" height="1.6" fill="#ce9178" fill-opacity="0.5"/><rect x="60" y="270.2" width="1" height="1.6" fill="#d4d4d4" fill-opacity="0.5"/><rect x="62" y="270.2" width="1" height="1.6" fill="#da70d6" fill-opacity="0.5"/><rect x="8" y="272.2" width="1" height="1.6" fill="#ce9178" fill-opacity="0.5"/><rect x="9" y="272.2" width="6" height="1.6" fill="#ce9178" fill-opacity="1.0"/><rect x="15" y="272.2" width="1" height="1.6" fill="#ce9178" fill-opacity="0.5"/><rect x="16" y="272.2" width="4" height="1.6" fill="#ce9178" fill-opacity="1.0"/><rect x="20" y="272.2" width="1" height="1.6" fill="#ce9178" fill-opacity="0.5"/><rect x="21" y="272.2" width="1" height="1.6" fill="#d4d4d4" fill-opacity="0.5"/><rect x="23" y="272.2" width="1" height="1.6" fill="#ce9178" fill-opacity="0.5"/><rect x="24" y="272.2" width="10" height="1.6" fill="#ce9178" fill-opacity="1.0"/><rect x="34" y="272.2" width="1" height="1.6" fill="#ce9178" fill-opacity="0.5"/><rect x="35" y="272.2" width="4" height="1.6" fill="#ce9178" fill-opacity="1.0"/><rect x="39" y="272.2" width="1" height="1.6" fill="#ce9178" fill-opacity="0.5"/><rect x="40" y="272.2" width="1" height="1.6" fill="#d4d4d4" fill-opacity="0.5"/><rect x="8" y="274.2" width="1" height="1.6" fill="#ce9178" fill-opacity="0.5"/><rect x="9" y="274.2" width="10" height="1.6" fill="#ce9178" fill-opacity="1.0"/><rect x="19" y="274.2" width="1" height="1.6" fill="#ce9178" fill-opacity="0.5"/><rect x="20" y="274.2" width="4" height="1.6" fill="#ce9178" fill-opacity="1.0"/><rect x="24" y="274.2" width="1" height="1.6" fill="#ce9178" fill-opacity="0.5"/><rect x="25" y="274.2" width="6" height="1.6" fill="#ce9178" fill-opacity="1.0"/><rect x="31" y="274.2" width="1" height="1.6" fill="#ce9178" fill-opacity="0.5"/><rect x="32" y="274.2" width="1" height="1.6" fill="#d4d4d4" fill-opacity="0.5"/><rect x="34" y="274.2" width="10" height="1.6" fill="#9cdcfe" fill-opacity="1.0"/><rect x="44" y="274.2" width="1" height="1.6" fill="#9cdcfe" fill-opacity="0.5"/><rect x="45" y="274.2" width="4" height="1.6" fill="#9cdcfe" fill-opacity="1.0"/><rect x="49" y="274.2" width="1" height="1.6" fill="#9cdcfe" fill-opacity="0.5"/><rect x="50" y="274.2" width="6" height="1.6" fill="#9cdcfe" fill-opacity="1.0"/><rect x="56" y="274.2" width="1" height="1.6" fill="#d4d4d4" fill-opacity="0.5"/><rect x="4" y="276.2" width="1" height="1.6" fill="#179fff" fill-opacity="0.5"/><rect x="5" y="276.2" width="1" height="1.6" fill="#da70d6" fill-opacity="0.5"/><rect x="0" y="282.2" width="3" height="1.6" fill="#569cd6" fill-opacity="1.0"/><rect x="4" y="282.2" width="3" height="1.6" fill="#dcdcaa" fill-opacity="1.0"/><rect x="7" y="282.2" width="1" height="1.6" fill="#dcdcaa" fill-opacity="0.5"/><rect x="8" y="282.2" width="6" height="1.6" fill="#dcdcaa" fill-opacity="1.0"/><rect x="14" y="282.2" width="1" height="1.6" fill="#dcdcaa" fill-opacity="0.5"/><rect x="15" y="282.2" width="2" height="1.6" fill="#dcdcaa" fill-opacity="1.0"/><rect x="17" y="282.2" width="1" height="1.6" fill="#ffd700" fill-opacity="0.5"/><rect x="18" y="282.2" width="7" height="1.6" fill="#9cdcfe" fill-opacity="1.0"/><rect x="25" y="282.2" width="1" height="1.6" fill="#ffd700" fill-opacity="0.5"/><rect x="26" y="282.2" width="1" height="1.6" fill="#d4d4d4" fill-opacity="0.5"/><rect x="4" y="284.2" width="3" height="1.6" fill="#9cdcfe" fill-opacity="1.0"/><rect x="7" y="284.2" width="1" height="1.6" fill="#9cdcfe" fill-opacity="0.5"/><rect x="8" y="284.2" width="6" height="1.6" fill="#9cdcfe" fill-opacity="1.0"/><rect x="14" y="284.2" width="1" height="1.6" fill="#9cdcfe" fill-opacity="0.5"/><rect x="15" y="284.2" width="2" height="1.6" fill="#9cdcfe" fill-opacity="1.0"/><rect x="17" y="284.2" width="1" height="1.6" fill="#9cdcfe" fill-opacity="0.5"/><rect x="18" y="284.2" width="6" height="1.6" fill="#9cdcfe" fill-opacity="1.0"/><rect x="25" y="284.2" width="1" height="1.6" fill="#d4d4d4" fill-opacity="0.5"/><rect x="27" y="284.2" width="1" height="1.6" fill="#ffd700" fill-opacity="0.5"/><rect x="8" y="286.2" width="1" height="1.6" fill="#ce9178" fill-opacity="0.5"/><rect x="9" y="286.2" width="4" height="1.6" fill="#ce9178" fill-opacity="1.0"/><rect x="13" y="286.2" width="1" height="1.6" fill="#ce9178" fill-opacity="0.5"/><rect x="14" y="286.2" width="6" height="1.6" fill="#ce9178" fill-opacity="1.0"/><rect x="20" y="286.2" width="1" height="1.6" fill="#ce9178" fill-opacity="0.5"/><rect x="21" y="286.2" width="3" height="1.6" fill="#ce9178" fill-opacity="1.0"/><rect x="24" y="286.2" width="1" height="1.6" fill="#ce9178" fill-opacity="0.5"/><rect x="25" y="286.2" width="6" height="1.6" fill="#ce9178" fill-opacity="1.0"/><rect x="31" y="286.2" width="1" height="1.6" fill="#ce9178" fill-opacity="0.5"/><rect x="32" y="286.2" width="2" height="1.6" fill="#ce9178" fill-opacity="1.0"/><rect x="34" y="286.2" width="1" height="1.6" fill="#ce9178" fill-opacity="0.5"/><rect x="35" y="286.2" width="1" height="1.6" fill="#ce9178" fill-opacity="1.0"/><rect x="36" y="286.2" width="1" height="1.6" fill="#ce9178" fill-opacity="0.5"/><rect x="37" y="286.2" width="3" height="1.6" fill="#ce9178" fill-opacity="1.0"/><rect x="40" y="286.2" width="1" height="1.6" fill="#ce9178" fill-opacity="0.5"/><rect x="41" y="286.2" width="1" height="1.6" fill="#d4d4d4" fill-opacity="0.5"/><rect x="8" y="288.2" width="1" height="1.6" fill="#ce9178" fill-opacity="0.5"/><rect x="9" y="288.2" width="4" height="1.6" fill="#ce9178" fill-opacity="1.0"/><rect x="13" y="288.2" width="1" height="1.6" fill="#ce9178" fill-opacity="0.5"/><rect x="14" y="288.2" width="6" height="1.6" fill="#ce9178" fill-opacity="1.0"/><rect x="20" y="288.2" width="1" height="1.6" fill="#ce9178" fill-opacity="0.5"/><rect x="21" y="288.2" width="3" height="1.6" fill="#ce9178" fill-opacity="1.0"/><rect x="24" y="288.2" width="1" height="1.6" fill="#ce9178" fill-opacity="0.5"/><rect x="25" y="288.2" width="6" height="1.6" fill="#ce9178" fill-opacity="1.0"/><rect x="31" y="288.2" width="1" height="1.6" fill="#ce9178" fill-opacity="0.5"/><rect x="32" y="288.2" width="2" height="1.6" fill="#ce9178" fill-opacity="1.0"/><rect x="34" y="288.2" width="1" height="1.6" fill="#ce9178" fill-opacity="0.5"/><rect x="35" y="288.2" width="1" height="1.6" fill="#ce9178" fill-opacity="1.0"/><rect x="36" y="288.2" width="1" height="1.6" fill="#ce9178" fill-opacity="0.5"/><rect x="37" y="288.2" width="3" height="1.6" fill="#ce9178" fill-opacity="1.0"/><rect x="40" y="288.2" width="1" height="1.6" fill="#ce9178" fill-opacity="0.5"/><rect x="41" y="288.2" width="1" height="1.6" fill="#d4d4d4" fill-opacity="0.5"/><rect x="8" y="290.2" width="1" height="1.6" fill="#ce9178" fill-opacity="0.5"/><rect x="9" y="290.2" width="4" height="1.6" fill="#ce9178" fill-opacity="1.0"/><rect x="13" y="290.2" width="1" height="1.6" fill="#ce9178" fill-opacity="0.5"/><rect x="14" y="290.2" width="6" height="1.6" fill="#ce9178" fill-opacity="1.0"/><rect x="20" y="290.2" width="1" height="1.6" fill="#ce9178" fill-opacity="0.5"/><rect x="21" y="290.2" width="3" height="1.6" fill="#ce9178" fill-opacity="1.0"/><rect x="24" y="290.2" width="1" height="1.6" fill="#ce9178" fill-opacity="0.5"/><rect x="25" y="290.2" width="6" height="1.6" fill="#ce9178" fill-opacity="1.0"/><rect x="31" y="290.2" width="1" height="1.6" fill="#ce9178" fill-opacity="0.5"/><rect x="32" y="290.2" width="2" height="1.6" fill="#ce9178" fill-opacity="1.0"/><rect x="34" y="290.2" width="1" height="1.6" fill="#ce9178" fill-opacity="0.5"/><rect x="35" y="290.2" width="1" height="1.6" fill="#ce9178" fill-opacity="1.0"/><rect x="36" y="290.2" width="1" height="1.6" fill="#ce9178" fill-opacity="0.5"/><rect x="37" y="290.2" width="3" height="1.6" fill="#ce9178" fill-opacity="1.0"/><rect x="40" y="290.2" width="1" height="1.6" fill="#ce9178" fill-opacity="0.5"/><rect x="41" y="290.2" width="1" height="1.6" fill="#d4d4d4" fill-opacity="0.5"/><rect x="4" y="292.2" width="1" height="1.6" fill="#179fff" fill-opacity="0.5"/><rect x="4" y="296.2" width="6" height="1.6" fill="#c586c0" fill-opacity="1.0"/><rect x="11" y="296.2" width="6" height="1.6" fill="#dcdcaa" fill-opacity="1.0"/><rect x="17" y="296.2" width="1" height="1.6" fill="#ffd700" fill-opacity="0.5"/><rect x="18" y="296.2" width="7" height="1.6" fill="#9cdcfe" fill-opacity="1.0"/><rect x="25" y="296.2" width="1" height="1.6" fill="#d4d4d4" fill-opacity="0.5"/><rect x="27" y="296.2" width="1" height="1.6" fill="#ce9178" fill-opacity="0.5"/><rect x="28" y="296.2" width="4" height="1.6" fill="#ce9178" fill-opacity="1.0"/><rect x="32" y="296.2" width="1" height="1.6" fill="#ce9178" fill-opacity="0.5"/><rect x="33" y="296.2" width="5" height="1.6" fill="#ce9178" fill-opacity="1.0"/><rect x="38" y="296.2" width="1" height="1.6" fill="#ce9178" fill-opacity="0.5"/><rect x="39" y="296.2" width="3" height="1.6" fill="#ce9178" fill-opacity="1.0"/><rect x="42" y="296.2" width="1" height="1.6" fill="#ce9178" fill-opacity="0.5"/><rect x="43" y="296.2" width="6" height="1.6" fill="#ce9178" fill-opacity="1.0"/><rect x="49" y="296.2" width="1" height="1.6" fill="#ce9178" fill-opacity="0.5"/><rect x="50" y="296.2" width="2" height="1.6" fill="#ce9178" fill-opacity="1.0"/><rect x="52" y="296.2" width="1" height="1.6" fill="#ce9178" fill-opacity="0.5"/><rect x="53" y="296.2" width="4" height="1.6" fill="#ce9178" fill-opacity="1.0"/><rect x="57" y="296.2" width="1" height="1.6" fill="#ce9178" fill-opacity="0.5"/><rect x="58" y="296.2" width="1" height="1.6" fill="#d4d4d4" fill-opacity="0.5"/><rect x="60" y="296.2" width="1" height="1.6" fill="#da70d6" fill-opacity="0.5"/><rect x="8" y="298.2" width="1" height="1.6" fill="#ce9178" fill-opacity="0.5"/><rect x="9" y="298.2" width="6" height="1.6" fill="#ce9178" fill-opacity="1.0"/><rect x="15" y="298.2" width="1" height="1.6" fill="#ce9178" fill-opacity="0.5"/><rect x="16" y="298.2" width="4" height="1.6" fill="#ce9178" fill-opacity="1.0"/><rect x="20" y="298.2" width="1" height="1.6" fill="#ce9178" fill-opacity="0.5"/><rect x="21" y="298.2" width="1" height="1.6" fill="#d4d4d4" fill-opacity="0.5"/><rect x="23" y="298.2" width="1" height="1.6" fill="#ce9178" fill-opacity="0.5"/><rect x="24" y="298.2" width="3" height="1.6" fill="#ce9178" fill-opacity="1.0"/><rect x="27" y="298.2" width="1" height="1.6" fill="#ce9178" fill-opacity="0.5"/><rect x="28" y="298.2" width="6" height="1.6" fill="#ce9178" fill-opacity="1.0"/><rect x="34" y="298.2" width="1" height="1.6" fill="#ce9178" fill-opacity="0.5"/><rect x="35" y="298.2" width="2" height="1.6" fill="#ce9178" fill-opacity="1.0"/><rect x="37" y="298.2" width="1" height="1.6" fill="#ce9178" fill-opacity="0.5"/><rect x="38" y="298.2" width="1" height="1.6" fill="#d4d4d4" fill-opacity="0.5"/><rect x="8" y="300.2" width="1" height="1.6" fill="#ce9178" fill-opacity="0.5"/><rect x="9" y="300.2" width="3" height="1.6" fill="#ce9178" fill-opacity="1.0"/><rect x="12" y="300.2" width="1" height="1.6" fill="#ce9178" fill-opacity="0.5"/><rect x="13" y="300.2" width="6" height="1.6" fill="#ce9178" fill-opacity="1.0"/><rect x="19" y="300.2" width="1" height="1.6" fill="#ce9178" fill-opacity="0.5"/><rect x="20" y="300.2" width="2" height="1.6" fill="#ce9178" fill-opacity="1.0"/><rect x="22" y="300.2" width="1" height="1.6" fill="#ce9178" fill-opacity="0.5"/><rect x="23" y="300.2" width="6" height="1.6" fill="#ce9178" fill-opacity="1.0"/><rect x="29" y="300.2" width="1" height="1.6" fill="#ce9178" fill-opacity="0.5"/><rect x="30" y="300.2" width="1" height="1.6" fill="#d4d4d4" fill-opacity="0.5"/><rect x="32" y="300.2" width="3" height="1.6" fill="#9cdcfe" fill-opacity="1.0"/><rect x="35" y="300.2" width="1" height="1.6" fill="#9cdcfe" fill-opacity="0.5"/><rect x="36" y="300.2" width="6" height="1.6" fill="#9cdcfe" fill-opacity="1.0"/><rect x="42" y="300.2" width="1" height="1.6" fill="#9cdcfe" fill-opacity="0.5"/><rect x="43" y="300.2" width="2" height="1.6" fill="#9cdcfe" fill-opacity="1.0"/><rect x="45" y="300.2" width="1" height="1.6" fill="#9cdcfe" fill-opacity="0.5"/><rect x="46" y="300.2" width="6" height="1.6" fill="#9cdcfe" fill-opacity="1.0"/><rect x="52" y="300.2" width="1" height="1.6" fill="#d4d4d4" fill-opacity="0.5"/><rect x="4" y="302.2" width="1" height="1.6" fill="#179fff" fill-opacity="0.5"/><rect x="5" y="302.2" width="1" height="1.6" fill="#da70d6" fill-opacity="0.5"/></g></svg>
<div style="position:absolute;left:1802px;top:399px;width:3px;height:24px;background:#4a9a52;"></div>
<div style="position:absolute;left:1920.5px;top:119px;width:1px;height:938px;background:#2a2a2a;"></div>
<div style="position:absolute;left:1921.5px;top:157px;width:15.5px;height:2.5px;background:#a8a8a8;"></div>
<div style="position:absolute;left:1921.5px;top:807px;width:6px;height:60px;background:#3d8a45;"></div>
<svg style="position:absolute;left:1926px;top:534px;" width="14" height="20" viewBox="0 0 14 20"><path d="M11.5 2 L3.5 10 L11.5 18" fill="none" stroke="#a8a8a8" stroke-width="3"/></svg>
<div style="position:absolute;left:17px;top:1057.5px;width:43px;height:26.5px;background:#0078d4;"></div>
<svg style="position:absolute;left:17px;top:1057px;" width="43" height="27" viewBox="17 1057 43 27"><path d="M32.7 1066.8 L38.1 1071.8 L32.7 1076.9 M43.4 1063.3 L38.6 1067.6 L43.4 1072.1" fill="none" stroke="#ffffff" stroke-width="1.4"/></svg>
<svg style="position:absolute;left:70px;top:1061px;" width="16" height="18" viewBox="0 0 16 18"><circle cx="4" cy="3" r="2" fill="none" stroke="#ccc" stroke-width="1.3"/><circle cx="4" cy="15" r="2" fill="none" stroke="#ccc" stroke-width="1.3"/><circle cx="12.5" cy="6" r="2" fill="none" stroke="#ccc" stroke-width="1.3"/><path d="M4 5 V13 M12.5 8 Q12.5 11 5.5 13.5" fill="none" stroke="#ccc" stroke-width="1.3"/></svg>
<div style="position:absolute;left:90.00px;top:1060.5px;white-space:pre;font-family:'Liberation Sans', sans-serif;font-size:14px;line-height:19px;color:#cccccc;font-weight:400;letter-spacing:1.000px;">main*</div>
<svg style="position:absolute;left:137px;top:1061px;" width="19" height="18" viewBox="0 0 19 18"><path d="M3 9 A6.5 6.5 0 0 1 15 5.5 M16 9 A6.5 6.5 0 0 1 4 12.5" fill="none" stroke="#ccc" stroke-width="1.4"/><path d="M15.5 2 V6 H11.5 M3.5 16 V12 H7.5" fill="none" stroke="#ccc" stroke-width="1.4"/></svg>
<svg style="position:absolute;left:175px;top:1061px;" width="18" height="18" viewBox="0 0 18 18"><circle cx="9" cy="9" r="7.3" fill="none" stroke="#ccc" stroke-width="1.3"/><path d="M6 6 L12 12 M12 6 L6 12" stroke="#ccc" stroke-width="1.3"/></svg>
<div style="position:absolute;left:196.00px;top:1060.5px;white-space:pre;font-family:'Liberation Sans', sans-serif;font-size:14px;line-height:19px;color:#cccccc;font-weight:400;letter-spacing:0.000px;">0</div>
<svg style="position:absolute;left:208px;top:1061px;" width="18" height="18" viewBox="0 0 18 18"><path d="M9 1.5 L17 16.5 H1 Z" fill="none" stroke="#ccc" stroke-width="1.3" stroke-linejoin="round"/><path d="M9 6.5 V11.5 M9 13 V14.5" stroke="#ccc" stroke-width="1.5"/></svg>
<div style="position:absolute;left:229.50px;top:1060.5px;white-space:pre;font-family:'Liberation Sans', sans-serif;font-size:14px;line-height:19px;color:#cccccc;font-weight:400;letter-spacing:0.000px;">0</div>
<svg style="position:absolute;left:1018px;top:1061px;" width="13" height="18" viewBox="0 0 13 18"><circle cx="6.5" cy="8" r="3.5" fill="none" stroke="#ccc" stroke-width="1.4"/><path d="M6.5 1 V4.5 M6.5 11.5 V17" stroke="#ccc" stroke-width="1.4"/></svg>
<div style="position:absolute;left:1038.00px;top:1060.5px;white-space:pre;font-family:'Liberation Sans', sans-serif;font-size:14px;line-height:19px;color:#cccccc;font-weight:400;letter-spacing:0.312px;">James Doyen (2 weeks ago)</div>
<div style="position:absolute;left:1242.00px;top:1060.5px;white-space:pre;font-family:'Liberation Sans', sans-serif;font-size:14px;line-height:19px;color:#cccccc;font-weight:400;letter-spacing:0.100px;">Ln 9, Col 1</div>
<div style="position:absolute;left:1331.00px;top:1060.5px;white-space:pre;font-family:'Liberation Sans', sans-serif;font-size:14px;line-height:19px;color:#cccccc;font-weight:400;letter-spacing:-0.050px;">Spaces: 4</div>
<div style="position:absolute;left:1412.00px;top:1060.5px;white-space:pre;font-family:'Liberation Sans', sans-serif;font-size:14px;line-height:19px;color:#cccccc;font-weight:400;letter-spacing:0.250px;">UTF-8</div>
<div style="position:absolute;left:1471.00px;top:1060.5px;white-space:pre;font-family:'Liberation Sans', sans-serif;font-size:14px;line-height:19px;color:#cccccc;font-weight:400;letter-spacing:1.000px;">LF</div>
<div style="position:absolute;left:1508.00px;top:1060.5px;white-space:pre;font-family:'Liberation Sans', sans-serif;font-size:14px;line-height:19px;color:#cccccc;font-weight:400;letter-spacing:1.400px;">{ }</div>
<div style="position:absolute;left:1532.50px;top:1060.5px;white-space:pre;font-family:'Liberation Sans', sans-serif;font-size:14px;line-height:19px;color:#cccccc;font-weight:400;letter-spacing:1.040px;">Python</div>
<svg style="position:absolute;left:1600px;top:1061px;" width="20" height="18" viewBox="0 0 20 18"><path d="M4 7 Q2 2 6 2 H8 Q10 2 10 5 Q10 2 12 2 H14 Q18 2 16 7 Q18 9 18 12 Q18 16 10 17 Q2 16 2 12 Q2 9 4 7Z" fill="none" stroke="#ccc" stroke-width="1.4"/><rect x="6" y="9" width="2" height="3.5" fill="#ccc"/><rect x="12" y="9" width="2" height="3.5" fill="#ccc"/></svg>
<div style="position:absolute;left:1639.00px;top:1060.5px;white-space:pre;font-family:'Liberation Sans', sans-serif;font-size:14px;line-height:19px;color:#cccccc;font-weight:400;letter-spacing:0.500px;">3.12.3 (python3_venv)</div>
<svg style="position:absolute;left:1808px;top:1061px;" width="18" height="18" viewBox="0 0 18 18"><circle cx="9" cy="9" r="7" fill="none" stroke="#ccc" stroke-width="1.4"/><path d="M4 14 L14 4" stroke="#ccc" stroke-width="1.4"/></svg>
<div style="position:absolute;left:1827.50px;top:1060.5px;white-space:pre;font-family:'Liberation Sans', sans-serif;font-size:14px;line-height:19px;color:#cccccc;font-weight:400;letter-spacing:1.143px;">Prettier</div>
<svg style="position:absolute;left:1901px;top:1060px;" width="19" height="19" viewBox="0 0 19 19"><path d="M3 14 H16 L14.5 12 V8 Q14.5 3.5 9.5 3.5 Q4.5 3.5 4.5 8 V12 Z M7.5 16 Q9.5 18 11.5 16" fill="none" stroke="#ccc" stroke-width="1.4"/><circle cx="14.5" cy="4" r="3" fill="#ccc"/></svg></div></body></html>
